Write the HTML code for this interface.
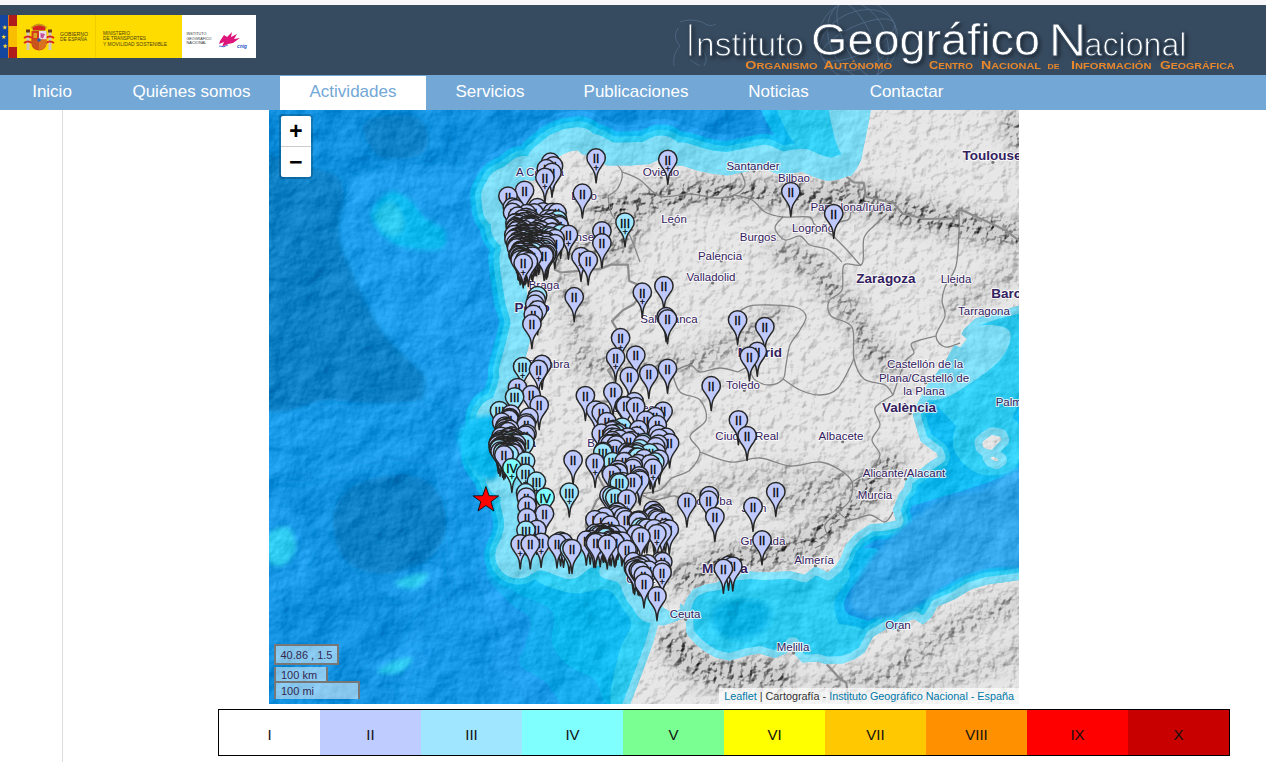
<!DOCTYPE html>
<html lang="es"><head><meta charset="utf-8"><title>Instituto Geográfico Nacional</title>
<style>
html,body{margin:0;padding:0}
body{width:1266px;height:762px;overflow:hidden;background:#fff;position:relative;font-family:"Liberation Sans",sans-serif}
#top{position:absolute;left:0;top:0;width:1266px;height:5px;background:#f8f8fa}
#hdr{position:absolute;left:0;top:5px;width:1266px;height:70px;background:#374b60;overflow:hidden}
#nav{position:absolute;left:0;top:75px;width:1266px;height:35px;background:#72a7d6}
.ni{position:absolute;top:0;height:35px;line-height:33px;text-align:center;color:#fff;font-size:17px;white-space:nowrap}
.ni.act{background:#fff;color:#72a7d6;top:1px;height:34px;line-height:31px}
#vline{position:absolute;left:62px;top:110px;width:1px;height:652px;background:#ddd}
#map{position:absolute;left:269px;top:110px;width:750px;height:594px;overflow:hidden;background:#1e90e0}
#zoom{position:absolute;left:10px;top:4px;width:30px;height:61px;border:2px solid rgba(0,0,0,0.2);border-radius:4px;background-clip:padding-box}
#zoom div{width:30px;height:30px;background:#fff;color:#000;text-align:center;font:bold 23px/34px "Liberation Mono",monospace;overflow:hidden}
#zoom div:first-child{border-bottom:1px solid #ccc;border-radius:2px 2px 0 0}
#zoom div:last-child{border-radius:0 0 2px 2px}
#mpos{position:absolute;left:5px;top:534px;width:61px;height:17px;border:2px solid #777;background:rgba(255,255,255,0.5);font-size:11px;line-height:19px;color:#35294f;text-align:center;white-space:nowrap}
.sc{position:absolute;left:5px;border:2px solid #777;background:rgba(255,255,255,0.5);font-size:11px;color:#35294f;padding-left:5px;white-space:nowrap;box-sizing:border-box}
#sckm{top:557px;width:54px;height:16px;border-top:none;line-height:16px}
#scmi{top:571px;width:86px;height:18px;border-bottom:none;line-height:17px}
#attr{position:absolute;right:0;bottom:0;height:16px;line-height:16px;padding:0 5px;background:rgba(255,255,255,0.7);font-size:10.8px;color:#333;white-space:nowrap}
#attr a{color:#0078a8;text-decoration:none}
#legend{position:absolute;left:218px;top:709px;width:1010px;height:45px;border:1px solid #000}
.lc{position:absolute;top:0;width:101px;height:45px;line-height:49px;text-align:center;font-size:15px;color:#111}
</style></head><body>
<div id="top"></div>
<div id="hdr">
<svg width="1266" height="70" viewBox="0 5 1266 70" style="position:absolute;left:0;top:0">
<!-- faint globe + map watermark -->
<g fill="none" stroke="#5b7897" stroke-width="0.8" opacity="0.7">
<circle cx="858" cy="40" r="40"/>
<ellipse cx="858" cy="40" rx="40" ry="14" transform="rotate(-25 858 40)"/>
<ellipse cx="858" cy="40" rx="40" ry="28" transform="rotate(-25 858 40)"/>
<ellipse cx="858" cy="40" rx="14" ry="40" transform="rotate(-25 858 40)"/>
<ellipse cx="858" cy="40" rx="28" ry="40" transform="rotate(-25 858 40)"/>
<path d="M680 22q10-4 22 0q8 6 14 2M678 28q-6 10 2 18q-8 8-6 20M700 48q10 8 4 18M690 60l10 6"/>
</g>
<!-- logos -->
<rect x="0" y="15" width="256" height="43" fill="#ffdc00"/>
<rect x="0" y="15" width="8" height="43" fill="#1446a0"/>
<rect x="8.5" y="15" width="8.5" height="43" fill="#b01c1c"/>
<rect x="8.5" y="26" width="8.5" height="21" fill="#f9be00"/>
<g fill="#ffd83a"><polygon points="4.8,24.9 5.4,26.6 7.3,26.7 5.8,27.8 6.3,29.6 4.8,28.6 3.3,29.6 3.8,27.8 2.3,26.7 4.2,26.6"/><polygon points="3.8,34.4 4.4,36.1 6.3,36.2 4.8,37.3 5.3,39.1 3.8,38.1 2.3,39.1 2.8,37.3 1.3,36.2 3.2,36.1"/><polygon points="5.2,43.6 5.8,45.3 7.7,45.4 6.2,46.5 6.7,48.3 5.2,47.3 3.7,48.3 4.2,46.5 2.7,45.4 4.6,45.3"/></g>
<rect x="182" y="15" width="74" height="43" fill="#fff"/>
<rect x="95" y="15" width="0.6" height="43" fill="#e8c400"/>
<!-- coat of arms -->
<g>
<path d="M31 27q8-7 16 0l-2 4h-12z" fill="#c9931a"/>
<path d="M33 27q6-3 12 0v3h-12z" fill="#d8241f"/>
<rect x="26.5" y="31" width="3" height="19" fill="#cfc7c0"/><rect x="48.5" y="31" width="3" height="19" fill="#cfc7c0"/>
<rect x="26" y="29.5" width="4" height="3" fill="#6e3a14"/><rect x="48" y="29.5" width="4" height="3" fill="#6e3a14"/>
<path d="M24 38q4-3 8 0M46 38q4-3 8 0M24 43q4-3 8 0M46 43q4-3 8 0" stroke="#d8241f" stroke-width="1.8" fill="none"/>
<path d="M31.500 31h15v12q0 7-7.500 7.500q-7.500-.5-7.500-7.500z" fill="#d63a1e"/>
<rect x="39" y="31" width="7.500" height="8.500" fill="#e9dfe6"/>
<path d="M40.500 33l4.500 1l-2 4.500l-2.500-1z" fill="#c5509a"/>
<rect x="33.500" y="33" width="3.500" height="5" fill="#d9a520"/>
<path d="M39 39.500h7.500v3.500q0 6-7.500 7z" fill="#d9721e"/>
<path d="M31.500 39.500h7.500v10.500q-7.500-1-7.500-7z" fill="#c8541b"/>
<circle cx="39" cy="40" r="1.800" fill="#2a56a8"/>
</g>
<g font-family="Liberation Sans, sans-serif" fill="#4a3c10">
<text x="60" y="35.500" font-size="4.700" textLength="28" lengthAdjust="spacingAndGlyphs">GOBIERNO</text>
<text x="60" y="41" font-size="4.700" textLength="27" lengthAdjust="spacingAndGlyphs">DE ESPAÑA</text>
<text x="103" y="35" font-size="4.500" textLength="27" lengthAdjust="spacingAndGlyphs">MINISTERIO</text>
<text x="103" y="40.300" font-size="4.500" textLength="43" lengthAdjust="spacingAndGlyphs">DE TRANSPORTES</text>
<text x="103" y="45.600" font-size="4.500" textLength="64" lengthAdjust="spacingAndGlyphs">Y MOVILIDAD SOSTENIBLE</text>
</g>
<g font-family="Liberation Sans, sans-serif" fill="#333">
<text x="186.500" y="35.300" font-size="3.500" textLength="20" lengthAdjust="spacingAndGlyphs">INSTITUTO</text>
<text x="186.500" y="39.800" font-size="3.500" textLength="25" lengthAdjust="spacingAndGlyphs">GEOGRÁFICO</text>
<text x="186.500" y="44.300" font-size="3.500" textLength="20" lengthAdjust="spacingAndGlyphs">NACIONAL</text>
</g>
<path d="M220 41l4-6l3 2l5-5l-1 5l6-3l-3 5l6-1l-7 5l-5 1l-6 3l2-5l-5 2z" fill="#e0157c"/>
<path d="M219 46q5 2 9-1" stroke="#2a56c8" stroke-width="0.800" fill="none"/>
<text x="237" y="47.500" font-size="4.500" font-style="italic" font-weight="bold" fill="#2a56c8" font-family="Liberation Sans, sans-serif" textLength="10" lengthAdjust="spacingAndGlyphs">cnig</text>
<!-- title -->
<g fill="#fff" font-family="Liberation Sans, sans-serif">
<g style="filter:drop-shadow(2px 2px 2px rgba(0,0,0,0.45))">
<text y="55.800" class="thin"><tspan x="687.300" font-size="46.500" textLength="6" lengthAdjust="spacingAndGlyphs">I</tspan><tspan x="696" font-size="33.500" textLength="108" lengthAdjust="spacingAndGlyphs">nstituto</tspan></text>
<text x="811" y="55.300" font-size="45" class="semi" textLength="229" lengthAdjust="spacingAndGlyphs">Geográfico</text>
<text y="55.800" class="thin"><tspan x="1048.500" font-size="46.500" textLength="38" lengthAdjust="spacingAndGlyphs">N</tspan><tspan x="1084.500" font-size="33.500" textLength="102" lengthAdjust="spacingAndGlyphs">acional</tspan></text>
</g>
</g>
<g fill="#e8872b" font-family="Liberation Sans, sans-serif" font-weight="bold" font-size="8.500" lengthAdjust="spacingAndGlyphs">
<text x="745.300" y="68.500" textLength="72.300" lengthAdjust="spacingAndGlyphs"><tspan font-size="11">O</tspan>RGANISMO</text>
<text x="823.500" y="68.500" textLength="68.700" lengthAdjust="spacingAndGlyphs"><tspan font-size="11">A</tspan>UTÓNOMO</text>
<text x="929" y="68.500" textLength="44" lengthAdjust="spacingAndGlyphs"><tspan font-size="11">C</tspan>ENTRO</text>
<text x="981" y="68.500" textLength="60" lengthAdjust="spacingAndGlyphs"><tspan font-size="11">N</tspan>ACIONAL</text>
<text x="1047.600" y="68.500" font-size="6.500" textLength="12" lengthAdjust="spacingAndGlyphs">DE</text>
<text x="1071" y="68.500" textLength="80.500" lengthAdjust="spacingAndGlyphs"><tspan font-size="11">I</tspan>NFORMACIÓN</text>
<text x="1160" y="68.500" textLength="74.500" lengthAdjust="spacingAndGlyphs"><tspan font-size="11">G</tspan>EOGRÁFICA</text>
</g>
</svg>
<style>.thin{stroke:#374b60;stroke-width:1.1px}.semi{stroke:#374b60;stroke-width:.7px}</style>
</div>
<div id="nav"><a class="ni" style="left:1px;width:102px">Inicio</a><a class="ni" style="left:103px;width:177px">Quiénes somos</a><a class="ni act" style="left:280px;width:146px">Actividades</a><a class="ni" style="left:426px;width:128px">Servicios</a><a class="ni" style="left:554px;width:164px">Publicaciones</a><a class="ni" style="left:718px;width:121px">Noticias</a><a class="ni" style="left:839px;width:135px">Contactar</a></div>
<div id="vline"></div>
<div id="map">
<svg width="750" height="594" viewBox="0 0 750 594" style="position:absolute;left:0;top:0;font-family:'Liberation Sans',sans-serif"><defs>
<filter id="reliefL" x="0" y="0" width="100%" height="100%" color-interpolation-filters="sRGB">
<feTurbulence type="fractalNoise" baseFrequency="0.11" numOctaves="4" seed="7" result="n"/>
<feDiffuseLighting in="n" surfaceScale="0.8" diffuseConstant="1.42" lighting-color="#fff" result="l"><feDistantLight azimuth="225" elevation="45"/></feDiffuseLighting>
<feComposite in="l" in2="SourceGraphic" operator="arithmetic" k1="1" k2="0" k3="0" k4="0" result="m"/>
<feComposite in="m" in2="SourceGraphic" operator="in"/>
</filter>
<filter id="reliefM" x="0" y="0" width="100%" height="100%" color-interpolation-filters="sRGB">
<feTurbulence type="fractalNoise" baseFrequency="0.13" numOctaves="4" seed="3" result="n"/>
<feDiffuseLighting in="n" surfaceScale="4" diffuseConstant="1.42" lighting-color="#fff" result="l"><feDistantLight azimuth="225" elevation="45"/></feDiffuseLighting>
<feComposite in="l" in2="SourceGraphic" operator="arithmetic" k1="1" k2="0" k3="0" k4="0" result="m"/>
<feComposite in="m" in2="SourceGraphic" operator="in"/>
</filter>
<filter id="reliefO" x="0" y="0" width="100%" height="100%" color-interpolation-filters="sRGB">
<feTurbulence type="fractalNoise" baseFrequency="0.028" numOctaves="5" seed="11" result="n"/>
<feDiffuseLighting in="n" surfaceScale="3" diffuseConstant="1" lighting-color="#fff" result="l"><feDistantLight azimuth="225" elevation="45"/></feDiffuseLighting>
<feComposite in="l" in2="SourceGraphic" operator="arithmetic" k1="0" k2="0.45" k3="1" k4="-0.318"/>
</filter>
<filter id="b2"><feGaussianBlur stdDeviation="2"/></filter>
<filter id="b4"><feGaussianBlur stdDeviation="4"/></filter>
<filter id="b8"><feGaussianBlur stdDeviation="8"/></filter>
<clipPath id="landclip"><path d="M608.3 -30.3L603.8 -11.1L599.2 14.4L594.7 36.5L592.4 49.1L588.8 56.7L586.9 59.8L582.4 65.4L577.4 66.7L568.3 69.8L558.3 71.1L544.6 66.7L533.2 61.7L524.1 62.9L521.0 68.6L511.9 65.4L501.4 61.1L495.0 57.9L486.4 59.8L474.1 62.3L458.2 65.4L442.2 63.6L428.1 60.4L412.6 55.4L400.8 55.4L392.2 48.5L380.8 54.1L361.2 55.4L338.0 55.4L323.4 47.2L312.5 44.1L308.9 40.3L300.2 41.6L292.0 45.3L280.2 54.8L282.9 60.4L285.2 64.8L276.1 66.1L262.5 71.1L256.1 69.2L246.5 77.3L239.2 79.8L235.1 86.7L236.5 97.2L242.9 102.2L246.5 104.1L251.1 103.5L246.5 111.5L244.7 116.5L251.1 119.5L257.9 114.6L254.7 123.9L260.2 126.9L254.7 131.3L254.7 136.2L262.5 136.2L255.6 144.2L253.4 148.5L254.3 159.5L256.1 170.5L258.8 188.1L263.4 203.2L264.7 215.3L260.2 233.9L255.6 251.3L252.9 261.4L254.7 265.0L249.7 284.0L245.6 295.8L238.8 306.5L230.1 310.0L232.9 319.4L229.7 331.1L226.0 344.0L229.7 349.2L238.3 349.2L244.2 347.5L251.1 339.9L249.7 348.7L242.0 351.0L237.0 353.3L238.8 365.5L246.5 363.8L253.8 360.3L258.8 366.1L257.9 380.6L254.3 392.2L257.9 406.6L257.9 420.9L254.3 435.2L249.3 445.5L251.5 446.6L263.8 441.5L270.2 439.8L282.9 442.1L294.3 446.6L300.2 448.9L310.2 440.9L321.2 436.9L335.3 434.7L342.1 436.9L347.6 440.9L360.3 447.2L369.0 458.0L366.2 462.0L371.7 469.4L376.2 473.3L371.7 473.3L375.3 480.7L380.8 487.5L384.0 493.1L389.0 493.1L395.8 498.8L403.1 502.7L411.3 499.3L411.3 493.1L414.9 496.5L417.2 489.2L424.0 479.6L436.3 474.5L447.7 472.8L453.6 468.2L457.2 462.6L471.8 462.6L482.3 461.4L498.2 462.6L521.0 460.9L535.5 464.8L546.4 456.3L558.7 462.6L567.4 455.2L572.4 446.6L576.5 435.2L586.5 423.8L601.5 414.0L613.8 413.5L627.0 410.6L623.8 399.7L627.5 390.4L630.2 383.5L635.2 377.7L636.6 369.6L642.5 364.4L652.5 358.6L660.7 352.1L668.9 346.9L667.5 342.8L663.4 339.9L651.6 331.1L648.4 320.6L643.8 304.7L648.8 292.9L655.2 281.0L659.3 273.3L665.2 266.2L677.1 250.7L680.2 244.1L685.7 235.1L691.2 237.5L698.0 229.1L692.5 224.3L694.8 219.5L706.2 208.7L715.3 205.6L728.0 201.4L740.3 198.4L751.7 195.4L757.6 189.3L776.7 175.9L776.7 -30.3Z"/><path d="M344.4 619.9L358.9 600.1L372.1 565.8L378.5 548.6L384.0 533.0L389.0 515.1L394.4 515.6L405.8 511.7L414.9 507.8L416.7 509.4L417.2 520.1L418.1 524.6L426.7 534.1L435.4 541.3L446.3 547.5L460.4 550.8L479.5 545.3L490.9 543.6L505.9 548.0L517.3 543.6L523.7 534.7L524.6 543.0L533.2 552.5L548.3 551.4L556.9 554.2L573.7 553.6L585.6 549.2L595.6 542.5L604.2 526.8L617.4 519.0L629.3 520.1L637.9 511.7L645.2 508.9L653.8 514.5L662.5 507.2L668.4 496.5L685.7 489.2L701.6 479.6L718.0 474.5L740.3 471.6L758.1 468.8L781.3 466.5L781.3 619.9Z"/><path d="M713.0 332.3L717.6 328.2L723.0 324.7L731.2 326.4L732.6 329.9L726.7 335.8L723.0 339.9L717.6 339.3L713.9 337.0Z"/><path d="M721.2 347.5L724.4 346.3L730.3 349.8L727.6 351.6L723.0 349.8Z"/></clipPath>
</defs><g filter="url(#reliefO)"><rect width="750" height="594" fill="#1090de"/><g filter="url(#b4)" fill="#1698e6"><path d="M-19.0 290.0C-5.7 278.7 31.8 292.0 61.0 292.0C90.2 292.0 127.7 291.2 156.0 290.0C184.3 288.8 216.8 273.3 231.0 285.0C245.2 296.7 246.0 345.8 241.0 360.0C236.0 374.2 211.8 370.0 201.0 370.0C190.2 370.0 187.7 362.5 176.0 360.0C164.3 357.5 148.5 355.0 131.0 355.0C113.5 355.0 87.7 357.5 71.0 360.0C54.3 362.5 46.0 370.0 31.0 370.0C16.0 370.0 -10.7 373.3 -19.0 360.0C-27.3 346.7 -32.3 301.3 -19.0 290.0Z"/><path d="M171.0 360.0C175.0 353.3 191.0 365.0 201.0 370.0C211.0 375.0 226.0 373.3 231.0 390.0C236.0 406.7 236.0 453.3 231.0 470.0C226.0 486.7 209.3 490.8 201.0 490.0C192.7 489.2 185.0 478.3 181.0 465.0C177.0 451.7 178.7 427.5 177.0 410.0C175.3 392.5 167.0 366.7 171.0 360.0Z"/><path d="M161.0 495.0C173.5 484.2 199.3 474.2 211.0 480.0C222.7 485.8 222.7 508.3 231.0 530.0C239.3 551.7 275.2 596.7 261.0 610.0C246.8 623.3 166.8 620.8 146.0 610.0C125.2 599.2 133.5 564.2 136.0 545.0C138.5 525.8 148.5 505.8 161.0 495.0Z"/></g><g filter="url(#b2)" fill="#0e80c6"><path d="M-19.0 61.0C-10.7 23.3 16.8 57.3 31.0 58.0C45.2 58.7 58.5 59.7 66.0 65.0C73.5 70.3 75.2 80.3 76.0 90.0C76.8 99.7 69.8 111.3 71.0 123.0C72.2 134.7 76.7 145.0 83.0 160.0C89.3 175.0 101.0 199.7 109.0 213.0C117.0 226.3 123.2 231.3 131.0 240.0C138.8 248.7 151.8 257.0 156.0 265.0C160.2 273.0 163.5 283.3 156.0 288.0C148.5 292.7 126.8 292.7 111.0 293.0C95.2 293.3 82.7 291.5 61.0 290.0C39.3 288.5 -5.7 322.2 -19.0 284.0C-32.3 245.8 -27.3 98.7 -19.0 61.0Z"/><path d="M94.0 18.0C93.7 11.3 100.3 8.8 109.0 7.0C117.7 5.2 137.7 4.0 146.0 7.0C154.3 10.0 158.2 18.7 159.0 25.0C159.8 31.3 159.0 41.3 151.0 45.0C143.0 48.7 120.5 51.5 111.0 47.0C101.5 42.5 94.3 24.7 94.0 18.0Z"/><path d="M64.0 412.0C64.0 400.7 68.2 389.5 76.0 382.0C83.8 374.5 98.5 369.3 111.0 367.0C123.5 364.7 140.7 364.2 151.0 368.0C161.3 371.8 169.0 380.0 173.0 390.0C177.0 400.0 178.7 417.2 175.0 428.0C171.3 438.8 161.7 449.0 151.0 455.0C140.3 461.0 123.5 464.8 111.0 464.0C98.5 463.2 83.8 458.7 76.0 450.0C68.2 441.3 64.0 423.3 64.0 412.0Z"/></g><g filter="url(#b2)"><path d="M76.0 90.0C78.5 80.8 76.8 73.7 86.0 68.0C95.2 62.3 115.2 58.2 131.0 56.0C146.8 53.8 165.2 53.0 181.0 55.0C196.8 57.0 216.8 53.8 226.0 68.0C235.2 82.2 234.3 103.0 236.0 140.0C237.7 177.0 248.5 265.0 236.0 290.0C223.5 315.0 174.3 294.2 161.0 290.0C147.7 285.8 161.0 273.3 156.0 265.0C151.0 256.7 138.8 248.7 131.0 240.0C123.2 231.3 117.0 226.3 109.0 213.0C101.0 199.7 89.3 175.0 83.0 160.0C76.7 145.0 72.2 134.7 71.0 123.0C69.8 111.3 73.5 99.2 76.0 90.0Z" fill="#1c9cea"/><path d="M102.0 102.0C103.7 95.3 114.5 84.0 121.0 82.0C127.5 80.0 135.2 85.7 141.0 90.0C146.8 94.3 150.3 103.0 156.0 108.0C161.7 113.0 172.2 115.0 175.0 120.0C177.8 125.0 177.8 134.8 173.0 138.0C168.2 141.2 153.8 139.7 146.0 139.0C138.2 138.3 131.8 136.8 126.0 134.0C120.2 131.2 115.0 127.3 111.0 122.0C107.0 116.7 100.3 108.7 102.0 102.0Z" fill="#0eb8ee"/><path d="M107.0 104.0C108.7 99.3 118.3 90.7 123.0 92.0C127.7 93.3 134.3 106.3 135.0 112.0C135.7 117.7 130.7 124.7 127.0 126.0C123.3 127.3 116.3 123.7 113.0 120.0C109.7 116.3 105.3 108.7 107.0 104.0Z" fill="#2ecaf0"/><path d="M111.0 478.0C111.0 473.0 126.0 463.7 136.0 460.0C146.0 456.3 165.8 452.7 171.0 456.0C176.2 459.3 172.8 474.3 167.0 480.0C161.2 485.7 145.3 490.3 136.0 490.0C126.7 489.7 111.0 483.0 111.0 478.0Z" fill="#1c9cea"/><path d="M126.0 474.0C125.0 472.0 135.5 467.7 141.0 466.0C146.5 464.3 158.0 462.0 159.0 464.0C160.0 466.0 152.5 476.3 147.0 478.0C141.5 479.7 127.0 476.0 126.0 474.0Z" fill="#2ecaf0"/><path d="M93.0 566.0C91.3 561.3 106.3 550.3 116.0 546.0C125.7 541.7 144.3 538.5 151.0 540.0C157.7 541.5 160.2 549.3 156.0 555.0C151.8 560.7 136.5 572.2 126.0 574.0C115.5 575.8 94.7 570.7 93.0 566.0Z" fill="#1c9cea"/><path d="M109.0 562.0C108.2 560.2 120.3 553.3 126.0 551.0C131.7 548.7 142.2 546.2 143.0 548.0C143.8 549.8 136.7 559.7 131.0 562.0C125.3 564.3 109.8 563.8 109.0 562.0Z" fill="#2ecaf0"/><path d="M-9.0 405.0C-3.0 392.8 18.3 397.8 27.0 402.0C35.7 406.2 42.7 418.7 43.0 430.0C43.3 441.3 37.7 462.5 29.0 470.0C20.3 477.5 -2.7 485.8 -9.0 475.0C-15.3 464.2 -15.0 417.2 -9.0 405.0Z" fill="#1c9cea"/><path d="M-1.0 425.0C2.3 419.7 14.3 415.8 19.0 418.0C23.7 420.2 27.8 431.8 27.0 438.0C26.2 444.2 18.7 453.0 14.0 455.0C9.3 457.0 1.5 455.0 -1.0 450.0C-3.5 445.0 -4.3 430.3 -1.0 425.0Z" fill="#2ecaf0"/></g><path d="M608.3 -30.3L603.8 -11.1L599.2 14.4L594.7 36.5L592.4 49.1L588.8 56.7L586.9 59.8L582.4 65.4L577.4 66.7L568.3 69.8L558.3 71.1L544.6 66.7L533.2 61.7L524.1 62.9L521.0 68.6L511.9 65.4L501.4 61.1L495.0 57.9L486.4 59.8L474.1 62.3L458.2 65.4L442.2 63.6L428.1 60.4L412.6 55.4L400.8 55.4L392.2 48.5L380.8 54.1L361.2 55.4L338.0 55.4L323.4 47.2L312.5 44.1L308.9 40.3L300.2 41.6L292.0 45.3L280.2 54.8L282.9 60.4L285.2 64.8L276.1 66.1L262.5 71.1L256.1 69.2L246.5 77.3L239.2 79.8L235.1 86.7L236.5 97.2L242.9 102.2L246.5 104.1L251.1 103.5L246.5 111.5L244.7 116.5L251.1 119.5L257.9 114.6L254.7 123.9L260.2 126.9L254.7 131.3L254.7 136.2L262.5 136.2L255.6 144.2L253.4 148.5L254.3 159.5L256.1 170.5L258.8 188.1L263.4 203.2L264.7 215.3L260.2 233.9L255.6 251.3L252.9 261.4L254.7 265.0L249.7 284.0L245.6 295.8L238.8 306.5L230.1 310.0L232.9 319.4L229.7 331.1L226.0 344.0L229.7 349.2L238.3 349.2L244.2 347.5L251.1 339.9L249.7 348.7L242.0 351.0L237.0 353.3L238.8 365.5L246.5 363.8L253.8 360.3L258.8 366.1L257.9 380.6L254.3 392.2L257.9 406.6L257.9 420.9L254.3 435.2L249.3 445.5L251.5 446.6L263.8 441.5L270.2 439.8L282.9 442.1L294.3 446.6L300.2 448.9L310.2 440.9L321.2 436.9L335.3 434.7L342.1 436.9L347.6 440.9L360.3 447.2L369.0 458.0L366.2 462.0L371.7 469.4L376.2 473.3L371.7 473.3L375.3 480.7L380.8 487.5L384.0 493.1L389.0 493.1L395.8 498.8L403.1 502.7L411.3 499.3L411.3 493.1L414.9 496.5L417.2 489.2L424.0 479.6L436.3 474.5L447.7 472.8L453.6 468.2L457.2 462.6L471.8 462.6L482.3 461.4L498.2 462.6L521.0 460.9L535.5 464.8L546.4 456.3L558.7 462.6L567.4 455.2L572.4 446.6L576.5 435.2L586.5 423.8L601.5 414.0L613.8 413.5L627.0 410.6L623.8 399.7L627.5 390.4L630.2 383.5L635.2 377.7L636.6 369.6L642.5 364.4L652.5 358.6L660.7 352.1L668.9 346.9L667.5 342.8L663.4 339.9L651.6 331.1L648.4 320.6L643.8 304.7L648.8 292.9L655.2 281.0L659.3 273.3L665.2 266.2L677.1 250.7L680.2 244.1L685.7 235.1L691.2 237.5L698.0 229.1L692.5 224.3L694.8 219.5L706.2 208.7L715.3 205.6L728.0 201.4L740.3 198.4L751.7 195.4L757.6 189.3L776.7 175.9L776.7 -30.3ZM344.4 619.9L358.9 600.1L372.1 565.8L378.5 548.6L384.0 533.0L389.0 515.1L394.4 515.6L405.8 511.7L414.9 507.8L416.7 509.4L417.2 520.1L418.1 524.6L426.7 534.1L435.4 541.3L446.3 547.5L460.4 550.8L479.5 545.3L490.9 543.6L505.9 548.0L517.3 543.6L523.7 534.7L524.6 543.0L533.2 552.5L548.3 551.4L556.9 554.2L573.7 553.6L585.6 549.2L595.6 542.5L604.2 526.8L617.4 519.0L629.3 520.1L637.9 511.7L645.2 508.9L653.8 514.5L662.5 507.2L668.4 496.5L685.7 489.2L701.6 479.6L718.0 474.5L740.3 471.6L758.1 468.8L781.3 466.5L781.3 619.9ZM713.0 332.3L717.6 328.2L723.0 324.7L731.2 326.4L732.6 329.9L726.7 335.8L723.0 339.9L717.6 339.3L713.9 337.0ZM721.2 347.5L724.4 346.3L730.3 349.8L727.6 351.6L723.0 349.8Z" fill="none" stroke="#1c9cea" stroke-width="40" stroke-linejoin="round"/><path d="M577.4 66.7L568.3 69.8L558.3 71.1L544.6 66.7L533.2 61.7L524.1 62.9L521.0 68.6L511.9 65.4L501.4 61.1L495.0 57.9L486.4 59.8L474.1 62.3L458.2 65.4L442.2 63.6L428.1 60.4L412.6 55.4L400.8 55.4L392.2 48.5L380.8 54.1L361.2 55.4L338.0 55.4L323.4 47.2L312.5 44.1L308.9 40.3L300.2 41.6L292.0 45.3L280.2 54.8L282.9 60.4L285.2 64.8L276.1 66.1L262.5 71.1L256.1 69.2L246.5 77.3L239.2 79.8L235.1 86.7L236.5 97.2L242.9 102.2L246.5 104.1L251.1 103.5L246.5 111.5L244.7 116.5L251.1 119.5L257.9 114.6L254.7 123.9L260.2 126.9L254.7 131.3L254.7 136.2L262.5 136.2L255.6 144.2L253.4 148.5L254.3 159.5L256.1 170.5L258.8 188.1L263.4 203.2L264.7 215.3L260.2 233.9L255.6 251.3L252.9 261.4L254.7 265.0L249.7 284.0L245.6 295.8L238.8 306.5L230.1 310.0L232.9 319.4L229.7 331.1L226.0 344.0L229.7 349.2L238.3 349.2L244.2 347.5L251.1 339.9L249.7 348.7L242.0 351.0L237.0 353.3L238.8 365.5L246.5 363.8L253.8 360.3L258.8 366.1L257.9 380.6L254.3 392.2L257.9 406.6L257.9 420.9L254.3 435.2L249.3 445.5" fill="none" stroke="#1c9cea" stroke-width="80" stroke-linejoin="round" stroke-linecap="round"/><path d="M249.3 445.5L251.5 446.6L263.8 441.5L270.2 439.8L282.9 442.1L294.3 446.6L300.2 448.9L310.2 440.9L321.2 436.9L335.3 434.7L342.1 436.9L347.6 440.9L360.3 447.2L369.0 458.0L366.2 462.0L371.7 469.4L376.2 473.3L371.7 473.3L375.3 480.7L380.8 487.5L384.0 493.1" fill="none" stroke="#1c9cea" stroke-width="74" stroke-linejoin="round" stroke-linecap="round"/><path d="M206.0 460.0C201.0 468.3 216.8 488.3 221.0 500.0C225.2 511.7 231.0 520.8 231.0 530.0C231.0 539.2 217.7 547.5 221.0 555.0C224.3 562.5 241.8 566.7 251.0 575.0C260.2 583.3 256.0 600.0 276.0 605.0C296.0 610.0 353.5 620.8 371.0 605.0C388.5 589.2 387.7 534.2 381.0 510.0C374.3 485.8 352.7 470.0 331.0 460.0C309.3 450.0 271.8 450.0 251.0 450.0C230.2 450.0 211.0 451.7 206.0 460.0Z" fill="#1c9cea"/><path d="M217.0 462.0C215.3 469.2 233.7 485.2 241.0 493.0C248.3 500.8 258.3 502.3 261.0 509.0C263.7 515.7 258.7 525.3 257.0 533.0C255.3 540.7 247.8 548.5 251.0 555.0C254.2 561.5 266.8 563.7 276.0 572.0C285.2 580.3 290.2 599.5 306.0 605.0C321.8 610.5 358.5 620.8 371.0 605.0C383.5 589.2 387.7 534.2 381.0 510.0C374.3 485.8 352.7 470.0 331.0 460.0C309.3 450.0 270.0 449.7 251.0 450.0C232.0 450.3 218.7 454.8 217.0 462.0Z" fill="#13a8ea"/><path d="M631.0 285.0L761.0 285.0L761.0 387.0L691.0 405.0L631.0 418.0Z" fill="#1c9cea"/><path d="M211.0 70.0C202.7 81.7 201.0 115.0 201.0 140.0C201.0 165.0 206.0 195.0 211.0 220.0C216.0 245.0 224.3 278.3 231.0 290.0C237.7 301.7 247.7 326.7 251.0 290.0C254.3 253.3 257.7 106.7 251.0 70.0C244.3 33.3 219.3 58.3 211.0 70.0Z" fill="#1c9cea"/><path d="M608.3 -30.3L603.8 -11.1L599.2 14.4L594.7 36.5L592.4 49.1L588.8 56.7L586.9 59.8L582.4 65.4L577.4 66.7L568.3 69.8L558.3 71.1L544.6 66.7L533.2 61.7L524.1 62.9L521.0 68.6L511.9 65.4L501.4 61.1L495.0 57.9L486.4 59.8L474.1 62.3L458.2 65.4L442.2 63.6L428.1 60.4L412.6 55.4L400.8 55.4L392.2 48.5L380.8 54.1L361.2 55.4L338.0 55.4L323.4 47.2L312.5 44.1L308.9 40.3L300.2 41.6L292.0 45.3L280.2 54.8L282.9 60.4L285.2 64.8L276.1 66.1L262.5 71.1L256.1 69.2L246.5 77.3L239.2 79.8L235.1 86.7L236.5 97.2L242.9 102.2L246.5 104.1L251.1 103.5L246.5 111.5L244.7 116.5L251.1 119.5L257.9 114.6L254.7 123.9L260.2 126.9L254.7 131.3L254.7 136.2L262.5 136.2L255.6 144.2L253.4 148.5L254.3 159.5L256.1 170.5L258.8 188.1L263.4 203.2L264.7 215.3L260.2 233.9L255.6 251.3L252.9 261.4L254.7 265.0L249.7 284.0L245.6 295.8L238.8 306.5L230.1 310.0L232.9 319.4L229.7 331.1L226.0 344.0L229.7 349.2L238.3 349.2L244.2 347.5L251.1 339.9L249.7 348.7L242.0 351.0L237.0 353.3L238.8 365.5L246.5 363.8L253.8 360.3L258.8 366.1L257.9 380.6L254.3 392.2L257.9 406.6L257.9 420.9L254.3 435.2L249.3 445.5L251.5 446.6L263.8 441.5L270.2 439.8L282.9 442.1L294.3 446.6L300.2 448.9L310.2 440.9L321.2 436.9L335.3 434.7L342.1 436.9L347.6 440.9L360.3 447.2L369.0 458.0L366.2 462.0L371.7 469.4L376.2 473.3L371.7 473.3L375.3 480.7L380.8 487.5L384.0 493.1L389.0 493.1L395.8 498.8L403.1 502.7L411.3 499.3L411.3 493.1L414.9 496.5L417.2 489.2L424.0 479.6L436.3 474.5L447.7 472.8L453.6 468.2L457.2 462.6L471.8 462.6L482.3 461.4L498.2 462.6L521.0 460.9L535.5 464.8L546.4 456.3L558.7 462.6L567.4 455.2L572.4 446.6L576.5 435.2L586.5 423.8L601.5 414.0L613.8 413.5L627.0 410.6L623.8 399.7L627.5 390.4L630.2 383.5L635.2 377.7L636.6 369.6L642.5 364.4L652.5 358.6L660.7 352.1L668.9 346.9L667.5 342.8L663.4 339.9L651.6 331.1L648.4 320.6L643.8 304.7L648.8 292.9L655.2 281.0L659.3 273.3L665.2 266.2L677.1 250.7L680.2 244.1L685.7 235.1L691.2 237.5L698.0 229.1L692.5 224.3L694.8 219.5L706.2 208.7L715.3 205.6L728.0 201.4L740.3 198.4L751.7 195.4L757.6 189.3L776.7 175.9L776.7 -30.3ZM344.4 619.9L358.9 600.1L372.1 565.8L378.5 548.6L384.0 533.0L389.0 515.1L394.4 515.6L405.8 511.7L414.9 507.8L416.7 509.4L417.2 520.1L418.1 524.6L426.7 534.1L435.4 541.3L446.3 547.5L460.4 550.8L479.5 545.3L490.9 543.6L505.9 548.0L517.3 543.6L523.7 534.7L524.6 543.0L533.2 552.5L548.3 551.4L556.9 554.2L573.7 553.6L585.6 549.2L595.6 542.5L604.2 526.8L617.4 519.0L629.3 520.1L637.9 511.7L645.2 508.9L653.8 514.5L662.5 507.2L668.4 496.5L685.7 489.2L701.6 479.6L718.0 474.5L740.3 471.6L758.1 468.8L781.3 466.5L781.3 619.9ZM713.0 332.3L717.6 328.2L723.0 324.7L731.2 326.4L732.6 329.9L726.7 335.8L723.0 339.9L717.6 339.3L713.9 337.0ZM721.2 347.5L724.4 346.3L730.3 349.8L727.6 351.6L723.0 349.8Z" fill="none" stroke="#0eb8ee" stroke-width="32" stroke-linejoin="round"/><path d="M577.4 66.7L568.3 69.8L558.3 71.1L544.6 66.7L533.2 61.7L524.1 62.9L521.0 68.6L511.9 65.4L501.4 61.1L495.0 57.9L486.4 59.8L474.1 62.3L458.2 65.4L442.2 63.6L428.1 60.4L412.6 55.4L400.8 55.4L392.2 48.5L380.8 54.1L361.2 55.4L338.0 55.4L323.4 47.2L312.5 44.1L308.9 40.3L300.2 41.6L292.0 45.3L280.2 54.8L282.9 60.4L285.2 64.8L276.1 66.1L262.5 71.1L256.1 69.2L246.5 77.3L239.2 79.8L235.1 86.7L236.5 97.2L242.9 102.2L246.5 104.1L251.1 103.5L246.5 111.5L244.7 116.5L251.1 119.5L257.9 114.6L254.7 123.9L260.2 126.9L254.7 131.3L254.7 136.2L262.5 136.2L255.6 144.2L253.4 148.5L254.3 159.5L256.1 170.5L258.8 188.1L263.4 203.2L264.7 215.3L260.2 233.9L255.6 251.3L252.9 261.4L254.7 265.0L249.7 284.0L245.6 295.8L238.8 306.5L230.1 310.0L232.9 319.4L229.7 331.1L226.0 344.0L229.7 349.2L238.3 349.2L244.2 347.5L251.1 339.9L249.7 348.7L242.0 351.0L237.0 353.3L238.8 365.5L246.5 363.8L253.8 360.3L258.8 366.1L257.9 380.6L254.3 392.2L257.9 406.6L257.9 420.9L254.3 435.2L249.3 445.5" fill="none" stroke="#0eb8ee" stroke-width="68" stroke-linejoin="round" stroke-linecap="round"/><path d="M249.3 445.5L251.5 446.6L263.8 441.5L270.2 439.8L282.9 442.1L294.3 446.6L300.2 448.9L310.2 440.9L321.2 436.9L335.3 434.7L342.1 436.9L347.6 440.9L360.3 447.2L369.0 458.0L366.2 462.0L371.7 469.4L376.2 473.3L371.7 473.3L375.3 480.7L380.8 487.5L384.0 493.1" fill="none" stroke="#0eb8ee" stroke-width="62" stroke-linejoin="round" stroke-linecap="round"/><path d="M226.0 456.0C225.0 462.0 235.5 473.5 245.0 481.0C254.5 488.5 276.7 492.3 283.0 501.0C289.3 509.7 280.3 524.0 283.0 533.0C285.7 542.0 291.8 548.8 299.0 555.0C306.2 561.2 319.5 563.5 326.0 570.0C332.5 576.5 330.5 590.0 338.0 594.0C345.5 598.0 363.8 608.0 371.0 594.0C378.2 580.0 387.7 532.3 381.0 510.0C374.3 487.7 352.7 470.8 331.0 460.0C309.3 449.2 268.5 445.7 251.0 445.0C233.5 444.3 227.0 450.0 226.0 456.0Z" fill="#0eb8ee"/><path d="M415.0 490.0C420.0 481.7 433.3 474.7 451.0 470.0C468.7 465.3 501.0 466.0 521.0 462.0C541.0 458.0 557.3 450.0 571.0 446.0C584.7 442.0 596.3 437.3 603.0 438.0C609.7 438.7 614.7 443.0 611.0 450.0C607.3 457.0 586.7 471.3 581.0 480.0C575.3 488.7 573.2 496.0 577.0 502.0C580.8 508.0 603.3 508.8 604.0 516.0C604.7 523.2 593.2 539.0 581.0 545.0C568.8 551.0 551.0 552.0 531.0 552.0C511.0 552.0 479.3 550.3 461.0 545.0C442.7 539.7 428.7 529.2 421.0 520.0C413.3 510.8 410.0 498.3 415.0 490.0Z" fill="#0eb8ee"/><path d="M666.0 230.0C676.8 215.0 697.0 206.7 711.0 200.0C725.0 193.3 743.5 171.7 750.0 190.0C756.5 208.3 754.8 281.7 750.0 310.0C745.2 338.3 732.5 356.7 721.0 360.0C709.5 363.3 693.5 341.7 681.0 330.0C668.5 318.3 648.5 306.7 646.0 290.0C643.5 273.3 655.2 245.0 666.0 230.0Z" fill="#0eb8ee"/><path d="M631.0 285.0L761.0 285.0L761.0 358.0L696.0 380.0L636.0 398.0Z" fill="#0eb8ee"/><path d="M499.0 -15.0C482.0 -8.3 499.7 14.5 505.0 25.0C510.3 35.5 518.3 41.2 531.0 48.0C543.7 54.8 568.3 69.0 581.0 66.0C593.7 63.0 602.7 43.5 607.0 30.0C611.3 16.5 625.0 -7.5 607.0 -15.0C589.0 -22.5 516.0 -21.7 499.0 -15.0Z" fill="#0eb8ee"/><path d="M608.3 -30.3L603.8 -11.1L599.2 14.4L594.7 36.5L592.4 49.1L588.8 56.7L586.9 59.8L582.4 65.4L577.4 66.7L568.3 69.8L558.3 71.1L544.6 66.7L533.2 61.7L524.1 62.9L521.0 68.6L511.9 65.4L501.4 61.1L495.0 57.9L486.4 59.8L474.1 62.3L458.2 65.4L442.2 63.6L428.1 60.4L412.6 55.4L400.8 55.4L392.2 48.5L380.8 54.1L361.2 55.4L338.0 55.4L323.4 47.2L312.5 44.1L308.9 40.3L300.2 41.6L292.0 45.3L280.2 54.8L282.9 60.4L285.2 64.8L276.1 66.1L262.5 71.1L256.1 69.2L246.5 77.3L239.2 79.8L235.1 86.7L236.5 97.2L242.9 102.2L246.5 104.1L251.1 103.5L246.5 111.5L244.7 116.5L251.1 119.5L257.9 114.6L254.7 123.9L260.2 126.9L254.7 131.3L254.7 136.2L262.5 136.2L255.6 144.2L253.4 148.5L254.3 159.5L256.1 170.5L258.8 188.1L263.4 203.2L264.7 215.3L260.2 233.9L255.6 251.3L252.9 261.4L254.7 265.0L249.7 284.0L245.6 295.8L238.8 306.5L230.1 310.0L232.9 319.4L229.7 331.1L226.0 344.0L229.7 349.2L238.3 349.2L244.2 347.5L251.1 339.9L249.7 348.7L242.0 351.0L237.0 353.3L238.8 365.5L246.5 363.8L253.8 360.3L258.8 366.1L257.9 380.6L254.3 392.2L257.9 406.6L257.9 420.9L254.3 435.2L249.3 445.5L251.5 446.6L263.8 441.5L270.2 439.8L282.9 442.1L294.3 446.6L300.2 448.9L310.2 440.9L321.2 436.9L335.3 434.7L342.1 436.9L347.6 440.9L360.3 447.2L369.0 458.0L366.2 462.0L371.7 469.4L376.2 473.3L371.7 473.3L375.3 480.7L380.8 487.5L384.0 493.1L389.0 493.1L395.8 498.8L403.1 502.7L411.3 499.3L411.3 493.1L414.9 496.5L417.2 489.2L424.0 479.6L436.3 474.5L447.7 472.8L453.6 468.2L457.2 462.6L471.8 462.6L482.3 461.4L498.2 462.6L521.0 460.9L535.5 464.8L546.4 456.3L558.7 462.6L567.4 455.2L572.4 446.6L576.5 435.2L586.5 423.8L601.5 414.0L613.8 413.5L627.0 410.6L623.8 399.7L627.5 390.4L630.2 383.5L635.2 377.7L636.6 369.6L642.5 364.4L652.5 358.6L660.7 352.1L668.9 346.9L667.5 342.8L663.4 339.9L651.6 331.1L648.4 320.6L643.8 304.7L648.8 292.9L655.2 281.0L659.3 273.3L665.2 266.2L677.1 250.7L680.2 244.1L685.7 235.1L691.2 237.5L698.0 229.1L692.5 224.3L694.8 219.5L706.2 208.7L715.3 205.6L728.0 201.4L740.3 198.4L751.7 195.4L757.6 189.3L776.7 175.9L776.7 -30.3ZM344.4 619.9L358.9 600.1L372.1 565.8L378.5 548.6L384.0 533.0L389.0 515.1L394.4 515.6L405.8 511.7L414.9 507.8L416.7 509.4L417.2 520.1L418.1 524.6L426.7 534.1L435.4 541.3L446.3 547.5L460.4 550.8L479.5 545.3L490.9 543.6L505.9 548.0L517.3 543.6L523.7 534.7L524.6 543.0L533.2 552.5L548.3 551.4L556.9 554.2L573.7 553.6L585.6 549.2L595.6 542.5L604.2 526.8L617.4 519.0L629.3 520.1L637.9 511.7L645.2 508.9L653.8 514.5L662.5 507.2L668.4 496.5L685.7 489.2L701.6 479.6L718.0 474.5L740.3 471.6L758.1 468.8L781.3 466.5L781.3 619.9ZM713.0 332.3L717.6 328.2L723.0 324.7L731.2 326.4L732.6 329.9L726.7 335.8L723.0 339.9L717.6 339.3L713.9 337.0ZM721.2 347.5L724.4 346.3L730.3 349.8L727.6 351.6L723.0 349.8Z" fill="none" stroke="#2ecaf0" stroke-width="24" stroke-linejoin="round"/><path d="M577.4 66.7L568.3 69.8L558.3 71.1L544.6 66.7L533.2 61.7L524.1 62.9L521.0 68.6L511.9 65.4L501.4 61.1L495.0 57.9L486.4 59.8L474.1 62.3L458.2 65.4L442.2 63.6L428.1 60.4L412.6 55.4L400.8 55.4L392.2 48.5L380.8 54.1L361.2 55.4L338.0 55.4L323.4 47.2L312.5 44.1L308.9 40.3L300.2 41.6L292.0 45.3L280.2 54.8L282.9 60.4L285.2 64.8L276.1 66.1L262.5 71.1L256.1 69.2L246.5 77.3L239.2 79.8L235.1 86.7L236.5 97.2L242.9 102.2L246.5 104.1L251.1 103.5L246.5 111.5L244.7 116.5L251.1 119.5L257.9 114.6L254.7 123.9L260.2 126.9L254.7 131.3L254.7 136.2L262.5 136.2L255.6 144.2L253.4 148.5L254.3 159.5L256.1 170.5L258.8 188.1L263.4 203.2L264.7 215.3L260.2 233.9L255.6 251.3L252.9 261.4L254.7 265.0L249.7 284.0L245.6 295.8L238.8 306.5L230.1 310.0L232.9 319.4L229.7 331.1L226.0 344.0L229.7 349.2L238.3 349.2L244.2 347.5L251.1 339.9L249.7 348.7L242.0 351.0L237.0 353.3L238.8 365.5L246.5 363.8L253.8 360.3L258.8 366.1L257.9 380.6L254.3 392.2L257.9 406.6L257.9 420.9L254.3 435.2L249.3 445.5" fill="none" stroke="#2ecaf0" stroke-width="58" stroke-linejoin="round" stroke-linecap="round"/><path d="M249.3 445.5L251.5 446.6L263.8 441.5L270.2 439.8L282.9 442.1L294.3 446.6L300.2 448.9L310.2 440.9L321.2 436.9L335.3 434.7L342.1 436.9L347.6 440.9L360.3 447.2L369.0 458.0L366.2 462.0L371.7 469.4L376.2 473.3L371.7 473.3L375.3 480.7L380.8 487.5L384.0 493.1" fill="none" stroke="#2ecaf0" stroke-width="52" stroke-linejoin="round" stroke-linecap="round"/><path d="M267.0 470.0C272.3 475.5 291.2 481.3 303.0 483.0C314.8 484.7 329.5 477.3 338.0 480.0C346.5 482.7 350.0 493.2 354.0 499.0C358.0 504.8 362.7 507.7 362.0 515.0C361.3 522.3 353.3 529.8 350.0 543.0C346.7 556.2 338.5 585.5 342.0 594.0C345.5 602.5 364.5 608.0 371.0 594.0C377.5 580.0 384.3 531.5 381.0 510.0C377.7 488.5 369.3 475.0 351.0 465.0C332.7 455.0 285.0 449.2 271.0 450.0C257.0 450.8 261.7 464.5 267.0 470.0Z" fill="#2ecaf0"/><path d="M656.0 240.0C664.0 227.5 678.5 216.7 691.0 210.0C703.5 203.3 721.2 200.8 731.0 200.0C740.8 199.2 746.8 190.0 750.0 205.0C753.2 220.0 755.7 266.7 750.0 290.0C744.3 313.3 725.8 340.0 716.0 345.0C706.2 350.0 700.2 329.2 691.0 320.0C681.8 310.8 669.0 295.8 661.0 290.0C653.0 284.2 643.8 293.3 643.0 285.0C642.2 276.7 648.0 252.5 656.0 240.0Z" fill="#2ecaf0"/><path d="M514.0 -15.0C499.5 -9.2 512.5 9.8 517.0 20.0C521.5 30.2 530.3 38.5 541.0 46.0C551.7 53.5 570.5 67.7 581.0 65.0C591.5 62.3 600.2 43.3 604.0 30.0C607.8 16.7 619.0 -7.5 604.0 -15.0C589.0 -22.5 528.5 -20.8 514.0 -15.0Z" fill="#2ecaf0"/><path d="M689.0 315.0C694.8 308.3 710.8 302.0 721.0 302.0C731.2 302.0 745.8 305.7 750.0 315.0C754.2 324.3 752.5 349.8 746.0 358.0C739.5 366.2 721.0 366.7 711.0 364.0C701.0 361.3 689.7 350.2 686.0 342.0C682.3 333.8 683.2 321.7 689.0 315.0Z" fill="#2ecaf0"/><path d="M415.0 494.0C419.7 486.3 433.3 478.7 451.0 474.0C468.7 469.3 501.8 469.7 521.0 466.0C540.2 462.3 556.0 452.2 566.0 452.0C576.0 451.8 581.0 458.7 581.0 465.0C581.0 471.3 568.0 482.2 566.0 490.0C564.0 497.8 566.5 503.7 569.0 512.0C571.5 520.3 587.3 533.7 581.0 540.0C574.7 546.3 551.0 549.7 531.0 550.0C511.0 550.3 479.0 547.0 461.0 542.0C443.0 537.0 430.7 528.0 423.0 520.0C415.3 512.0 410.3 501.7 415.0 494.0Z" fill="#2ecaf0"/><path d="M531.0 530.0C534.3 523.8 551.0 517.0 561.0 515.0C571.0 513.0 584.3 515.5 591.0 518.0C597.7 520.5 604.3 524.7 601.0 530.0C597.7 535.3 581.0 546.3 571.0 550.0C561.0 553.7 547.7 555.3 541.0 552.0C534.3 548.7 527.7 536.2 531.0 530.0Z" fill="#2ecaf0"/><path d="M608.3 -30.3L603.8 -11.1L599.2 14.4L594.7 36.5L592.4 49.1L588.8 56.7L586.9 59.8L582.4 65.4L577.4 66.7L568.3 69.8L558.3 71.1L544.6 66.7L533.2 61.7L524.1 62.9L521.0 68.6L511.9 65.4L501.4 61.1L495.0 57.9L486.4 59.8L474.1 62.3L458.2 65.4L442.2 63.6L428.1 60.4L412.6 55.4L400.8 55.4L392.2 48.5L380.8 54.1L361.2 55.4L338.0 55.4L323.4 47.2L312.5 44.1L308.9 40.3L300.2 41.6L292.0 45.3L280.2 54.8L282.9 60.4L285.2 64.8L276.1 66.1L262.5 71.1L256.1 69.2L246.5 77.3L239.2 79.8L235.1 86.7L236.5 97.2L242.9 102.2L246.5 104.1L251.1 103.5L246.5 111.5L244.7 116.5L251.1 119.5L257.9 114.6L254.7 123.9L260.2 126.9L254.7 131.3L254.7 136.2L262.5 136.2L255.6 144.2L253.4 148.5L254.3 159.5L256.1 170.5L258.8 188.1L263.4 203.2L264.7 215.3L260.2 233.9L255.6 251.3L252.9 261.4L254.7 265.0L249.7 284.0L245.6 295.8L238.8 306.5L230.1 310.0L232.9 319.4L229.7 331.1L226.0 344.0L229.7 349.2L238.3 349.2L244.2 347.5L251.1 339.9L249.7 348.7L242.0 351.0L237.0 353.3L238.8 365.5L246.5 363.8L253.8 360.3L258.8 366.1L257.9 380.6L254.3 392.2L257.9 406.6L257.9 420.9L254.3 435.2L249.3 445.5L251.5 446.6L263.8 441.5L270.2 439.8L282.9 442.1L294.3 446.6L300.2 448.9L310.2 440.9L321.2 436.9L335.3 434.7L342.1 436.9L347.6 440.9L360.3 447.2L369.0 458.0L366.2 462.0L371.7 469.4L376.2 473.3L371.7 473.3L375.3 480.7L380.8 487.5L384.0 493.1L389.0 493.1L395.8 498.8L403.1 502.7L411.3 499.3L411.3 493.1L414.9 496.5L417.2 489.2L424.0 479.6L436.3 474.5L447.7 472.8L453.6 468.2L457.2 462.6L471.8 462.6L482.3 461.4L498.2 462.6L521.0 460.9L535.5 464.8L546.4 456.3L558.7 462.6L567.4 455.2L572.4 446.6L576.5 435.2L586.5 423.8L601.5 414.0L613.8 413.5L627.0 410.6L623.8 399.7L627.5 390.4L630.2 383.5L635.2 377.7L636.6 369.6L642.5 364.4L652.5 358.6L660.7 352.1L668.9 346.9L667.5 342.8L663.4 339.9L651.6 331.1L648.4 320.6L643.8 304.7L648.8 292.9L655.2 281.0L659.3 273.3L665.2 266.2L677.1 250.7L680.2 244.1L685.7 235.1L691.2 237.5L698.0 229.1L692.5 224.3L694.8 219.5L706.2 208.7L715.3 205.6L728.0 201.4L740.3 198.4L751.7 195.4L757.6 189.3L776.7 175.9L776.7 -30.3ZM344.4 619.9L358.9 600.1L372.1 565.8L378.5 548.6L384.0 533.0L389.0 515.1L394.4 515.6L405.8 511.7L414.9 507.8L416.7 509.4L417.2 520.1L418.1 524.6L426.7 534.1L435.4 541.3L446.3 547.5L460.4 550.8L479.5 545.3L490.9 543.6L505.9 548.0L517.3 543.6L523.7 534.7L524.6 543.0L533.2 552.5L548.3 551.4L556.9 554.2L573.7 553.6L585.6 549.2L595.6 542.5L604.2 526.8L617.4 519.0L629.3 520.1L637.9 511.7L645.2 508.9L653.8 514.5L662.5 507.2L668.4 496.5L685.7 489.2L701.6 479.6L718.0 474.5L740.3 471.6L758.1 468.8L781.3 466.5L781.3 619.9ZM713.0 332.3L717.6 328.2L723.0 324.7L731.2 326.4L732.6 329.9L726.7 335.8L723.0 339.9L717.6 339.3L713.9 337.0ZM721.2 347.5L724.4 346.3L730.3 349.8L727.6 351.6L723.0 349.8Z" fill="none" stroke="#7cdaf2" stroke-width="15" stroke-linejoin="round"/><path d="M577.4 66.7L568.3 69.8L558.3 71.1L544.6 66.7L533.2 61.7L524.1 62.9L521.0 68.6L511.9 65.4L501.4 61.1L495.0 57.9L486.4 59.8L474.1 62.3L458.2 65.4L442.2 63.6L428.1 60.4L412.6 55.4L400.8 55.4L392.2 48.5L380.8 54.1L361.2 55.4L338.0 55.4L323.4 47.2L312.5 44.1L308.9 40.3L300.2 41.6L292.0 45.3L280.2 54.8L282.9 60.4L285.2 64.8L276.1 66.1L262.5 71.1L256.1 69.2L246.5 77.3L239.2 79.8L235.1 86.7L236.5 97.2L242.9 102.2L246.5 104.1L251.1 103.5L246.5 111.5L244.7 116.5L251.1 119.5L257.9 114.6L254.7 123.9L260.2 126.9L254.7 131.3L254.7 136.2L262.5 136.2L255.6 144.2L253.4 148.5L254.3 159.5L256.1 170.5L258.8 188.1L263.4 203.2L264.7 215.3L260.2 233.9L255.6 251.3L252.9 261.4L254.7 265.0L249.7 284.0L245.6 295.8L238.8 306.5L230.1 310.0L232.9 319.4L229.7 331.1L226.0 344.0L229.7 349.2L238.3 349.2L244.2 347.5L251.1 339.9L249.7 348.7L242.0 351.0L237.0 353.3L238.8 365.5L246.5 363.8L253.8 360.3L258.8 366.1L257.9 380.6L254.3 392.2L257.9 406.6L257.9 420.9L254.3 435.2L249.3 445.5" fill="none" stroke="#7cdaf2" stroke-width="46" stroke-linejoin="round" stroke-linecap="round"/><path d="M249.3 445.5L251.5 446.6L263.8 441.5L270.2 439.8L282.9 442.1L294.3 446.6L300.2 448.9L310.2 440.9L321.2 436.9L335.3 434.7L342.1 436.9L347.6 440.9L360.3 447.2L369.0 458.0L366.2 462.0L371.7 469.4L376.2 473.3L371.7 473.3L375.3 480.7L380.8 487.5L384.0 493.1" fill="none" stroke="#7cdaf2" stroke-width="40" stroke-linejoin="round" stroke-linecap="round"/><path d="M656.0 250.0C661.8 240.0 671.0 230.8 681.0 225.0C691.0 219.2 706.0 215.5 716.0 215.0C726.0 214.5 738.5 216.2 741.0 222.0C743.5 227.8 739.3 240.3 731.0 250.0C722.7 259.7 701.8 273.3 691.0 280.0C680.2 286.7 673.5 289.2 666.0 290.0C658.5 290.8 647.7 291.7 646.0 285.0C644.3 278.3 650.2 260.0 656.0 250.0Z" fill="#7cdaf2"/><path d="M562.0 -15.0C555.8 -8.3 562.7 14.2 565.0 25.0C567.3 35.8 572.0 43.8 576.0 50.0C580.0 56.2 584.7 65.3 589.0 62.0C593.3 58.7 599.8 42.8 602.0 30.0C604.2 17.2 608.7 -7.5 602.0 -15.0C595.3 -22.5 568.2 -21.7 562.0 -15.0Z" fill="#7cdaf2"/><path d="M331.0 465.0C333.5 470.0 349.3 470.8 356.0 475.0C362.7 479.2 366.8 485.0 371.0 490.0C375.2 495.0 378.5 505.0 381.0 505.0C383.5 505.0 387.7 497.5 386.0 490.0C384.3 482.5 378.5 467.5 371.0 460.0C363.5 452.5 347.7 444.2 341.0 445.0C334.3 445.8 328.5 460.0 331.0 465.0Z" fill="#7cdaf2"/><path d="M189.0 330.0C188.3 321.3 194.5 313.7 201.0 310.0C207.5 306.3 222.7 303.0 228.0 308.0C233.3 313.0 233.2 330.0 233.0 340.0C232.8 350.0 231.7 364.3 227.0 368.0C222.3 371.7 211.3 368.3 205.0 362.0C198.7 355.7 189.7 338.7 189.0 330.0Z" fill="#0eb8ee" filter="url(#b2)"/><path d="M443.0 502.0C444.7 497.3 448.0 493.8 456.0 492.0C464.0 490.2 483.3 488.8 491.0 491.0C498.7 493.2 501.7 499.8 502.0 505.0C502.3 510.2 499.0 517.8 493.0 522.0C487.0 526.2 473.8 530.3 466.0 530.0C458.2 529.7 449.8 524.7 446.0 520.0C442.2 515.3 441.3 506.7 443.0 502.0Z" fill="#0cb2e4" filter="url(#b2)"/><path d="M599.0 453.0C607.3 440.7 619.0 430.5 631.0 420.0C643.0 409.5 657.7 396.7 671.0 390.0C684.3 383.3 696.0 385.0 711.0 380.0C726.0 375.0 752.7 348.3 761.0 360.0C769.3 371.7 767.7 433.7 761.0 450.0C754.3 466.3 734.3 454.2 721.0 458.0C707.7 461.8 693.5 466.3 681.0 473.0C668.5 479.7 657.7 492.2 646.0 498.0C634.3 503.8 621.8 508.7 611.0 508.0C600.2 507.3 583.0 503.2 581.0 494.0C579.0 484.8 590.7 465.3 599.0 453.0Z" fill="#31a4e8" filter="url(#b2)"/></g><g filter="url(#reliefL)"><path d="M608.3 -30.3L603.8 -11.1L599.2 14.4L594.7 36.5L592.4 49.1L588.8 56.7L586.9 59.8L582.4 65.4L577.4 66.7L568.3 69.8L558.3 71.1L544.6 66.7L533.2 61.7L524.1 62.9L521.0 68.6L511.9 65.4L501.4 61.1L495.0 57.9L486.4 59.8L474.1 62.3L458.2 65.4L442.2 63.6L428.1 60.4L412.6 55.4L400.8 55.4L392.2 48.5L380.8 54.1L361.2 55.4L338.0 55.4L323.4 47.2L312.5 44.1L308.9 40.3L300.2 41.6L292.0 45.3L280.2 54.8L282.9 60.4L285.2 64.8L276.1 66.1L262.5 71.1L256.1 69.2L246.5 77.3L239.2 79.8L235.1 86.7L236.5 97.2L242.9 102.2L246.5 104.1L251.1 103.5L246.5 111.5L244.7 116.5L251.1 119.5L257.9 114.6L254.7 123.9L260.2 126.9L254.7 131.3L254.7 136.2L262.5 136.2L255.6 144.2L253.4 148.5L254.3 159.5L256.1 170.5L258.8 188.1L263.4 203.2L264.7 215.3L260.2 233.9L255.6 251.3L252.9 261.4L254.7 265.0L249.7 284.0L245.6 295.8L238.8 306.5L230.1 310.0L232.9 319.4L229.7 331.1L226.0 344.0L229.7 349.2L238.3 349.2L244.2 347.5L251.1 339.9L249.7 348.7L242.0 351.0L237.0 353.3L238.8 365.5L246.5 363.8L253.8 360.3L258.8 366.1L257.9 380.6L254.3 392.2L257.9 406.6L257.9 420.9L254.3 435.2L249.3 445.5L251.5 446.6L263.8 441.5L270.2 439.8L282.9 442.1L294.3 446.6L300.2 448.9L310.2 440.9L321.2 436.9L335.3 434.7L342.1 436.9L347.6 440.9L360.3 447.2L369.0 458.0L366.2 462.0L371.7 469.4L376.2 473.3L371.7 473.3L375.3 480.7L380.8 487.5L384.0 493.1L389.0 493.1L395.8 498.8L403.1 502.7L411.3 499.3L411.3 493.1L414.9 496.5L417.2 489.2L424.0 479.6L436.3 474.5L447.7 472.8L453.6 468.2L457.2 462.6L471.8 462.6L482.3 461.4L498.2 462.6L521.0 460.9L535.5 464.8L546.4 456.3L558.7 462.6L567.4 455.2L572.4 446.6L576.5 435.2L586.5 423.8L601.5 414.0L613.8 413.5L627.0 410.6L623.8 399.7L627.5 390.4L630.2 383.5L635.2 377.7L636.6 369.6L642.5 364.4L652.5 358.6L660.7 352.1L668.9 346.9L667.5 342.8L663.4 339.9L651.6 331.1L648.4 320.6L643.8 304.7L648.8 292.9L655.2 281.0L659.3 273.3L665.2 266.2L677.1 250.7L680.2 244.1L685.7 235.1L691.2 237.5L698.0 229.1L692.5 224.3L694.8 219.5L706.2 208.7L715.3 205.6L728.0 201.4L740.3 198.4L751.7 195.4L757.6 189.3L776.7 175.9L776.7 -30.3ZM344.4 619.9L358.9 600.1L372.1 565.8L378.5 548.6L384.0 533.0L389.0 515.1L394.4 515.6L405.8 511.7L414.9 507.8L416.7 509.4L417.2 520.1L418.1 524.6L426.7 534.1L435.4 541.3L446.3 547.5L460.4 550.8L479.5 545.3L490.9 543.6L505.9 548.0L517.3 543.6L523.7 534.7L524.6 543.0L533.2 552.5L548.3 551.4L556.9 554.2L573.7 553.6L585.6 549.2L595.6 542.5L604.2 526.8L617.4 519.0L629.3 520.1L637.9 511.7L645.2 508.9L653.8 514.5L662.5 507.2L668.4 496.5L685.7 489.2L701.6 479.6L718.0 474.5L740.3 471.6L758.1 468.8L781.3 466.5L781.3 619.9ZM713.0 332.3L717.6 328.2L723.0 324.7L731.2 326.4L732.6 329.9L726.7 335.8L723.0 339.9L717.6 339.3L713.9 337.0ZM721.2 347.5L724.4 346.3L730.3 349.8L727.6 351.6L723.0 349.8Z" fill="#e7e7e7"/></g><mask id="mm" maskUnits="userSpaceOnUse" x="0" y="0" width="750" height="594"><g filter="url(#b8)" fill="none" stroke="#fff" stroke-linecap="round" stroke-linejoin="round"><path d="M571.9 83.6L635.6 102.2L690.3 113.4L740.3 123.9L776.7 126.9" stroke-width="26" opacity="1"/><path d="M330.7 99.1L385.3 89.8L430.8 80.4L476.4 83.6L521.9 83.6L567.4 89.8" stroke-width="24" opacity="1"/><path d="M285.2 133.1L326.2 133.1L348.9 139.2L362.6 114.6" stroke-width="30" opacity="0.66"/><path d="M294.3 169.8L308.0 200.2L312.5 248.3" stroke-width="20" opacity="0.55"/><path d="M512.8 139.2L544.6 157.6L576.5 194.2L603.8 242.3L631.1 260.2" stroke-width="22" opacity="0.77"/><path d="M317.1 254.3L385.3 254.3L421.7 254.3L476.4 224.3L508.2 203.2" stroke-width="16" opacity="0.77"/><path d="M348.9 389.3L408.1 386.4L476.4 369.0L531.0 360.3" stroke-width="14" opacity="0.55"/><path d="M412.6 469.4L453.6 449.5L508.2 443.8L544.6 429.5L576.5 400.8L622.0 354.5" stroke-width="24" opacity="0.9900000000000001"/><path d="M512.8 395.0L540.1 383.5L567.4 366.1" stroke-width="18" opacity="0.77"/><path d="M403.5 531.3L421.7 553.6L449.0 564.7L485.5 561.9L512.8 567.5" stroke-width="28" opacity="0.924"/><path d="M553.7 575.8L612.9 567.5L658.4 536.9L703.9 508.9L763.1 486.4" stroke-width="20" opacity="0.66"/><path d="M635.6 581.3L703.9 559.2L763.1 536.9" stroke-width="20" opacity="0.44000000000000006"/><path d="M744.9 14.4L772.2 52.3" stroke-width="30" opacity="0.66"/><path d="M681.2 200.2L713.0 182.0L749.4 157.6" stroke-width="16" opacity="0.55"/></g></mask><g mask="url(#mm)"><g filter="url(#reliefM)"><path d="M608.3 -30.3L603.8 -11.1L599.2 14.4L594.7 36.5L592.4 49.1L588.8 56.7L586.9 59.8L582.4 65.4L577.4 66.7L568.3 69.8L558.3 71.1L544.6 66.7L533.2 61.7L524.1 62.9L521.0 68.6L511.9 65.4L501.4 61.1L495.0 57.9L486.4 59.8L474.1 62.3L458.2 65.4L442.2 63.6L428.1 60.4L412.6 55.4L400.8 55.4L392.2 48.5L380.8 54.1L361.2 55.4L338.0 55.4L323.4 47.2L312.5 44.1L308.9 40.3L300.2 41.6L292.0 45.3L280.2 54.8L282.9 60.4L285.2 64.8L276.1 66.1L262.5 71.1L256.1 69.2L246.5 77.3L239.2 79.8L235.1 86.7L236.5 97.2L242.9 102.2L246.5 104.1L251.1 103.5L246.5 111.5L244.7 116.5L251.1 119.5L257.9 114.6L254.7 123.9L260.2 126.9L254.7 131.3L254.7 136.2L262.5 136.2L255.6 144.2L253.4 148.5L254.3 159.5L256.1 170.5L258.8 188.1L263.4 203.2L264.7 215.3L260.2 233.9L255.6 251.3L252.9 261.4L254.7 265.0L249.7 284.0L245.6 295.8L238.8 306.5L230.1 310.0L232.9 319.4L229.7 331.1L226.0 344.0L229.7 349.2L238.3 349.2L244.2 347.5L251.1 339.9L249.7 348.7L242.0 351.0L237.0 353.3L238.8 365.5L246.5 363.8L253.8 360.3L258.8 366.1L257.9 380.6L254.3 392.2L257.9 406.6L257.9 420.9L254.3 435.2L249.3 445.5L251.5 446.6L263.8 441.5L270.2 439.8L282.9 442.1L294.3 446.6L300.2 448.9L310.2 440.9L321.2 436.9L335.3 434.7L342.1 436.9L347.6 440.9L360.3 447.2L369.0 458.0L366.2 462.0L371.7 469.4L376.2 473.3L371.7 473.3L375.3 480.7L380.8 487.5L384.0 493.1L389.0 493.1L395.8 498.8L403.1 502.7L411.3 499.3L411.3 493.1L414.9 496.5L417.2 489.2L424.0 479.6L436.3 474.5L447.7 472.8L453.6 468.2L457.2 462.6L471.8 462.6L482.3 461.4L498.2 462.6L521.0 460.9L535.5 464.8L546.4 456.3L558.7 462.6L567.4 455.2L572.4 446.6L576.5 435.2L586.5 423.8L601.5 414.0L613.8 413.5L627.0 410.6L623.8 399.7L627.5 390.4L630.2 383.5L635.2 377.7L636.6 369.6L642.5 364.4L652.5 358.6L660.7 352.1L668.9 346.9L667.5 342.8L663.4 339.9L651.6 331.1L648.4 320.6L643.8 304.7L648.8 292.9L655.2 281.0L659.3 273.3L665.2 266.2L677.1 250.7L680.2 244.1L685.7 235.1L691.2 237.5L698.0 229.1L692.5 224.3L694.8 219.5L706.2 208.7L715.3 205.6L728.0 201.4L740.3 198.4L751.7 195.4L757.6 189.3L776.7 175.9L776.7 -30.3ZM344.4 619.9L358.9 600.1L372.1 565.8L378.5 548.6L384.0 533.0L389.0 515.1L394.4 515.6L405.8 511.7L414.9 507.8L416.7 509.4L417.2 520.1L418.1 524.6L426.7 534.1L435.4 541.3L446.3 547.5L460.4 550.8L479.5 545.3L490.9 543.6L505.9 548.0L517.3 543.6L523.7 534.7L524.6 543.0L533.2 552.5L548.3 551.4L556.9 554.2L573.7 553.6L585.6 549.2L595.6 542.5L604.2 526.8L617.4 519.0L629.3 520.1L637.9 511.7L645.2 508.9L653.8 514.5L662.5 507.2L668.4 496.5L685.7 489.2L701.6 479.6L718.0 474.5L740.3 471.6L758.1 468.8L781.3 466.5L781.3 619.9ZM713.0 332.3L717.6 328.2L723.0 324.7L731.2 326.4L732.6 329.9L726.7 335.8L723.0 339.9L717.6 339.3L713.9 337.0ZM721.2 347.5L724.4 346.3L730.3 349.8L727.6 351.6L723.0 349.8Z" fill="#cdcdcd"/></g></g><g clip-path="url(#landclip)" fill="none" stroke="#8c8c8c" stroke-width="2.2" stroke-linejoin="round"><path d="M254.7 159.5L260.2 154.6L285.2 147.2L290.7 150.3L285.7 159.5L292.0 162.5L312.5 160.7L330.7 158.9L342.1 154.6L358.9 154.6L360.3 171.1L376.2 177.8L364.9 194.2L353.9 200.2L343.0 211.1L348.9 221.3L348.9 251.3L338.9 260.2L345.7 270.9L338.5 291.7L315.7 291.7L326.2 303.5L337.5 324.1L341.6 329.9L333.0 342.8L326.2 360.3L335.3 377.7L342.6 377.1L327.5 390.4L316.6 415.2L321.2 436.9"/><path d="M577.4 66.7L584.7 72.3L594.7 72.9L597.0 86.7L624.3 92.9L633.4 103.5L656.1 109.0L688.9 108.4L690.3 99.1L724.4 114.6L737.1 120.8L749.4 130.0L776.7 126.9"/><path d="M557.8 554.2L569.7 567.5L577.4 573.0L578.8 586.9L581.0 614.4"/></g><g clip-path="url(#landclip)" fill="none" stroke="#858585" stroke-width="1.3" stroke-linejoin="round"><path d="M618.0 104.0C616.2 105.7 610.8 110.0 607.0 114.0C603.2 118.0 597.3 121.3 595.0 128.0C592.7 134.7 596.3 149.5 593.0 154.0C589.7 158.5 578.3 150.7 575.0 155.0C571.7 159.3 575.5 174.0 573.0 180.0C570.5 186.0 561.8 186.7 560.0 191.0C558.2 195.3 558.2 201.7 562.0 206.0C565.8 210.3 579.2 209.8 583.0 217.0C586.8 224.2 583.0 240.3 585.0 249.0C587.0 257.7 589.8 264.7 595.0 269.0C600.2 273.3 611.2 272.3 616.0 275.0C620.8 277.7 622.7 283.3 624.0 285.0"/><path d="M690.0 105.0C690.0 107.8 690.5 113.5 690.0 122.0C689.5 130.5 689.3 146.8 687.0 156.0C684.7 165.2 678.3 171.2 676.0 177.0C673.7 182.8 673.0 186.2 673.0 191.0C673.0 195.8 677.0 200.2 676.0 206.0C675.0 211.8 667.0 220.8 667.0 226.0C667.0 231.2 672.0 235.8 676.0 237.0C680.0 238.2 688.5 233.7 691.0 233.0"/><path d="M667.0 226.0C663.0 227.2 646.7 230.2 643.0 233.0C639.3 235.8 646.2 239.8 645.0 243.0C643.8 246.2 639.5 245.0 636.0 252.0C632.5 259.0 626.0 279.5 624.0 285.0"/><path d="M560.0 122.0C562.8 124.8 571.7 133.3 577.0 139.0C582.3 144.7 589.5 153.2 592.0 156.0"/><path d="M465.0 85.0C468.0 85.8 477.8 87.2 483.0 90.0C488.2 92.8 490.8 99.2 496.0 102.0C501.2 104.8 506.7 106.2 514.0 107.0C521.3 107.8 534.7 105.7 540.0 107.0C545.3 108.3 542.2 112.0 546.0 115.0C549.8 118.0 560.7 123.8 563.0 125.0C565.3 126.2 558.7 124.2 560.0 122.0C561.3 119.8 567.7 114.2 571.0 112.0C574.3 109.8 578.0 111.8 580.0 109.0C582.0 106.2 582.5 97.3 583.0 95.0"/><path d="M514.0 107.0C512.7 108.8 505.7 114.2 506.0 118.0C506.3 121.8 511.8 128.7 516.0 130.0C520.2 131.3 526.8 125.2 531.0 126.0C535.2 126.8 536.2 132.7 541.0 135.0C545.8 137.3 554.7 137.2 560.0 140.0C565.3 142.8 570.8 150.0 573.0 152.0"/><path d="M469.0 202.0C471.0 201.0 475.7 197.2 481.0 196.0C486.3 194.8 493.5 194.8 501.0 195.0C508.5 195.2 520.0 195.2 526.0 197.0C532.0 198.8 536.2 202.2 537.0 206.0C537.8 209.8 533.7 215.2 531.0 220.0C528.3 224.8 523.3 229.2 521.0 235.0C518.7 240.8 518.2 249.3 517.0 255.0C515.8 260.7 516.7 265.7 514.0 269.0C511.3 272.3 505.7 274.8 501.0 275.0C496.3 275.2 489.7 272.8 486.0 270.0C482.3 267.2 481.8 259.3 479.0 258.0C476.2 256.7 470.7 261.3 469.0 262.0"/><path d="M469.0 262.0C466.0 261.3 457.3 258.0 451.0 258.0C444.7 258.0 436.0 262.5 431.0 262.0C426.0 261.5 425.7 255.0 421.0 255.0C416.3 255.0 406.0 260.8 403.0 262.0"/><path d="M514.0 269.0C516.8 270.8 524.8 277.3 531.0 280.0C537.2 282.7 544.7 285.3 551.0 285.0C557.3 284.7 563.3 284.0 569.0 278.0C574.7 272.0 582.3 253.8 585.0 249.0"/><path d="M403.0 262.0C404.3 265.3 406.3 277.3 411.0 282.0C415.7 286.7 426.7 285.3 431.0 290.0C435.3 294.7 438.7 304.0 437.0 310.0C435.3 316.0 422.0 320.7 421.0 326.0C420.0 331.3 431.0 336.3 431.0 342.0C431.0 347.7 425.7 355.7 421.0 360.0C416.3 364.3 408.0 364.7 403.0 368.0C398.0 371.3 396.3 377.3 391.0 380.0C385.7 382.7 374.3 383.3 371.0 384.0"/><path d="M431.0 342.0C436.0 343.7 451.0 351.0 461.0 352.0C471.0 353.0 481.0 347.3 491.0 348.0C501.0 348.7 511.0 355.3 521.0 356.0C531.0 356.7 542.7 351.3 551.0 352.0C559.3 352.7 565.7 356.7 571.0 360.0C576.3 363.3 581.3 367.0 583.0 372.0C584.7 377.0 583.3 385.0 581.0 390.0C578.7 395.0 571.0 400.0 569.0 402.0"/><path d="M583.0 372.0C586.0 370.0 596.3 364.5 601.0 360.0C605.7 355.5 610.7 350.0 611.0 345.0C611.3 340.0 603.0 335.0 603.0 330.0C603.0 325.0 610.5 320.3 611.0 315.0C611.5 309.7 603.8 303.0 606.0 298.0C608.2 293.0 621.0 287.2 624.0 285.0"/><path d="M569.0 402.0C571.0 403.3 575.7 409.5 581.0 410.0C586.3 410.5 595.2 404.7 601.0 405.0C606.8 405.3 612.2 412.5 616.0 412.0C619.8 411.5 622.7 403.7 624.0 402.0"/><path d="M569.0 402.0C566.8 404.2 557.7 410.3 556.0 415.0C554.3 419.7 560.7 426.2 559.0 430.0C557.3 433.8 548.2 436.7 546.0 438.0"/><path d="M371.0 384.0C373.5 385.0 380.2 389.7 386.0 390.0C391.8 390.3 400.2 385.2 406.0 386.0C411.8 386.8 418.5 393.5 421.0 395.0"/><path d="M339.0 86.0C340.7 84.7 346.7 82.0 349.0 78.0C351.3 74.0 354.0 66.7 353.0 62.0C352.0 57.3 346.7 53.7 343.0 50.0C339.3 46.3 333.0 41.7 331.0 40.0"/><path d="M353.0 62.0C356.0 63.3 364.7 66.0 371.0 70.0C377.3 74.0 382.7 83.7 391.0 86.0C399.3 88.3 411.8 83.7 421.0 84.0C430.2 84.3 438.7 87.8 446.0 88.0C453.3 88.2 460.0 87.2 465.0 85.0C470.0 82.8 475.0 79.2 476.0 75.0C477.0 70.8 471.8 62.5 471.0 60.0"/><path d="M339.0 86.0C339.7 89.2 339.7 99.0 343.0 105.0C346.3 111.0 354.3 114.2 359.0 122.0C363.7 129.8 369.0 147.0 371.0 152.0"/></g><g fill="#777"><circle cx="404.9" cy="114.6" r="1.6"/><circle cx="490.0" cy="130.6" r="1.6"/><circle cx="452.2" cy="150.9" r="1.6"/><circle cx="443.6" cy="172.9" r="1.6"/><circle cx="618.4" cy="172.9" r="1.6"/><circle cx="686.6" cy="174.7" r="1.6"/><circle cx="715.3" cy="205.0" r="1.6"/><circle cx="475.4" cy="280.4" r="1.6"/><circle cx="573.7" cy="331.7" r="1.6"/><circle cx="607.0" cy="389.9" r="1.6"/><circle cx="546.4" cy="455.7" r="1.6"/><circle cx="629.3" cy="520.1" r="1.6"/><circle cx="524.6" cy="543.0" r="1.6"/><circle cx="416.7" cy="509.4" r="1.6"/><circle cx="485.0" cy="61.1" r="1.6"/><circle cx="392.2" cy="67.3" r="1.6"/><circle cx="583.8" cy="101.0" r="1.6"/><circle cx="546.9" cy="122.6" r="1.6"/><circle cx="723.9" cy="52.3" r="1.6"/><circle cx="656.6" cy="272.7" r="1.6"/><circle cx="641.1" cy="303.5" r="1.6"/><circle cx="636.6" cy="369.0" r="1.6"/><circle cx="479.5" cy="331.7" r="1.6"/><circle cx="485.9" cy="402.5" r="1.6"/><circle cx="494.6" cy="436.4" r="1.6"/><circle cx="400.8" cy="214.1" r="1.6"/><circle cx="525.1" cy="73.6" r="1.6"/><circle cx="314.3" cy="89.2" r="1.6"/><circle cx="490.0" cy="247.1" r="1.6"/><circle cx="457.2" cy="462.6" r="1.6"/><circle cx="440.9" cy="396.2" r="1.6"/></g><g fill="#33205f" text-anchor="middle" stroke="#fff" stroke-opacity="0.8" stroke-width="2" paint-order="stroke" stroke-linejoin="round"><text x="271" y="66" font-size="11.5">A Coruña</text><text x="392" y="66" font-size="11.5">Oviedo</text><text x="484" y="60" font-size="11.5">Santander</text><text x="525" y="72" font-size="11.5">Bilbao</text><text x="723" y="50" font-size="13.5" font-weight="bold">Toulouse</text><text x="582" y="101" font-size="11.5">Pamplona/Iruña</text><text x="544" y="122" font-size="11.5">Logroño</text><text x="405" y="113" font-size="11.5">León</text><text x="489" y="131" font-size="11.5">Burgos</text><text x="451" y="150" font-size="11.5">Palencia</text><text x="442" y="171" font-size="11.5">Valladolid</text><text x="617" y="173" font-size="13.5" font-weight="bold">Zaragoza</text><text x="687" y="173" font-size="11.5">Lleida</text><text x="755" y="188" font-size="13.5" font-weight="bold">Barcelona</text><text x="715" y="205" font-size="11.5">Tarragona</text><text x="315" y="90" font-size="11.5">Lugo</text><text x="303" y="131" font-size="11.5">Ourense</text><text x="275" y="179" font-size="11.5">Braga</text><text x="263" y="202" font-size="13.5" font-weight="bold">Porto</text><text x="400" y="213" font-size="11.5">Salamanca</text><text x="491" y="247" font-size="13.5" font-weight="bold">Madrid</text><text x="279" y="258" font-size="11.5">Coimbra</text><text x="474" y="279" font-size="11.5">Toledo</text><text x="656" y="258" font-size="11.5">Castellón de la</text><text x="655" y="272" font-size="11.5">Plana/Castelló de</text><text x="655" y="285" font-size="11.5">la Plana</text><text x="640" y="302" font-size="13.5" font-weight="bold">València</text><text x="743" y="296" font-size="11.5">Palma</text><text x="478" y="330" font-size="11.5">Ciudad Real</text><text x="572" y="330" font-size="11.5">Albacete</text><text x="339" y="337" font-size="11.5">Badajoz</text><text x="635" y="367" font-size="11.5">Alicante/Alacant</text><text x="606" y="389" font-size="11.5">Murcia</text><text x="441" y="395" font-size="11.5">Córdoba</text><text x="485" y="402" font-size="11.5">Jaén</text><text x="494" y="435" font-size="11.5">Granada</text><text x="545" y="454" font-size="11.5">Almería</text><text x="456" y="463" font-size="13.5" font-weight="bold">Málaga</text><text x="416" y="508" font-size="11.5">Ceuta</text><text x="629" y="519" font-size="11.5">Oran</text><text x="524" y="541" font-size="11.5">Melilla</text><text x="364" y="302" font-size="11.5">Cáceres</text><text x="245" y="337" font-size="13.5" font-weight="bold">Lisboa</text><text x="371" y="420" font-size="13.5" font-weight="bold">Sevilla</text><text x="331" y="430" font-size="11.5">Huelva</text><text x="372" y="473" font-size="11.5">Cádiz</text></g><g stroke="#262626" stroke-width="1.5" stroke-linejoin="round" font-size="12" text-anchor="middle"><g transform="translate(327.1 72.8)"><path d="M0 0L-.9-7C-1.400-12-4.500-15-6.900-18.700A9.200 9.200 0 1 1 6.900-18.700C4.500-15 1.400-12 .9-7Z" fill="#bfc9fb"/><text y="-19.5" fill="#000" stroke="#000" stroke-width=".3">II</text><text y="-12" fill="#000" stroke="#000" stroke-width=".25" font-size="9">+</text></g><g transform="translate(398.8 74.3)"><path d="M0 0L-.9-7C-1.400-12-4.500-15-6.900-18.700A9.200 9.200 0 1 1 6.900-18.700C4.500-15 1.400-12 .9-7Z" fill="#bfc9fb"/><text y="-19.5" fill="#000" stroke="#000" stroke-width=".3">II</text><text y="-12" fill="#000" stroke="#000" stroke-width=".25" font-size="9">+</text></g><g transform="translate(281.6 77.1)"><path d="M0 0L-.9-7C-1.400-12-4.500-15-6.900-18.700A9.200 9.200 0 1 1 6.900-18.700C4.500-15 1.400-12 .9-7Z" fill="#bfc9fb"/><text y="-19.5" fill="#000" stroke="#000" stroke-width=".3">II</text></g><g transform="translate(284.5 80.7)"><path d="M0 0L-.9-7C-1.400-12-4.500-15-6.900-18.700A9.200 9.200 0 1 1 6.900-18.700C4.500-15 1.400-12 .9-7Z" fill="#bfc9fb"/><text y="-19.5" fill="#000" stroke="#000" stroke-width=".3">II</text></g><g transform="translate(277.3 83.6)"><path d="M0 0L-.9-7C-1.400-12-4.500-15-6.900-18.700A9.200 9.200 0 1 1 6.900-18.700C4.500-15 1.400-12 .9-7Z" fill="#bfc9fb"/><text y="-19.5" fill="#000" stroke="#000" stroke-width=".3">II</text></g><g transform="translate(283.0 87.2)"><path d="M0 0L-.9-7C-1.400-12-4.500-15-6.900-18.700A9.200 9.200 0 1 1 6.900-18.700C4.500-15 1.400-12 .9-7Z" fill="#bfc9fb"/><text y="-19.5" fill="#000" stroke="#000" stroke-width=".3">II</text></g><g transform="translate(275.9 92.3)"><path d="M0 0L-.9-7C-1.400-12-4.500-15-6.900-18.700A9.200 9.200 0 1 1 6.900-18.700C4.500-15 1.400-12 .9-7Z" fill="#bfc9fb"/><text y="-19.5" fill="#000" stroke="#000" stroke-width=".3">II</text><text y="-12" fill="#000" stroke="#000" stroke-width=".25" font-size="9">+</text></g><g transform="translate(255.6 105.2)"><path d="M0 0L-.9-7C-1.400-12-4.500-15-6.900-18.700A9.200 9.200 0 1 1 6.900-18.700C4.500-15 1.400-12 .9-7Z" fill="#bfc9fb"/><text y="-19.5" fill="#000" stroke="#000" stroke-width=".3">II</text></g><g transform="translate(521.8 106.4)"><path d="M0 0L-.9-7C-1.400-12-4.500-15-6.900-18.700A9.200 9.200 0 1 1 6.900-18.700C4.500-15 1.400-12 .9-7Z" fill="#bfc9fb"/><text y="-19.5" fill="#000" stroke="#000" stroke-width=".3">II</text></g><g transform="translate(313.4 108.1)"><path d="M0 0L-.9-7C-1.400-12-4.500-15-6.900-18.700A9.200 9.200 0 1 1 6.900-18.700C4.500-15 1.400-12 .9-7Z" fill="#bfc9fb"/><text y="-19.5" fill="#000" stroke="#000" stroke-width=".3">II</text></g><g transform="translate(239.0 111.0)"><path d="M0 0L-.9-7C-1.400-12-4.500-15-6.900-18.700A9.200 9.200 0 1 1 6.900-18.700C4.500-15 1.400-12 .9-7Z" fill="#bfc9fb"/><text y="-19.5" fill="#000" stroke="#000" stroke-width=".3">II</text></g><g transform="translate(243.4 121.9)"><path d="M0 0L-.9-7C-1.400-12-4.500-15-6.900-18.700A9.200 9.200 0 1 1 6.900-18.700C4.500-15 1.400-12 .9-7Z" fill="#bfc9fb"/><text y="-19.5" fill="#000" stroke="#000" stroke-width=".3">II</text></g><g transform="translate(268.4 122.5)"><path d="M0 0L-.9-7C-1.400-12-4.500-15-6.900-18.700A9.200 9.200 0 1 1 6.900-18.700C4.500-15 1.400-12 .9-7Z" fill="#bfc9fb"/><text y="-19.5" fill="#000" stroke="#000" stroke-width=".3">II</text></g><g transform="translate(246.1 123.5)"><path d="M0 0L-.9-7C-1.400-12-4.500-15-6.900-18.700A9.200 9.200 0 1 1 6.900-18.700C4.500-15 1.400-12 .9-7Z" fill="#bfc9fb"/><text y="-19.5" fill="#000" stroke="#000" stroke-width=".3">II</text><text y="-12" fill="#000" stroke="#000" stroke-width=".25" font-size="9">+</text></g><g transform="translate(274.1 126.8)"><path d="M0 0L-.9-7C-1.400-12-4.500-15-6.900-18.700A9.200 9.200 0 1 1 6.900-18.700C4.500-15 1.400-12 .9-7Z" fill="#bfc9fb"/><text y="-19.5" fill="#000" stroke="#000" stroke-width=".3">II</text><text y="-12" fill="#000" stroke="#000" stroke-width=".25" font-size="9">+</text></g><g transform="translate(283.4 127.2)"><path d="M0 0L-.9-7C-1.400-12-4.500-15-6.900-18.700A9.200 9.200 0 1 1 6.900-18.700C4.500-15 1.400-12 .9-7Z" fill="#bfc9fb"/><text y="-19.5" fill="#000" stroke="#000" stroke-width=".3">II</text></g><g transform="translate(243.6 127.3)"><path d="M0 0L-.9-7C-1.400-12-4.500-15-6.900-18.700A9.200 9.200 0 1 1 6.900-18.700C4.500-15 1.400-12 .9-7Z" fill="#bfc9fb"/><text y="-19.5" fill="#000" stroke="#000" stroke-width=".3">II</text></g><g transform="translate(288.0 127.6)"><path d="M0 0L-.9-7C-1.400-12-4.500-15-6.900-18.700A9.200 9.200 0 1 1 6.900-18.700C4.500-15 1.400-12 .9-7Z" fill="#bfc9fb"/><text y="-19.5" fill="#000" stroke="#000" stroke-width=".3">II</text></g><g transform="translate(265.2 127.8)"><path d="M0 0L-.9-7C-1.400-12-4.500-15-6.900-18.700A9.200 9.200 0 1 1 6.900-18.700C4.500-15 1.400-12 .9-7Z" fill="#bfc9fb"/><text y="-19.5" fill="#000" stroke="#000" stroke-width=".3">II</text></g><g transform="translate(257.8 128.4)"><path d="M0 0L-.9-7C-1.400-12-4.500-15-6.900-18.700A9.200 9.200 0 1 1 6.900-18.700C4.500-15 1.400-12 .9-7Z" fill="#bfc9fb"/><text y="-19.5" fill="#000" stroke="#000" stroke-width=".3">II</text></g><g transform="translate(564.7 128.4)"><path d="M0 0L-.9-7C-1.400-12-4.500-15-6.900-18.700A9.200 9.200 0 1 1 6.900-18.700C4.500-15 1.400-12 .9-7Z" fill="#bfc9fb"/><text y="-19.5" fill="#000" stroke="#000" stroke-width=".3">II</text></g><g transform="translate(248.7 131.1)"><path d="M0 0L-.9-7C-1.400-12-4.500-15-6.900-18.700A9.200 9.200 0 1 1 6.900-18.700C4.500-15 1.400-12 .9-7Z" fill="#bfc9fb"/><text y="-19.5" fill="#000" stroke="#000" stroke-width=".3">II</text></g><g transform="translate(257.3 132.3)"><path d="M0 0L-.9-7C-1.400-12-4.500-15-6.900-18.700A9.200 9.200 0 1 1 6.900-18.700C4.500-15 1.400-12 .9-7Z" fill="#bfc9fb"/><text y="-19.5" fill="#000" stroke="#000" stroke-width=".3">II</text></g><g transform="translate(278.8 133.7)"><path d="M0 0L-.9-7C-1.400-12-4.500-15-6.900-18.700A9.200 9.200 0 1 1 6.900-18.700C4.500-15 1.400-12 .9-7Z" fill="#bfc9fb"/><text y="-19.5" fill="#000" stroke="#000" stroke-width=".3">II</text></g><g transform="translate(261.0 133.8)"><path d="M0 0L-.9-7C-1.400-12-4.500-15-6.900-18.700A9.200 9.200 0 1 1 6.900-18.700C4.500-15 1.400-12 .9-7Z" fill="#bfc9fb"/><text y="-19.5" fill="#000" stroke="#000" stroke-width=".3">II</text></g><g transform="translate(253.4 133.9)"><path d="M0 0L-.9-7C-1.400-12-4.500-15-6.900-18.700A9.200 9.200 0 1 1 6.900-18.700C4.500-15 1.400-12 .9-7Z" fill="#bfc9fb"/><text y="-19.5" fill="#000" stroke="#000" stroke-width=".3">II</text></g><g transform="translate(283.2 134.1)"><path d="M0 0L-.9-7C-1.400-12-4.500-15-6.900-18.700A9.200 9.200 0 1 1 6.900-18.700C4.500-15 1.400-12 .9-7Z" fill="#bfc9fb"/><text y="-19.5" fill="#000" stroke="#000" stroke-width=".3">II</text></g><g transform="translate(288.8 134.8)"><path d="M0 0L-.9-7C-1.400-12-4.500-15-6.900-18.700A9.200 9.200 0 1 1 6.900-18.700C4.500-15 1.400-12 .9-7Z" fill="#a0e6ff"/><text y="-19.5" fill="#000" stroke="#000" stroke-width=".3">III</text></g><g transform="translate(260.7 135.7)"><path d="M0 0L-.9-7C-1.400-12-4.500-15-6.900-18.700A9.200 9.200 0 1 1 6.900-18.700C4.500-15 1.400-12 .9-7Z" fill="#bfc9fb"/><text y="-19.5" fill="#000" stroke="#000" stroke-width=".3">II</text></g><g transform="translate(257.7 136.2)"><path d="M0 0L-.9-7C-1.400-12-4.500-15-6.900-18.700A9.200 9.200 0 1 1 6.900-18.700C4.500-15 1.400-12 .9-7Z" fill="#bfc9fb"/><text y="-19.5" fill="#000" stroke="#000" stroke-width=".3">II</text></g><g transform="translate(254.9 136.6)"><path d="M0 0L-.9-7C-1.400-12-4.500-15-6.900-18.700A9.200 9.200 0 1 1 6.900-18.700C4.500-15 1.400-12 .9-7Z" fill="#bfc9fb"/><text y="-19.5" fill="#000" stroke="#000" stroke-width=".3">II</text><text y="-12" fill="#000" stroke="#000" stroke-width=".25" font-size="9">+</text></g><g transform="translate(356.0 137.0)"><path d="M0 0L-.9-7C-1.400-12-4.500-15-6.900-18.700A9.200 9.200 0 1 1 6.900-18.700C4.500-15 1.400-12 .9-7Z" fill="#a0e6ff"/><text y="-19.5" fill="#000" stroke="#000" stroke-width=".3">III</text><text y="-12" fill="#000" stroke="#000" stroke-width=".25" font-size="9">+</text></g><g transform="translate(248.4 137.4)"><path d="M0 0L-.9-7C-1.400-12-4.500-15-6.900-18.700A9.200 9.200 0 1 1 6.900-18.700C4.500-15 1.400-12 .9-7Z" fill="#bfc9fb"/><text y="-19.5" fill="#000" stroke="#000" stroke-width=".3">II</text></g><g transform="translate(251.6 137.4)"><path d="M0 0L-.9-7C-1.400-12-4.500-15-6.900-18.700A9.200 9.200 0 1 1 6.900-18.700C4.500-15 1.400-12 .9-7Z" fill="#bfc9fb"/><text y="-19.5" fill="#000" stroke="#000" stroke-width=".3">II</text></g><g transform="translate(246.6 137.5)"><path d="M0 0L-.9-7C-1.400-12-4.500-15-6.900-18.700A9.200 9.200 0 1 1 6.900-18.700C4.500-15 1.400-12 .9-7Z" fill="#bfc9fb"/><text y="-19.5" fill="#000" stroke="#000" stroke-width=".3">II</text></g><g transform="translate(281.5 137.5)"><path d="M0 0L-.9-7C-1.400-12-4.500-15-6.900-18.700A9.200 9.200 0 1 1 6.900-18.700C4.500-15 1.400-12 .9-7Z" fill="#bfc9fb"/><text y="-19.5" fill="#000" stroke="#000" stroke-width=".3">II</text><text y="-12" fill="#000" stroke="#000" stroke-width=".25" font-size="9">+</text></g><g transform="translate(246.0 138.0)"><path d="M0 0L-.9-7C-1.400-12-4.500-15-6.900-18.700A9.200 9.200 0 1 1 6.900-18.700C4.500-15 1.400-12 .9-7Z" fill="#bfc9fb"/><text y="-19.5" fill="#000" stroke="#000" stroke-width=".3">II</text></g><g transform="translate(277.0 138.0)"><path d="M0 0L-.9-7C-1.400-12-4.500-15-6.900-18.700A9.200 9.200 0 1 1 6.900-18.700C4.500-15 1.400-12 .9-7Z" fill="#bfc9fb"/><text y="-19.5" fill="#000" stroke="#000" stroke-width=".3">II</text></g><g transform="translate(268.0 138.7)"><path d="M0 0L-.9-7C-1.400-12-4.500-15-6.900-18.700A9.200 9.200 0 1 1 6.900-18.700C4.500-15 1.400-12 .9-7Z" fill="#bfc9fb"/><text y="-19.5" fill="#000" stroke="#000" stroke-width=".3">II</text></g><g transform="translate(260.8 138.8)"><path d="M0 0L-.9-7C-1.400-12-4.500-15-6.900-18.700A9.200 9.200 0 1 1 6.900-18.700C4.500-15 1.400-12 .9-7Z" fill="#bfc9fb"/><text y="-19.5" fill="#000" stroke="#000" stroke-width=".3">II</text></g><g transform="translate(289.7 138.9)"><path d="M0 0L-.9-7C-1.400-12-4.500-15-6.900-18.700A9.200 9.200 0 1 1 6.900-18.700C4.500-15 1.400-12 .9-7Z" fill="#a0e6ff"/><text y="-19.5" fill="#000" stroke="#000" stroke-width=".3">III</text></g><g transform="translate(249.9 139.2)"><path d="M0 0L-.9-7C-1.400-12-4.500-15-6.900-18.700A9.200 9.200 0 1 1 6.900-18.700C4.500-15 1.400-12 .9-7Z" fill="#bfc9fb"/><text y="-19.5" fill="#000" stroke="#000" stroke-width=".3">II</text><text y="-12" fill="#000" stroke="#000" stroke-width=".25" font-size="9">+</text></g><g transform="translate(261.5 139.8)"><path d="M0 0L-.9-7C-1.400-12-4.500-15-6.900-18.700A9.200 9.200 0 1 1 6.900-18.700C4.500-15 1.400-12 .9-7Z" fill="#bfc9fb"/><text y="-19.5" fill="#000" stroke="#000" stroke-width=".3">II</text></g><g transform="translate(263.3 139.8)"><path d="M0 0L-.9-7C-1.400-12-4.500-15-6.900-18.700A9.200 9.200 0 1 1 6.900-18.700C4.500-15 1.400-12 .9-7Z" fill="#bfc9fb"/><text y="-19.5" fill="#000" stroke="#000" stroke-width=".3">II</text></g><g transform="translate(257.9 139.9)"><path d="M0 0L-.9-7C-1.400-12-4.500-15-6.900-18.700A9.200 9.200 0 1 1 6.900-18.700C4.500-15 1.400-12 .9-7Z" fill="#bfc9fb"/><text y="-19.5" fill="#000" stroke="#000" stroke-width=".3">II</text></g><g transform="translate(265.3 140.0)"><path d="M0 0L-.9-7C-1.400-12-4.500-15-6.900-18.700A9.200 9.200 0 1 1 6.900-18.700C4.500-15 1.400-12 .9-7Z" fill="#bfc9fb"/><text y="-19.5" fill="#000" stroke="#000" stroke-width=".3">II</text></g><g transform="translate(265.0 140.2)"><path d="M0 0L-.9-7C-1.400-12-4.500-15-6.900-18.700A9.200 9.200 0 1 1 6.900-18.700C4.500-15 1.400-12 .9-7Z" fill="#bfc9fb"/><text y="-19.5" fill="#000" stroke="#000" stroke-width=".3">II</text></g><g transform="translate(274.7 140.3)"><path d="M0 0L-.9-7C-1.400-12-4.500-15-6.900-18.700A9.200 9.200 0 1 1 6.900-18.700C4.500-15 1.400-12 .9-7Z" fill="#bfc9fb"/><text y="-19.5" fill="#000" stroke="#000" stroke-width=".3">II</text></g><g transform="translate(257.0 140.6)"><path d="M0 0L-.9-7C-1.400-12-4.500-15-6.900-18.700A9.200 9.200 0 1 1 6.900-18.700C4.500-15 1.400-12 .9-7Z" fill="#bfc9fb"/><text y="-19.5" fill="#000" stroke="#000" stroke-width=".3">II</text></g><g transform="translate(278.0 140.6)"><path d="M0 0L-.9-7C-1.400-12-4.500-15-6.900-18.700A9.200 9.200 0 1 1 6.900-18.700C4.500-15 1.400-12 .9-7Z" fill="#bfc9fb"/><text y="-19.5" fill="#000" stroke="#000" stroke-width=".3">II</text></g><g transform="translate(290.3 140.6)"><path d="M0 0L-.9-7C-1.400-12-4.500-15-6.900-18.700A9.200 9.200 0 1 1 6.900-18.700C4.500-15 1.400-12 .9-7Z" fill="#bfc9fb"/><text y="-19.5" fill="#000" stroke="#000" stroke-width=".3">II</text></g><g transform="translate(259.7 141.2)"><path d="M0 0L-.9-7C-1.400-12-4.500-15-6.900-18.700A9.200 9.200 0 1 1 6.900-18.700C4.500-15 1.400-12 .9-7Z" fill="#bfc9fb"/><text y="-19.5" fill="#000" stroke="#000" stroke-width=".3">II</text></g><g transform="translate(264.3 141.4)"><path d="M0 0L-.9-7C-1.400-12-4.500-15-6.900-18.700A9.200 9.200 0 1 1 6.900-18.700C4.500-15 1.400-12 .9-7Z" fill="#bfc9fb"/><text y="-19.5" fill="#000" stroke="#000" stroke-width=".3">II</text></g><g transform="translate(264.7 141.5)"><path d="M0 0L-.9-7C-1.400-12-4.500-15-6.900-18.700A9.200 9.200 0 1 1 6.900-18.700C4.500-15 1.400-12 .9-7Z" fill="#bfc9fb"/><text y="-19.5" fill="#000" stroke="#000" stroke-width=".3">II</text><text y="-12" fill="#000" stroke="#000" stroke-width=".25" font-size="9">+</text></g><g transform="translate(246.5 141.6)"><path d="M0 0L-.9-7C-1.400-12-4.500-15-6.900-18.700A9.200 9.200 0 1 1 6.900-18.700C4.500-15 1.400-12 .9-7Z" fill="#bfc9fb"/><text y="-19.5" fill="#000" stroke="#000" stroke-width=".3">II</text></g><g transform="translate(282.2 141.7)"><path d="M0 0L-.9-7C-1.400-12-4.500-15-6.900-18.700A9.200 9.200 0 1 1 6.900-18.700C4.500-15 1.400-12 .9-7Z" fill="#bfc9fb"/><text y="-19.5" fill="#000" stroke="#000" stroke-width=".3">II</text></g><g transform="translate(256.4 142.0)"><path d="M0 0L-.9-7C-1.400-12-4.500-15-6.900-18.700A9.200 9.200 0 1 1 6.900-18.700C4.500-15 1.400-12 .9-7Z" fill="#bfc9fb"/><text y="-19.5" fill="#000" stroke="#000" stroke-width=".3">II</text></g><g transform="translate(261.9 142.0)"><path d="M0 0L-.9-7C-1.400-12-4.500-15-6.900-18.700A9.200 9.200 0 1 1 6.900-18.700C4.500-15 1.400-12 .9-7Z" fill="#bfc9fb"/><text y="-19.5" fill="#000" stroke="#000" stroke-width=".3">II</text></g><g transform="translate(281.0 142.1)"><path d="M0 0L-.9-7C-1.400-12-4.500-15-6.900-18.700A9.200 9.200 0 1 1 6.900-18.700C4.500-15 1.400-12 .9-7Z" fill="#bfc9fb"/><text y="-19.5" fill="#000" stroke="#000" stroke-width=".3">II</text></g><g transform="translate(248.6 142.4)"><path d="M0 0L-.9-7C-1.400-12-4.500-15-6.900-18.700A9.200 9.200 0 1 1 6.900-18.700C4.500-15 1.400-12 .9-7Z" fill="#bfc9fb"/><text y="-19.5" fill="#000" stroke="#000" stroke-width=".3">II</text></g><g transform="translate(247.7 142.6)"><path d="M0 0L-.9-7C-1.400-12-4.500-15-6.900-18.700A9.200 9.200 0 1 1 6.900-18.700C4.500-15 1.400-12 .9-7Z" fill="#bfc9fb"/><text y="-19.5" fill="#000" stroke="#000" stroke-width=".3">II</text></g><g transform="translate(246.5 143.0)"><path d="M0 0L-.9-7C-1.400-12-4.500-15-6.900-18.700A9.200 9.200 0 1 1 6.900-18.700C4.500-15 1.400-12 .9-7Z" fill="#bfc9fb"/><text y="-19.5" fill="#000" stroke="#000" stroke-width=".3">II</text></g><g transform="translate(269.8 143.9)"><path d="M0 0L-.9-7C-1.400-12-4.500-15-6.900-18.700A9.200 9.200 0 1 1 6.900-18.700C4.500-15 1.400-12 .9-7Z" fill="#bfc9fb"/><text y="-19.5" fill="#000" stroke="#000" stroke-width=".3">II</text></g><g transform="translate(248.9 144.0)"><path d="M0 0L-.9-7C-1.400-12-4.500-15-6.900-18.700A9.200 9.200 0 1 1 6.900-18.700C4.500-15 1.400-12 .9-7Z" fill="#bfc9fb"/><text y="-19.5" fill="#000" stroke="#000" stroke-width=".3">II</text></g><g transform="translate(255.5 144.6)"><path d="M0 0L-.9-7C-1.400-12-4.500-15-6.900-18.700A9.200 9.200 0 1 1 6.900-18.700C4.500-15 1.400-12 .9-7Z" fill="#bfc9fb"/><text y="-19.5" fill="#000" stroke="#000" stroke-width=".3">II</text></g><g transform="translate(251.1 144.9)"><path d="M0 0L-.9-7C-1.400-12-4.500-15-6.900-18.700A9.200 9.200 0 1 1 6.900-18.700C4.500-15 1.400-12 .9-7Z" fill="#bfc9fb"/><text y="-19.5" fill="#000" stroke="#000" stroke-width=".3">II</text></g><g transform="translate(272.8 145.6)"><path d="M0 0L-.9-7C-1.400-12-4.500-15-6.900-18.700A9.200 9.200 0 1 1 6.900-18.700C4.500-15 1.400-12 .9-7Z" fill="#bfc9fb"/><text y="-19.5" fill="#000" stroke="#000" stroke-width=".3">II</text><text y="-12" fill="#000" stroke="#000" stroke-width=".25" font-size="9">+</text></g><g transform="translate(332.9 145.7)"><path d="M0 0L-.9-7C-1.400-12-4.500-15-6.900-18.700A9.200 9.200 0 1 1 6.900-18.700C4.500-15 1.400-12 .9-7Z" fill="#bfc9fb"/><text y="-19.5" fill="#000" stroke="#000" stroke-width=".3">II</text></g><g transform="translate(247.1 145.8)"><path d="M0 0L-.9-7C-1.400-12-4.500-15-6.900-18.700A9.200 9.200 0 1 1 6.900-18.700C4.500-15 1.400-12 .9-7Z" fill="#bfc9fb"/><text y="-19.5" fill="#000" stroke="#000" stroke-width=".3">II</text></g><g transform="translate(265.8 146.3)"><path d="M0 0L-.9-7C-1.400-12-4.500-15-6.900-18.700A9.200 9.200 0 1 1 6.900-18.700C4.500-15 1.400-12 .9-7Z" fill="#bfc9fb"/><text y="-19.5" fill="#000" stroke="#000" stroke-width=".3">II</text></g><g transform="translate(253.1 146.8)"><path d="M0 0L-.9-7C-1.400-12-4.500-15-6.900-18.700A9.200 9.200 0 1 1 6.900-18.700C4.500-15 1.400-12 .9-7Z" fill="#bfc9fb"/><text y="-19.5" fill="#000" stroke="#000" stroke-width=".3">II</text><text y="-12" fill="#000" stroke="#000" stroke-width=".25" font-size="9">+</text></g><g transform="translate(283.5 147.0)"><path d="M0 0L-.9-7C-1.400-12-4.500-15-6.900-18.700A9.200 9.200 0 1 1 6.900-18.700C4.500-15 1.400-12 .9-7Z" fill="#a0e6ff"/><text y="-19.5" fill="#000" stroke="#000" stroke-width=".3">III</text></g><g transform="translate(283.0 147.3)"><path d="M0 0L-.9-7C-1.400-12-4.500-15-6.900-18.700A9.200 9.200 0 1 1 6.900-18.700C4.500-15 1.400-12 .9-7Z" fill="#bfc9fb"/><text y="-19.5" fill="#000" stroke="#000" stroke-width=".3">II</text></g><g transform="translate(269.3 147.6)"><path d="M0 0L-.9-7C-1.400-12-4.500-15-6.900-18.700A9.200 9.200 0 1 1 6.900-18.700C4.500-15 1.400-12 .9-7Z" fill="#bfc9fb"/><text y="-19.5" fill="#000" stroke="#000" stroke-width=".3">II</text><text y="-12" fill="#000" stroke="#000" stroke-width=".25" font-size="9">+</text></g><g transform="translate(269.3 147.6)"><path d="M0 0L-.9-7C-1.400-12-4.500-15-6.900-18.700A9.200 9.200 0 1 1 6.900-18.700C4.500-15 1.400-12 .9-7Z" fill="#bfc9fb"/><text y="-19.5" fill="#000" stroke="#000" stroke-width=".3">II</text></g><g transform="translate(256.0 148.0)"><path d="M0 0L-.9-7C-1.400-12-4.500-15-6.900-18.700A9.200 9.200 0 1 1 6.900-18.700C4.500-15 1.400-12 .9-7Z" fill="#bfc9fb"/><text y="-19.5" fill="#000" stroke="#000" stroke-width=".3">II</text></g><g transform="translate(264.5 148.1)"><path d="M0 0L-.9-7C-1.400-12-4.500-15-6.900-18.700A9.200 9.200 0 1 1 6.900-18.700C4.500-15 1.400-12 .9-7Z" fill="#bfc9fb"/><text y="-19.5" fill="#000" stroke="#000" stroke-width=".3">II</text></g><g transform="translate(291.6 148.4)"><path d="M0 0L-.9-7C-1.400-12-4.500-15-6.900-18.700A9.200 9.200 0 1 1 6.900-18.700C4.500-15 1.400-12 .9-7Z" fill="#a0e6ff"/><text y="-19.5" fill="#000" stroke="#000" stroke-width=".3">III</text></g><g transform="translate(254.5 148.6)"><path d="M0 0L-.9-7C-1.400-12-4.500-15-6.900-18.700A9.200 9.200 0 1 1 6.900-18.700C4.500-15 1.400-12 .9-7Z" fill="#bfc9fb"/><text y="-19.5" fill="#000" stroke="#000" stroke-width=".3">II</text></g><g transform="translate(251.7 148.7)"><path d="M0 0L-.9-7C-1.400-12-4.500-15-6.900-18.700A9.200 9.200 0 1 1 6.900-18.700C4.500-15 1.400-12 .9-7Z" fill="#bfc9fb"/><text y="-19.5" fill="#000" stroke="#000" stroke-width=".3">II</text></g><g transform="translate(267.2 149.1)"><path d="M0 0L-.9-7C-1.400-12-4.500-15-6.900-18.700A9.200 9.200 0 1 1 6.900-18.700C4.500-15 1.400-12 .9-7Z" fill="#bfc9fb"/><text y="-19.5" fill="#000" stroke="#000" stroke-width=".3">II</text></g><g transform="translate(299.4 149.2)"><path d="M0 0L-.9-7C-1.400-12-4.500-15-6.900-18.700A9.200 9.200 0 1 1 6.900-18.700C4.500-15 1.400-12 .9-7Z" fill="#bfc9fb"/><text y="-19.5" fill="#000" stroke="#000" stroke-width=".3">II</text><text y="-12" fill="#000" stroke="#000" stroke-width=".25" font-size="9">+</text></g><g transform="translate(254.4 149.3)"><path d="M0 0L-.9-7C-1.400-12-4.500-15-6.900-18.700A9.200 9.200 0 1 1 6.900-18.700C4.500-15 1.400-12 .9-7Z" fill="#bfc9fb"/><text y="-19.5" fill="#000" stroke="#000" stroke-width=".3">II</text></g><g transform="translate(257.4 149.3)"><path d="M0 0L-.9-7C-1.400-12-4.500-15-6.900-18.700A9.200 9.200 0 1 1 6.900-18.700C4.500-15 1.400-12 .9-7Z" fill="#bfc9fb"/><text y="-19.5" fill="#000" stroke="#000" stroke-width=".3">II</text></g><g transform="translate(262.0 149.4)"><path d="M0 0L-.9-7C-1.400-12-4.500-15-6.900-18.700A9.200 9.200 0 1 1 6.900-18.700C4.500-15 1.400-12 .9-7Z" fill="#bfc9fb"/><text y="-19.5" fill="#000" stroke="#000" stroke-width=".3">II</text></g><g transform="translate(244.8 149.6)"><path d="M0 0L-.9-7C-1.400-12-4.500-15-6.900-18.700A9.200 9.200 0 1 1 6.900-18.700C4.500-15 1.400-12 .9-7Z" fill="#bfc9fb"/><text y="-19.5" fill="#000" stroke="#000" stroke-width=".3">II</text></g><g transform="translate(262.9 149.6)"><path d="M0 0L-.9-7C-1.400-12-4.500-15-6.900-18.700A9.200 9.200 0 1 1 6.900-18.700C4.500-15 1.400-12 .9-7Z" fill="#bfc9fb"/><text y="-19.5" fill="#000" stroke="#000" stroke-width=".3">II</text><text y="-12" fill="#000" stroke="#000" stroke-width=".25" font-size="9">+</text></g><g transform="translate(254.3 149.7)"><path d="M0 0L-.9-7C-1.400-12-4.500-15-6.900-18.700A9.200 9.200 0 1 1 6.900-18.700C4.500-15 1.400-12 .9-7Z" fill="#bfc9fb"/><text y="-19.5" fill="#000" stroke="#000" stroke-width=".3">II</text><text y="-12" fill="#000" stroke="#000" stroke-width=".25" font-size="9">+</text></g><g transform="translate(275.5 150.7)"><path d="M0 0L-.9-7C-1.400-12-4.500-15-6.900-18.700A9.200 9.200 0 1 1 6.900-18.700C4.500-15 1.400-12 .9-7Z" fill="#bfc9fb"/><text y="-19.5" fill="#000" stroke="#000" stroke-width=".3">II</text></g><g transform="translate(279.8 150.8)"><path d="M0 0L-.9-7C-1.400-12-4.500-15-6.900-18.700A9.200 9.200 0 1 1 6.900-18.700C4.500-15 1.400-12 .9-7Z" fill="#a0e6ff"/><text y="-19.5" fill="#000" stroke="#000" stroke-width=".3">III</text></g><g transform="translate(254.4 151.2)"><path d="M0 0L-.9-7C-1.400-12-4.500-15-6.900-18.700A9.200 9.200 0 1 1 6.900-18.700C4.500-15 1.400-12 .9-7Z" fill="#bfc9fb"/><text y="-19.5" fill="#000" stroke="#000" stroke-width=".3">II</text></g><g transform="translate(250.5 151.3)"><path d="M0 0L-.9-7C-1.400-12-4.500-15-6.900-18.700A9.200 9.200 0 1 1 6.900-18.700C4.500-15 1.400-12 .9-7Z" fill="#bfc9fb"/><text y="-19.5" fill="#000" stroke="#000" stroke-width=".3">II</text></g><g transform="translate(265.7 151.4)"><path d="M0 0L-.9-7C-1.400-12-4.500-15-6.900-18.700A9.200 9.200 0 1 1 6.900-18.700C4.500-15 1.400-12 .9-7Z" fill="#bfc9fb"/><text y="-19.5" fill="#000" stroke="#000" stroke-width=".3">II</text></g><g transform="translate(250.4 151.5)"><path d="M0 0L-.9-7C-1.400-12-4.500-15-6.900-18.700A9.200 9.200 0 1 1 6.900-18.700C4.500-15 1.400-12 .9-7Z" fill="#bfc9fb"/><text y="-19.5" fill="#000" stroke="#000" stroke-width=".3">II</text></g><g transform="translate(282.5 151.8)"><path d="M0 0L-.9-7C-1.400-12-4.500-15-6.900-18.700A9.200 9.200 0 1 1 6.900-18.700C4.500-15 1.400-12 .9-7Z" fill="#bfc9fb"/><text y="-19.5" fill="#000" stroke="#000" stroke-width=".3">II</text></g><g transform="translate(260.5 152.0)"><path d="M0 0L-.9-7C-1.400-12-4.500-15-6.900-18.700A9.200 9.200 0 1 1 6.900-18.700C4.500-15 1.400-12 .9-7Z" fill="#bfc9fb"/><text y="-19.5" fill="#000" stroke="#000" stroke-width=".3">II</text></g><g transform="translate(248.8 152.1)"><path d="M0 0L-.9-7C-1.400-12-4.500-15-6.900-18.700A9.200 9.200 0 1 1 6.900-18.700C4.500-15 1.400-12 .9-7Z" fill="#bfc9fb"/><text y="-19.5" fill="#000" stroke="#000" stroke-width=".3">II</text><text y="-12" fill="#000" stroke="#000" stroke-width=".25" font-size="9">+</text></g><g transform="translate(247.1 152.2)"><path d="M0 0L-.9-7C-1.400-12-4.500-15-6.900-18.700A9.200 9.200 0 1 1 6.900-18.700C4.500-15 1.400-12 .9-7Z" fill="#bfc9fb"/><text y="-19.5" fill="#000" stroke="#000" stroke-width=".3">II</text><text y="-12" fill="#000" stroke="#000" stroke-width=".25" font-size="9">+</text></g><g transform="translate(263.4 152.3)"><path d="M0 0L-.9-7C-1.400-12-4.500-15-6.900-18.700A9.200 9.200 0 1 1 6.900-18.700C4.500-15 1.400-12 .9-7Z" fill="#bfc9fb"/><text y="-19.5" fill="#000" stroke="#000" stroke-width=".3">II</text></g><g transform="translate(249.1 152.5)"><path d="M0 0L-.9-7C-1.400-12-4.500-15-6.900-18.700A9.200 9.200 0 1 1 6.900-18.700C4.500-15 1.400-12 .9-7Z" fill="#bfc9fb"/><text y="-19.5" fill="#000" stroke="#000" stroke-width=".3">II</text></g><g transform="translate(262.7 152.7)"><path d="M0 0L-.9-7C-1.400-12-4.500-15-6.900-18.700A9.200 9.200 0 1 1 6.900-18.700C4.500-15 1.400-12 .9-7Z" fill="#a0e6ff"/><text y="-19.5" fill="#000" stroke="#000" stroke-width=".3">III</text></g><g transform="translate(248.3 153.1)"><path d="M0 0L-.9-7C-1.400-12-4.500-15-6.900-18.700A9.200 9.200 0 1 1 6.900-18.700C4.500-15 1.400-12 .9-7Z" fill="#bfc9fb"/><text y="-19.5" fill="#000" stroke="#000" stroke-width=".3">II</text></g><g transform="translate(256.0 153.1)"><path d="M0 0L-.9-7C-1.400-12-4.500-15-6.900-18.700A9.200 9.200 0 1 1 6.900-18.700C4.500-15 1.400-12 .9-7Z" fill="#bfc9fb"/><text y="-19.5" fill="#000" stroke="#000" stroke-width=".3">II</text></g><g transform="translate(286.1 153.4)"><path d="M0 0L-.9-7C-1.400-12-4.500-15-6.900-18.700A9.200 9.200 0 1 1 6.900-18.700C4.500-15 1.400-12 .9-7Z" fill="#bfc9fb"/><text y="-19.5" fill="#000" stroke="#000" stroke-width=".3">II</text></g><g transform="translate(254.3 154.0)"><path d="M0 0L-.9-7C-1.400-12-4.500-15-6.900-18.700A9.200 9.200 0 1 1 6.900-18.700C4.500-15 1.400-12 .9-7Z" fill="#bfc9fb"/><text y="-19.5" fill="#000" stroke="#000" stroke-width=".3">II</text><text y="-12" fill="#000" stroke="#000" stroke-width=".25" font-size="9">+</text></g><g transform="translate(245.0 154.1)"><path d="M0 0L-.9-7C-1.400-12-4.500-15-6.900-18.700A9.200 9.200 0 1 1 6.900-18.700C4.500-15 1.400-12 .9-7Z" fill="#bfc9fb"/><text y="-19.5" fill="#000" stroke="#000" stroke-width=".3">II</text></g><g transform="translate(270.1 154.3)"><path d="M0 0L-.9-7C-1.400-12-4.500-15-6.900-18.700A9.200 9.200 0 1 1 6.900-18.700C4.500-15 1.400-12 .9-7Z" fill="#bfc9fb"/><text y="-19.5" fill="#000" stroke="#000" stroke-width=".3">II</text></g><g transform="translate(271.0 154.5)"><path d="M0 0L-.9-7C-1.400-12-4.500-15-6.900-18.700A9.200 9.200 0 1 1 6.900-18.700C4.500-15 1.400-12 .9-7Z" fill="#bfc9fb"/><text y="-19.5" fill="#000" stroke="#000" stroke-width=".3">II</text></g><g transform="translate(263.1 154.6)"><path d="M0 0L-.9-7C-1.400-12-4.500-15-6.900-18.700A9.200 9.200 0 1 1 6.900-18.700C4.500-15 1.400-12 .9-7Z" fill="#bfc9fb"/><text y="-19.5" fill="#000" stroke="#000" stroke-width=".3">II</text></g><g transform="translate(260.2 155.2)"><path d="M0 0L-.9-7C-1.400-12-4.500-15-6.900-18.700A9.200 9.200 0 1 1 6.900-18.700C4.500-15 1.400-12 .9-7Z" fill="#a0e6ff"/><text y="-19.5" fill="#000" stroke="#000" stroke-width=".3">III</text></g><g transform="translate(276.8 155.2)"><path d="M0 0L-.9-7C-1.400-12-4.500-15-6.900-18.700A9.200 9.200 0 1 1 6.900-18.700C4.500-15 1.400-12 .9-7Z" fill="#bfc9fb"/><text y="-19.5" fill="#000" stroke="#000" stroke-width=".3">II</text></g><g transform="translate(272.4 155.3)"><path d="M0 0L-.9-7C-1.400-12-4.500-15-6.900-18.700A9.200 9.200 0 1 1 6.900-18.700C4.500-15 1.400-12 .9-7Z" fill="#bfc9fb"/><text y="-19.5" fill="#000" stroke="#000" stroke-width=".3">II</text></g><g transform="translate(249.3 155.5)"><path d="M0 0L-.9-7C-1.400-12-4.500-15-6.900-18.700A9.200 9.200 0 1 1 6.900-18.700C4.500-15 1.400-12 .9-7Z" fill="#bfc9fb"/><text y="-19.5" fill="#000" stroke="#000" stroke-width=".3">II</text></g><g transform="translate(250.4 156.0)"><path d="M0 0L-.9-7C-1.400-12-4.500-15-6.900-18.700A9.200 9.200 0 1 1 6.900-18.700C4.500-15 1.400-12 .9-7Z" fill="#bfc9fb"/><text y="-19.5" fill="#000" stroke="#000" stroke-width=".3">II</text></g><g transform="translate(271.0 156.1)"><path d="M0 0L-.9-7C-1.400-12-4.500-15-6.900-18.700A9.200 9.200 0 1 1 6.900-18.700C4.500-15 1.400-12 .9-7Z" fill="#bfc9fb"/><text y="-19.5" fill="#000" stroke="#000" stroke-width=".3">II</text></g><g transform="translate(263.8 156.2)"><path d="M0 0L-.9-7C-1.400-12-4.500-15-6.900-18.700A9.200 9.200 0 1 1 6.900-18.700C4.500-15 1.400-12 .9-7Z" fill="#bfc9fb"/><text y="-19.5" fill="#000" stroke="#000" stroke-width=".3">II</text></g><g transform="translate(266.7 156.4)"><path d="M0 0L-.9-7C-1.400-12-4.500-15-6.900-18.700A9.200 9.200 0 1 1 6.900-18.700C4.500-15 1.400-12 .9-7Z" fill="#bfc9fb"/><text y="-19.5" fill="#000" stroke="#000" stroke-width=".3">II</text></g><g transform="translate(267.1 156.7)"><path d="M0 0L-.9-7C-1.400-12-4.500-15-6.900-18.700A9.200 9.200 0 1 1 6.900-18.700C4.500-15 1.400-12 .9-7Z" fill="#bfc9fb"/><text y="-19.5" fill="#000" stroke="#000" stroke-width=".3">II</text></g><g transform="translate(270.9 156.7)"><path d="M0 0L-.9-7C-1.400-12-4.500-15-6.900-18.700A9.200 9.200 0 1 1 6.900-18.700C4.500-15 1.400-12 .9-7Z" fill="#bfc9fb"/><text y="-19.5" fill="#000" stroke="#000" stroke-width=".3">II</text></g><g transform="translate(276.7 156.8)"><path d="M0 0L-.9-7C-1.400-12-4.500-15-6.900-18.700A9.200 9.200 0 1 1 6.900-18.700C4.500-15 1.400-12 .9-7Z" fill="#bfc9fb"/><text y="-19.5" fill="#000" stroke="#000" stroke-width=".3">II</text></g><g transform="translate(259.8 157.1)"><path d="M0 0L-.9-7C-1.400-12-4.500-15-6.900-18.700A9.200 9.200 0 1 1 6.900-18.700C4.500-15 1.400-12 .9-7Z" fill="#bfc9fb"/><text y="-19.5" fill="#000" stroke="#000" stroke-width=".3">II</text></g><g transform="translate(276.6 157.2)"><path d="M0 0L-.9-7C-1.400-12-4.500-15-6.900-18.700A9.200 9.200 0 1 1 6.900-18.700C4.500-15 1.400-12 .9-7Z" fill="#bfc9fb"/><text y="-19.5" fill="#000" stroke="#000" stroke-width=".3">II</text></g><g transform="translate(259.9 157.4)"><path d="M0 0L-.9-7C-1.400-12-4.500-15-6.900-18.700A9.200 9.200 0 1 1 6.900-18.700C4.500-15 1.400-12 .9-7Z" fill="#bfc9fb"/><text y="-19.5" fill="#000" stroke="#000" stroke-width=".3">II</text></g><g transform="translate(252.0 157.6)"><path d="M0 0L-.9-7C-1.400-12-4.500-15-6.900-18.700A9.200 9.200 0 1 1 6.900-18.700C4.500-15 1.400-12 .9-7Z" fill="#bfc9fb"/><text y="-19.5" fill="#000" stroke="#000" stroke-width=".3">II</text></g><g transform="translate(263.8 157.7)"><path d="M0 0L-.9-7C-1.400-12-4.500-15-6.900-18.700A9.200 9.200 0 1 1 6.900-18.700C4.500-15 1.400-12 .9-7Z" fill="#bfc9fb"/><text y="-19.5" fill="#000" stroke="#000" stroke-width=".3">II</text></g><g transform="translate(255.2 157.8)"><path d="M0 0L-.9-7C-1.400-12-4.500-15-6.900-18.700A9.200 9.200 0 1 1 6.900-18.700C4.500-15 1.400-12 .9-7Z" fill="#bfc9fb"/><text y="-19.5" fill="#000" stroke="#000" stroke-width=".3">II</text></g><g transform="translate(332.9 157.8)"><path d="M0 0L-.9-7C-1.400-12-4.500-15-6.900-18.700A9.200 9.200 0 1 1 6.900-18.700C4.500-15 1.400-12 .9-7Z" fill="#bfc9fb"/><text y="-19.5" fill="#000" stroke="#000" stroke-width=".3">II</text></g><g transform="translate(248.7 158.1)"><path d="M0 0L-.9-7C-1.400-12-4.500-15-6.900-18.700A9.200 9.200 0 1 1 6.900-18.700C4.500-15 1.400-12 .9-7Z" fill="#bfc9fb"/><text y="-19.5" fill="#000" stroke="#000" stroke-width=".3">II</text></g><g transform="translate(259.2 158.1)"><path d="M0 0L-.9-7C-1.400-12-4.500-15-6.900-18.700A9.200 9.200 0 1 1 6.900-18.700C4.500-15 1.400-12 .9-7Z" fill="#bfc9fb"/><text y="-19.5" fill="#000" stroke="#000" stroke-width=".3">II</text><text y="-12" fill="#000" stroke="#000" stroke-width=".25" font-size="9">+</text></g><g transform="translate(246.7 158.2)"><path d="M0 0L-.9-7C-1.400-12-4.500-15-6.900-18.700A9.200 9.200 0 1 1 6.900-18.700C4.500-15 1.400-12 .9-7Z" fill="#bfc9fb"/><text y="-19.5" fill="#000" stroke="#000" stroke-width=".3">II</text></g><g transform="translate(259.1 158.2)"><path d="M0 0L-.9-7C-1.400-12-4.500-15-6.900-18.700A9.200 9.200 0 1 1 6.900-18.700C4.500-15 1.400-12 .9-7Z" fill="#bfc9fb"/><text y="-19.5" fill="#000" stroke="#000" stroke-width=".3">II</text></g><g transform="translate(285.8 158.4)"><path d="M0 0L-.9-7C-1.400-12-4.500-15-6.900-18.700A9.200 9.200 0 1 1 6.900-18.700C4.500-15 1.400-12 .9-7Z" fill="#bfc9fb"/><text y="-19.5" fill="#000" stroke="#000" stroke-width=".3">II</text></g><g transform="translate(258.6 158.7)"><path d="M0 0L-.9-7C-1.400-12-4.500-15-6.900-18.700A9.200 9.200 0 1 1 6.900-18.700C4.500-15 1.400-12 .9-7Z" fill="#bfc9fb"/><text y="-19.5" fill="#000" stroke="#000" stroke-width=".3">II</text></g><g transform="translate(251.9 158.8)"><path d="M0 0L-.9-7C-1.400-12-4.500-15-6.900-18.700A9.200 9.200 0 1 1 6.900-18.700C4.500-15 1.400-12 .9-7Z" fill="#a0e6ff"/><text y="-19.5" fill="#000" stroke="#000" stroke-width=".3">III</text></g><g transform="translate(268.8 158.8)"><path d="M0 0L-.9-7C-1.400-12-4.500-15-6.900-18.700A9.200 9.200 0 1 1 6.900-18.700C4.500-15 1.400-12 .9-7Z" fill="#bfc9fb"/><text y="-19.5" fill="#000" stroke="#000" stroke-width=".3">II</text></g><g transform="translate(266.6 158.9)"><path d="M0 0L-.9-7C-1.400-12-4.500-15-6.900-18.700A9.200 9.200 0 1 1 6.900-18.700C4.500-15 1.400-12 .9-7Z" fill="#bfc9fb"/><text y="-19.5" fill="#000" stroke="#000" stroke-width=".3">II</text></g><g transform="translate(268.7 158.9)"><path d="M0 0L-.9-7C-1.400-12-4.500-15-6.900-18.700A9.200 9.200 0 1 1 6.900-18.700C4.500-15 1.400-12 .9-7Z" fill="#bfc9fb"/><text y="-19.5" fill="#000" stroke="#000" stroke-width=".3">II</text></g><g transform="translate(252.1 159.0)"><path d="M0 0L-.9-7C-1.400-12-4.500-15-6.900-18.700A9.200 9.200 0 1 1 6.900-18.700C4.500-15 1.400-12 .9-7Z" fill="#bfc9fb"/><text y="-19.5" fill="#000" stroke="#000" stroke-width=".3">II</text></g><g transform="translate(270.2 159.1)"><path d="M0 0L-.9-7C-1.400-12-4.500-15-6.900-18.700A9.200 9.200 0 1 1 6.900-18.700C4.500-15 1.400-12 .9-7Z" fill="#bfc9fb"/><text y="-19.5" fill="#000" stroke="#000" stroke-width=".3">II</text></g><g transform="translate(262.2 159.2)"><path d="M0 0L-.9-7C-1.400-12-4.500-15-6.900-18.700A9.200 9.200 0 1 1 6.900-18.700C4.500-15 1.400-12 .9-7Z" fill="#bfc9fb"/><text y="-19.5" fill="#000" stroke="#000" stroke-width=".3">II</text></g><g transform="translate(263.7 159.4)"><path d="M0 0L-.9-7C-1.400-12-4.500-15-6.900-18.700A9.200 9.200 0 1 1 6.900-18.700C4.500-15 1.400-12 .9-7Z" fill="#bfc9fb"/><text y="-19.5" fill="#000" stroke="#000" stroke-width=".3">II</text></g><g transform="translate(248.9 159.6)"><path d="M0 0L-.9-7C-1.400-12-4.500-15-6.900-18.700A9.200 9.200 0 1 1 6.900-18.700C4.500-15 1.400-12 .9-7Z" fill="#bfc9fb"/><text y="-19.5" fill="#000" stroke="#000" stroke-width=".3">II</text></g><g transform="translate(277.5 160.2)"><path d="M0 0L-.9-7C-1.400-12-4.500-15-6.900-18.700A9.200 9.200 0 1 1 6.900-18.700C4.500-15 1.400-12 .9-7Z" fill="#bfc9fb"/><text y="-19.5" fill="#000" stroke="#000" stroke-width=".3">II</text></g><g transform="translate(261.1 160.3)"><path d="M0 0L-.9-7C-1.400-12-4.500-15-6.900-18.700A9.200 9.200 0 1 1 6.900-18.700C4.500-15 1.400-12 .9-7Z" fill="#bfc9fb"/><text y="-19.5" fill="#000" stroke="#000" stroke-width=".3">II</text></g><g transform="translate(247.8 160.8)"><path d="M0 0L-.9-7C-1.400-12-4.500-15-6.900-18.700A9.200 9.200 0 1 1 6.900-18.700C4.500-15 1.400-12 .9-7Z" fill="#bfc9fb"/><text y="-19.5" fill="#000" stroke="#000" stroke-width=".3">II</text><text y="-12" fill="#000" stroke="#000" stroke-width=".25" font-size="9">+</text></g><g transform="translate(249.1 160.8)"><path d="M0 0L-.9-7C-1.400-12-4.500-15-6.900-18.700A9.200 9.200 0 1 1 6.900-18.700C4.500-15 1.400-12 .9-7Z" fill="#bfc9fb"/><text y="-19.5" fill="#000" stroke="#000" stroke-width=".3">II</text></g><g transform="translate(260.9 161.1)"><path d="M0 0L-.9-7C-1.400-12-4.500-15-6.900-18.700A9.200 9.200 0 1 1 6.900-18.700C4.500-15 1.400-12 .9-7Z" fill="#bfc9fb"/><text y="-19.5" fill="#000" stroke="#000" stroke-width=".3">II</text></g><g transform="translate(256.7 161.2)"><path d="M0 0L-.9-7C-1.400-12-4.500-15-6.900-18.700A9.200 9.200 0 1 1 6.900-18.700C4.500-15 1.400-12 .9-7Z" fill="#bfc9fb"/><text y="-19.5" fill="#000" stroke="#000" stroke-width=".3">II</text></g><g transform="translate(257.3 162.0)"><path d="M0 0L-.9-7C-1.400-12-4.500-15-6.900-18.700A9.200 9.200 0 1 1 6.900-18.700C4.500-15 1.400-12 .9-7Z" fill="#bfc9fb"/><text y="-19.5" fill="#000" stroke="#000" stroke-width=".3">II</text><text y="-12" fill="#000" stroke="#000" stroke-width=".25" font-size="9">+</text></g><g transform="translate(270.5 162.0)"><path d="M0 0L-.9-7C-1.400-12-4.500-15-6.900-18.700A9.200 9.200 0 1 1 6.900-18.700C4.500-15 1.400-12 .9-7Z" fill="#bfc9fb"/><text y="-19.5" fill="#000" stroke="#000" stroke-width=".3">II</text></g><g transform="translate(264.2 162.1)"><path d="M0 0L-.9-7C-1.400-12-4.500-15-6.900-18.700A9.200 9.200 0 1 1 6.900-18.700C4.500-15 1.400-12 .9-7Z" fill="#bfc9fb"/><text y="-19.5" fill="#000" stroke="#000" stroke-width=".3">II</text><text y="-12" fill="#000" stroke="#000" stroke-width=".25" font-size="9">+</text></g><g transform="translate(251.6 162.3)"><path d="M0 0L-.9-7C-1.400-12-4.500-15-6.900-18.700A9.200 9.200 0 1 1 6.900-18.700C4.500-15 1.400-12 .9-7Z" fill="#bfc9fb"/><text y="-19.5" fill="#000" stroke="#000" stroke-width=".3">II</text></g><g transform="translate(276.5 162.4)"><path d="M0 0L-.9-7C-1.400-12-4.500-15-6.900-18.700A9.200 9.200 0 1 1 6.900-18.700C4.500-15 1.400-12 .9-7Z" fill="#bfc9fb"/><text y="-19.5" fill="#000" stroke="#000" stroke-width=".3">II</text></g><g transform="translate(252.4 162.5)"><path d="M0 0L-.9-7C-1.400-12-4.500-15-6.900-18.700A9.200 9.200 0 1 1 6.900-18.700C4.500-15 1.400-12 .9-7Z" fill="#bfc9fb"/><text y="-19.5" fill="#000" stroke="#000" stroke-width=".3">II</text></g><g transform="translate(247.6 162.8)"><path d="M0 0L-.9-7C-1.400-12-4.500-15-6.900-18.700A9.200 9.200 0 1 1 6.900-18.700C4.500-15 1.400-12 .9-7Z" fill="#bfc9fb"/><text y="-19.5" fill="#000" stroke="#000" stroke-width=".3">II</text></g><g transform="translate(262.4 163.3)"><path d="M0 0L-.9-7C-1.400-12-4.500-15-6.900-18.700A9.200 9.200 0 1 1 6.900-18.700C4.500-15 1.400-12 .9-7Z" fill="#bfc9fb"/><text y="-19.5" fill="#000" stroke="#000" stroke-width=".3">II</text></g><g transform="translate(256.9 163.6)"><path d="M0 0L-.9-7C-1.400-12-4.500-15-6.900-18.700A9.200 9.200 0 1 1 6.900-18.700C4.500-15 1.400-12 .9-7Z" fill="#bfc9fb"/><text y="-19.5" fill="#000" stroke="#000" stroke-width=".3">II</text></g><g transform="translate(261.7 163.8)"><path d="M0 0L-.9-7C-1.400-12-4.500-15-6.900-18.700A9.200 9.200 0 1 1 6.900-18.700C4.500-15 1.400-12 .9-7Z" fill="#bfc9fb"/><text y="-19.5" fill="#000" stroke="#000" stroke-width=".3">II</text></g><g transform="translate(260.5 164.1)"><path d="M0 0L-.9-7C-1.400-12-4.500-15-6.900-18.700A9.200 9.200 0 1 1 6.900-18.700C4.500-15 1.400-12 .9-7Z" fill="#bfc9fb"/><text y="-19.5" fill="#000" stroke="#000" stroke-width=".3">II</text></g><g transform="translate(259.1 164.2)"><path d="M0 0L-.9-7C-1.400-12-4.500-15-6.900-18.700A9.200 9.200 0 1 1 6.900-18.700C4.500-15 1.400-12 .9-7Z" fill="#bfc9fb"/><text y="-19.5" fill="#000" stroke="#000" stroke-width=".3">II</text></g><g transform="translate(275.1 164.2)"><path d="M0 0L-.9-7C-1.400-12-4.500-15-6.900-18.700A9.200 9.200 0 1 1 6.900-18.700C4.500-15 1.400-12 .9-7Z" fill="#a0e6ff"/><text y="-19.5" fill="#000" stroke="#000" stroke-width=".3">III</text></g><g transform="translate(269.7 164.3)"><path d="M0 0L-.9-7C-1.400-12-4.500-15-6.900-18.700A9.200 9.200 0 1 1 6.900-18.700C4.500-15 1.400-12 .9-7Z" fill="#bfc9fb"/><text y="-19.5" fill="#000" stroke="#000" stroke-width=".3">II</text><text y="-12" fill="#000" stroke="#000" stroke-width=".25" font-size="9">+</text></g><g transform="translate(266.5 164.4)"><path d="M0 0L-.9-7C-1.400-12-4.500-15-6.900-18.700A9.200 9.200 0 1 1 6.900-18.700C4.500-15 1.400-12 .9-7Z" fill="#bfc9fb"/><text y="-19.5" fill="#000" stroke="#000" stroke-width=".3">II</text></g><g transform="translate(251.6 165.0)"><path d="M0 0L-.9-7C-1.400-12-4.500-15-6.900-18.700A9.200 9.200 0 1 1 6.900-18.700C4.500-15 1.400-12 .9-7Z" fill="#bfc9fb"/><text y="-19.5" fill="#000" stroke="#000" stroke-width=".3">II</text></g><g transform="translate(253.6 165.0)"><path d="M0 0L-.9-7C-1.400-12-4.500-15-6.900-18.700A9.200 9.200 0 1 1 6.900-18.700C4.500-15 1.400-12 .9-7Z" fill="#bfc9fb"/><text y="-19.5" fill="#000" stroke="#000" stroke-width=".3">II</text></g><g transform="translate(266.8 165.1)"><path d="M0 0L-.9-7C-1.400-12-4.500-15-6.900-18.700A9.200 9.200 0 1 1 6.900-18.700C4.500-15 1.400-12 .9-7Z" fill="#bfc9fb"/><text y="-19.5" fill="#000" stroke="#000" stroke-width=".3">II</text></g><g transform="translate(259.3 165.3)"><path d="M0 0L-.9-7C-1.400-12-4.500-15-6.900-18.700A9.200 9.200 0 1 1 6.900-18.700C4.500-15 1.400-12 .9-7Z" fill="#bfc9fb"/><text y="-19.5" fill="#000" stroke="#000" stroke-width=".3">II</text></g><g transform="translate(256.7 165.6)"><path d="M0 0L-.9-7C-1.400-12-4.500-15-6.900-18.700A9.200 9.200 0 1 1 6.900-18.700C4.500-15 1.400-12 .9-7Z" fill="#bfc9fb"/><text y="-19.5" fill="#000" stroke="#000" stroke-width=".3">II</text></g><g transform="translate(266.0 165.8)"><path d="M0 0L-.9-7C-1.400-12-4.500-15-6.900-18.700A9.200 9.200 0 1 1 6.900-18.700C4.500-15 1.400-12 .9-7Z" fill="#bfc9fb"/><text y="-19.5" fill="#000" stroke="#000" stroke-width=".3">II</text></g><g transform="translate(267.6 165.8)"><path d="M0 0L-.9-7C-1.400-12-4.500-15-6.900-18.700A9.200 9.200 0 1 1 6.900-18.700C4.500-15 1.400-12 .9-7Z" fill="#bfc9fb"/><text y="-19.5" fill="#000" stroke="#000" stroke-width=".3">II</text></g><g transform="translate(251.6 165.9)"><path d="M0 0L-.9-7C-1.400-12-4.500-15-6.900-18.700A9.200 9.200 0 1 1 6.900-18.700C4.500-15 1.400-12 .9-7Z" fill="#bfc9fb"/><text y="-19.5" fill="#000" stroke="#000" stroke-width=".3">II</text></g><g transform="translate(264.6 166.7)"><path d="M0 0L-.9-7C-1.400-12-4.500-15-6.900-18.700A9.200 9.200 0 1 1 6.900-18.700C4.500-15 1.400-12 .9-7Z" fill="#a0e6ff"/><text y="-19.5" fill="#000" stroke="#000" stroke-width=".3">III</text></g><g transform="translate(278.6 166.9)"><path d="M0 0L-.9-7C-1.400-12-4.500-15-6.900-18.700A9.200 9.200 0 1 1 6.900-18.700C4.500-15 1.400-12 .9-7Z" fill="#bfc9fb"/><text y="-19.5" fill="#000" stroke="#000" stroke-width=".3">II</text></g><g transform="translate(251.4 167.0)"><path d="M0 0L-.9-7C-1.400-12-4.500-15-6.900-18.700A9.200 9.200 0 1 1 6.900-18.700C4.500-15 1.400-12 .9-7Z" fill="#bfc9fb"/><text y="-19.5" fill="#000" stroke="#000" stroke-width=".3">II</text><text y="-12" fill="#000" stroke="#000" stroke-width=".25" font-size="9">+</text></g><g transform="translate(259.2 167.4)"><path d="M0 0L-.9-7C-1.400-12-4.500-15-6.900-18.700A9.200 9.200 0 1 1 6.900-18.700C4.500-15 1.400-12 .9-7Z" fill="#bfc9fb"/><text y="-19.5" fill="#000" stroke="#000" stroke-width=".3">II</text></g><g transform="translate(260.4 168.7)"><path d="M0 0L-.9-7C-1.400-12-4.500-15-6.900-18.700A9.200 9.200 0 1 1 6.900-18.700C4.500-15 1.400-12 .9-7Z" fill="#bfc9fb"/><text y="-19.5" fill="#000" stroke="#000" stroke-width=".3">II</text></g><g transform="translate(277.6 169.1)"><path d="M0 0L-.9-7C-1.400-12-4.500-15-6.900-18.700A9.200 9.200 0 1 1 6.900-18.700C4.500-15 1.400-12 .9-7Z" fill="#bfc9fb"/><text y="-19.5" fill="#000" stroke="#000" stroke-width=".3">II</text><text y="-12" fill="#000" stroke="#000" stroke-width=".25" font-size="9">+</text></g><g transform="translate(257.6 169.4)"><path d="M0 0L-.9-7C-1.400-12-4.500-15-6.900-18.700A9.200 9.200 0 1 1 6.900-18.700C4.500-15 1.400-12 .9-7Z" fill="#bfc9fb"/><text y="-19.5" fill="#000" stroke="#000" stroke-width=".3">II</text></g><g transform="translate(262.5 169.4)"><path d="M0 0L-.9-7C-1.400-12-4.500-15-6.900-18.700A9.200 9.200 0 1 1 6.900-18.700C4.500-15 1.400-12 .9-7Z" fill="#bfc9fb"/><text y="-19.5" fill="#000" stroke="#000" stroke-width=".3">II</text></g><g transform="translate(249.1 169.5)"><path d="M0 0L-.9-7C-1.400-12-4.500-15-6.900-18.700A9.200 9.200 0 1 1 6.900-18.700C4.500-15 1.400-12 .9-7Z" fill="#bfc9fb"/><text y="-19.5" fill="#000" stroke="#000" stroke-width=".3">II</text></g><g transform="translate(275.8 169.7)"><path d="M0 0L-.9-7C-1.400-12-4.500-15-6.900-18.700A9.200 9.200 0 1 1 6.900-18.700C4.500-15 1.400-12 .9-7Z" fill="#bfc9fb"/><text y="-19.5" fill="#000" stroke="#000" stroke-width=".3">II</text></g><g transform="translate(253.6 169.8)"><path d="M0 0L-.9-7C-1.400-12-4.500-15-6.900-18.700A9.200 9.200 0 1 1 6.900-18.700C4.500-15 1.400-12 .9-7Z" fill="#a0e6ff"/><text y="-19.5" fill="#000" stroke="#000" stroke-width=".3">III</text></g><g transform="translate(249.6 170.2)"><path d="M0 0L-.9-7C-1.400-12-4.500-15-6.900-18.700A9.200 9.200 0 1 1 6.900-18.700C4.500-15 1.400-12 .9-7Z" fill="#bfc9fb"/><text y="-19.5" fill="#000" stroke="#000" stroke-width=".3">II</text></g><g transform="translate(275.1 170.5)"><path d="M0 0L-.9-7C-1.400-12-4.500-15-6.900-18.700A9.200 9.200 0 1 1 6.900-18.700C4.500-15 1.400-12 .9-7Z" fill="#bfc9fb"/><text y="-19.5" fill="#000" stroke="#000" stroke-width=".3">II</text></g><g transform="translate(263.7 171.1)"><path d="M0 0L-.9-7C-1.400-12-4.500-15-6.900-18.700A9.200 9.200 0 1 1 6.900-18.700C4.500-15 1.400-12 .9-7Z" fill="#bfc9fb"/><text y="-19.5" fill="#000" stroke="#000" stroke-width=".3">II</text></g><g transform="translate(251.1 171.4)"><path d="M0 0L-.9-7C-1.400-12-4.500-15-6.900-18.700A9.200 9.200 0 1 1 6.900-18.700C4.500-15 1.400-12 .9-7Z" fill="#a0e6ff"/><text y="-19.5" fill="#000" stroke="#000" stroke-width=".3">III</text></g><g transform="translate(312.0 171.4)"><path d="M0 0L-.9-7C-1.400-12-4.500-15-6.900-18.700A9.200 9.200 0 1 1 6.900-18.700C4.500-15 1.400-12 .9-7Z" fill="#bfc9fb"/><text y="-19.5" fill="#000" stroke="#000" stroke-width=".3">II</text><text y="-12" fill="#000" stroke="#000" stroke-width=".25" font-size="9">+</text></g><g transform="translate(253.2 172.1)"><path d="M0 0L-.9-7C-1.400-12-4.500-15-6.900-18.700A9.200 9.200 0 1 1 6.900-18.700C4.500-15 1.400-12 .9-7Z" fill="#bfc9fb"/><text y="-19.5" fill="#000" stroke="#000" stroke-width=".3">II</text></g><g transform="translate(254.0 172.1)"><path d="M0 0L-.9-7C-1.400-12-4.500-15-6.900-18.700A9.200 9.200 0 1 1 6.900-18.700C4.500-15 1.400-12 .9-7Z" fill="#bfc9fb"/><text y="-19.5" fill="#000" stroke="#000" stroke-width=".3">II</text></g><g transform="translate(251.4 172.5)"><path d="M0 0L-.9-7C-1.400-12-4.500-15-6.900-18.700A9.200 9.200 0 1 1 6.900-18.700C4.500-15 1.400-12 .9-7Z" fill="#bfc9fb"/><text y="-19.5" fill="#000" stroke="#000" stroke-width=".3">II</text></g><g transform="translate(256.7 173.2)"><path d="M0 0L-.9-7C-1.400-12-4.500-15-6.900-18.700A9.200 9.200 0 1 1 6.900-18.700C4.500-15 1.400-12 .9-7Z" fill="#bfc9fb"/><text y="-19.5" fill="#000" stroke="#000" stroke-width=".3">II</text><text y="-12" fill="#000" stroke="#000" stroke-width=".25" font-size="9">+</text></g><g transform="translate(256.7 173.6)"><path d="M0 0L-.9-7C-1.400-12-4.500-15-6.900-18.700A9.200 9.200 0 1 1 6.900-18.700C4.500-15 1.400-12 .9-7Z" fill="#bfc9fb"/><text y="-19.5" fill="#000" stroke="#000" stroke-width=".3">II</text></g><g transform="translate(256.1 173.8)"><path d="M0 0L-.9-7C-1.400-12-4.500-15-6.900-18.700A9.200 9.200 0 1 1 6.900-18.700C4.500-15 1.400-12 .9-7Z" fill="#bfc9fb"/><text y="-19.5" fill="#000" stroke="#000" stroke-width=".3">II</text></g><g transform="translate(253.2 174.1)"><path d="M0 0L-.9-7C-1.400-12-4.500-15-6.900-18.700A9.200 9.200 0 1 1 6.900-18.700C4.500-15 1.400-12 .9-7Z" fill="#bfc9fb"/><text y="-19.5" fill="#000" stroke="#000" stroke-width=".3">II</text></g><g transform="translate(251.2 174.7)"><path d="M0 0L-.9-7C-1.400-12-4.500-15-6.900-18.700A9.200 9.200 0 1 1 6.900-18.700C4.500-15 1.400-12 .9-7Z" fill="#bfc9fb"/><text y="-19.5" fill="#000" stroke="#000" stroke-width=".3">II</text></g><g transform="translate(255.8 174.8)"><path d="M0 0L-.9-7C-1.400-12-4.500-15-6.900-18.700A9.200 9.200 0 1 1 6.900-18.700C4.500-15 1.400-12 .9-7Z" fill="#bfc9fb"/><text y="-19.5" fill="#000" stroke="#000" stroke-width=".3">II</text></g><g transform="translate(319.2 175.0)"><path d="M0 0L-.9-7C-1.400-12-4.500-15-6.900-18.700A9.200 9.200 0 1 1 6.900-18.700C4.500-15 1.400-12 .9-7Z" fill="#bfc9fb"/><text y="-19.5" fill="#000" stroke="#000" stroke-width=".3">II</text></g><g transform="translate(259.4 176.5)"><path d="M0 0L-.9-7C-1.400-12-4.500-15-6.900-18.700A9.200 9.200 0 1 1 6.900-18.700C4.500-15 1.400-12 .9-7Z" fill="#bfc9fb"/><text y="-19.5" fill="#000" stroke="#000" stroke-width=".3">II</text></g><g transform="translate(254.2 177.9)"><path d="M0 0L-.9-7C-1.400-12-4.500-15-6.900-18.700A9.200 9.200 0 1 1 6.900-18.700C4.500-15 1.400-12 .9-7Z" fill="#bfc9fb"/><text y="-19.5" fill="#000" stroke="#000" stroke-width=".3">II</text><text y="-12" fill="#000" stroke="#000" stroke-width=".25" font-size="9">+</text></g><g transform="translate(394.9 200.6)"><path d="M0 0L-.9-7C-1.400-12-4.500-15-6.900-18.700A9.200 9.200 0 1 1 6.900-18.700C4.500-15 1.400-12 .9-7Z" fill="#bfc9fb"/><text y="-19.5" fill="#000" stroke="#000" stroke-width=".3">II</text></g><g transform="translate(373.3 207.1)"><path d="M0 0L-.9-7C-1.400-12-4.500-15-6.900-18.700A9.200 9.200 0 1 1 6.900-18.700C4.500-15 1.400-12 .9-7Z" fill="#bfc9fb"/><text y="-19.5" fill="#000" stroke="#000" stroke-width=".3">II</text><text y="-12" fill="#000" stroke="#000" stroke-width=".25" font-size="9">+</text></g><g transform="translate(268.6 210.4)"><path d="M0 0L-.9-7C-1.400-12-4.500-15-6.900-18.700A9.200 9.200 0 1 1 6.900-18.700C4.500-15 1.400-12 .9-7Z" fill="#a0e6ff"/><text y="-19.5" fill="#000" stroke="#000" stroke-width=".3">III</text></g><g transform="translate(305.2 211.6)"><path d="M0 0L-.9-7C-1.400-12-4.500-15-6.900-18.700A9.200 9.200 0 1 1 6.900-18.700C4.500-15 1.400-12 .9-7Z" fill="#bfc9fb"/><text y="-19.5" fill="#000" stroke="#000" stroke-width=".3">II</text></g><g transform="translate(267.2 214.7)"><path d="M0 0L-.9-7C-1.400-12-4.500-15-6.900-18.700A9.200 9.200 0 1 1 6.900-18.700C4.500-15 1.400-12 .9-7Z" fill="#bfc9fb"/><text y="-19.5" fill="#000" stroke="#000" stroke-width=".3">II</text></g><g transform="translate(265.8 219.1)"><path d="M0 0L-.9-7C-1.400-12-4.500-15-6.900-18.700A9.200 9.200 0 1 1 6.900-18.700C4.500-15 1.400-12 .9-7Z" fill="#bfc9fb"/><text y="-19.5" fill="#000" stroke="#000" stroke-width=".3">II</text></g><g transform="translate(268.6 224.8)"><path d="M0 0L-.9-7C-1.400-12-4.500-15-6.900-18.700A9.200 9.200 0 1 1 6.900-18.700C4.500-15 1.400-12 .9-7Z" fill="#bfc9fb"/><text y="-19.5" fill="#000" stroke="#000" stroke-width=".3">II</text></g><g transform="translate(264.3 229.2)"><path d="M0 0L-.9-7C-1.400-12-4.500-15-6.900-18.700A9.200 9.200 0 1 1 6.900-18.700C4.500-15 1.400-12 .9-7Z" fill="#bfc9fb"/><text y="-19.5" fill="#000" stroke="#000" stroke-width=".3">II</text></g><g transform="translate(397.1 231.6)"><path d="M0 0L-.9-7C-1.400-12-4.500-15-6.900-18.700A9.200 9.200 0 1 1 6.900-18.700C4.500-15 1.400-12 .9-7Z" fill="#bfc9fb"/><text y="-19.5" fill="#000" stroke="#000" stroke-width=".3">II</text></g><g transform="translate(398.5 233.8)"><path d="M0 0L-.9-7C-1.400-12-4.500-15-6.900-18.700A9.200 9.200 0 1 1 6.900-18.700C4.500-15 1.400-12 .9-7Z" fill="#bfc9fb"/><text y="-19.5" fill="#000" stroke="#000" stroke-width=".3">II</text></g><g transform="translate(468.6 234.7)"><path d="M0 0L-.9-7C-1.400-12-4.500-15-6.900-18.700A9.200 9.200 0 1 1 6.900-18.700C4.500-15 1.400-12 .9-7Z" fill="#bfc9fb"/><text y="-19.5" fill="#000" stroke="#000" stroke-width=".3">II</text></g><g transform="translate(262.9 238.6)"><path d="M0 0L-.9-7C-1.400-12-4.500-15-6.900-18.700A9.200 9.200 0 1 1 6.900-18.700C4.500-15 1.400-12 .9-7Z" fill="#bfc9fb"/><text y="-19.5" fill="#000" stroke="#000" stroke-width=".3">II</text></g><g transform="translate(495.8 241.4)"><path d="M0 0L-.9-7C-1.400-12-4.500-15-6.900-18.700A9.200 9.200 0 1 1 6.900-18.700C4.500-15 1.400-12 .9-7Z" fill="#bfc9fb"/><text y="-19.5" fill="#000" stroke="#000" stroke-width=".3">II</text></g><g transform="translate(351.6 252.6)"><path d="M0 0L-.9-7C-1.400-12-4.500-15-6.900-18.700A9.200 9.200 0 1 1 6.900-18.700C4.500-15 1.400-12 .9-7Z" fill="#bfc9fb"/><text y="-19.5" fill="#000" stroke="#000" stroke-width=".3">II</text><text y="-12" fill="#000" stroke="#000" stroke-width=".25" font-size="9">+</text></g><g transform="translate(488.3 266.2)"><path d="M0 0L-.9-7C-1.400-12-4.500-15-6.900-18.700A9.200 9.200 0 1 1 6.900-18.700C4.500-15 1.400-12 .9-7Z" fill="#bfc9fb"/><text y="-19.5" fill="#000" stroke="#000" stroke-width=".3">II</text></g><g transform="translate(366.8 269.9)"><path d="M0 0L-.9-7C-1.400-12-4.500-15-6.900-18.700A9.200 9.200 0 1 1 6.900-18.700C4.500-15 1.400-12 .9-7Z" fill="#bfc9fb"/><text y="-19.5" fill="#000" stroke="#000" stroke-width=".3">II</text></g><g transform="translate(480.4 271.0)"><path d="M0 0L-.9-7C-1.400-12-4.500-15-6.900-18.700A9.200 9.200 0 1 1 6.900-18.700C4.500-15 1.400-12 .9-7Z" fill="#bfc9fb"/><text y="-19.5" fill="#000" stroke="#000" stroke-width=".3">II</text></g><g transform="translate(346.6 272.1)"><path d="M0 0L-.9-7C-1.400-12-4.500-15-6.900-18.700A9.200 9.200 0 1 1 6.900-18.700C4.500-15 1.400-12 .9-7Z" fill="#bfc9fb"/><text y="-19.5" fill="#000" stroke="#000" stroke-width=".3">II</text><text y="-12" fill="#000" stroke="#000" stroke-width=".25" font-size="9">+</text></g><g transform="translate(273.0 279.3)"><path d="M0 0L-.9-7C-1.400-12-4.500-15-6.900-18.700A9.200 9.200 0 1 1 6.900-18.700C4.500-15 1.400-12 .9-7Z" fill="#bfc9fb"/><text y="-19.5" fill="#000" stroke="#000" stroke-width=".3">II</text></g><g transform="translate(253.6 281.4)"><path d="M0 0L-.9-7C-1.400-12-4.500-15-6.900-18.700A9.200 9.200 0 1 1 6.900-18.700C4.500-15 1.400-12 .9-7Z" fill="#a0e6ff"/><text y="-19.5" fill="#000" stroke="#000" stroke-width=".3">III</text><text y="-12" fill="#000" stroke="#000" stroke-width=".25" font-size="9">+</text></g><g transform="translate(398.5 283.2)"><path d="M0 0L-.9-7C-1.400-12-4.500-15-6.900-18.700A9.200 9.200 0 1 1 6.900-18.700C4.500-15 1.400-12 .9-7Z" fill="#bfc9fb"/><text y="-19.5" fill="#000" stroke="#000" stroke-width=".3">II</text></g><g transform="translate(269.5 284.3)"><path d="M0 0L-.9-7C-1.400-12-4.500-15-6.900-18.700A9.200 9.200 0 1 1 6.900-18.700C4.500-15 1.400-12 .9-7Z" fill="#bfc9fb"/><text y="-19.5" fill="#000" stroke="#000" stroke-width=".3">II</text><text y="-12" fill="#000" stroke="#000" stroke-width=".25" font-size="9">+</text></g><g transform="translate(379.8 288.5)"><path d="M0 0L-.9-7C-1.400-12-4.500-15-6.900-18.700A9.200 9.200 0 1 1 6.900-18.700C4.500-15 1.400-12 .9-7Z" fill="#bfc9fb"/><text y="-19.5" fill="#000" stroke="#000" stroke-width=".3">II</text></g><g transform="translate(360.3 291.2)"><path d="M0 0L-.9-7C-1.400-12-4.500-15-6.900-18.700A9.200 9.200 0 1 1 6.900-18.700C4.500-15 1.400-12 .9-7Z" fill="#bfc9fb"/><text y="-19.5" fill="#000" stroke="#000" stroke-width=".3">II</text></g><g transform="translate(442.2 300.6)"><path d="M0 0L-.9-7C-1.400-12-4.500-15-6.900-18.700A9.200 9.200 0 1 1 6.900-18.700C4.500-15 1.400-12 .9-7Z" fill="#bfc9fb"/><text y="-19.5" fill="#000" stroke="#000" stroke-width=".3">II</text></g><g transform="translate(248.5 302.4)"><path d="M0 0L-.9-7C-1.400-12-4.500-15-6.900-18.700A9.200 9.200 0 1 1 6.900-18.700C4.500-15 1.400-12 .9-7Z" fill="#bfc9fb"/><text y="-19.5" fill="#000" stroke="#000" stroke-width=".3">II</text></g><g transform="translate(343.9 306.6)"><path d="M0 0L-.9-7C-1.400-12-4.500-15-6.900-18.700A9.200 9.200 0 1 1 6.900-18.700C4.500-15 1.400-12 .9-7Z" fill="#bfc9fb"/><text y="-19.5" fill="#000" stroke="#000" stroke-width=".3">II</text></g><g transform="translate(262.2 309.6)"><path d="M0 0L-.9-7C-1.400-12-4.500-15-6.900-18.700A9.200 9.200 0 1 1 6.900-18.700C4.500-15 1.400-12 .9-7Z" fill="#bfc9fb"/><text y="-19.5" fill="#000" stroke="#000" stroke-width=".3">II</text></g><g transform="translate(316.4 310.5)"><path d="M0 0L-.9-7C-1.400-12-4.500-15-6.900-18.700A9.200 9.200 0 1 1 6.900-18.700C4.500-15 1.400-12 .9-7Z" fill="#bfc9fb"/><text y="-19.5" fill="#000" stroke="#000" stroke-width=".3">II</text></g><g transform="translate(245.6 311.7)"><path d="M0 0L-.9-7C-1.400-12-4.500-15-6.900-18.700A9.200 9.200 0 1 1 6.900-18.700C4.500-15 1.400-12 .9-7Z" fill="#a0e6ff"/><text y="-19.5" fill="#000" stroke="#000" stroke-width=".3">III</text></g><g transform="translate(365.2 316.5)"><path d="M0 0L-.9-7C-1.400-12-4.500-15-6.900-18.700A9.200 9.200 0 1 1 6.900-18.700C4.500-15 1.400-12 .9-7Z" fill="#bfc9fb"/><text y="-19.5" fill="#000" stroke="#000" stroke-width=".3">II</text></g><g transform="translate(270.2 319.7)"><path d="M0 0L-.9-7C-1.400-12-4.500-15-6.900-18.700A9.200 9.200 0 1 1 6.900-18.700C4.500-15 1.400-12 .9-7Z" fill="#bfc9fb"/><text y="-19.5" fill="#000" stroke="#000" stroke-width=".3">II</text></g><g transform="translate(355.4 320.4)"><path d="M0 0L-.9-7C-1.400-12-4.500-15-6.900-18.700A9.200 9.200 0 1 1 6.900-18.700C4.500-15 1.400-12 .9-7Z" fill="#bfc9fb"/><text y="-19.5" fill="#000" stroke="#000" stroke-width=".3">II</text></g><g transform="translate(356.6 320.8)"><path d="M0 0L-.9-7C-1.400-12-4.500-15-6.900-18.700A9.200 9.200 0 1 1 6.900-18.700C4.500-15 1.400-12 .9-7Z" fill="#bfc9fb"/><text y="-19.5" fill="#000" stroke="#000" stroke-width=".3">II</text></g><g transform="translate(366.7 321.5)"><path d="M0 0L-.9-7C-1.400-12-4.500-15-6.900-18.700A9.200 9.200 0 1 1 6.900-18.700C4.500-15 1.400-12 .9-7Z" fill="#bfc9fb"/><text y="-19.5" fill="#000" stroke="#000" stroke-width=".3">II</text></g><g transform="translate(326.7 324.9)"><path d="M0 0L-.9-7C-1.400-12-4.500-15-6.900-18.700A9.200 9.200 0 1 1 6.900-18.700C4.500-15 1.400-12 .9-7Z" fill="#bfc9fb"/><text y="-19.5" fill="#000" stroke="#000" stroke-width=".3">II</text></g><g transform="translate(230.5 325.5)"><path d="M0 0L-.9-7C-1.400-12-4.500-15-6.900-18.700A9.200 9.200 0 1 1 6.900-18.700C4.500-15 1.400-12 .9-7Z" fill="#a0e6ff"/><text y="-19.5" fill="#000" stroke="#000" stroke-width=".3">III</text></g><g transform="translate(394.1 325.9)"><path d="M0 0L-.9-7C-1.400-12-4.500-15-6.900-18.700A9.200 9.200 0 1 1 6.900-18.700C4.500-15 1.400-12 .9-7Z" fill="#bfc9fb"/><text y="-19.5" fill="#000" stroke="#000" stroke-width=".3">II</text></g><g transform="translate(332.2 327.1)"><path d="M0 0L-.9-7C-1.400-12-4.500-15-6.900-18.700A9.200 9.200 0 1 1 6.900-18.700C4.500-15 1.400-12 .9-7Z" fill="#bfc9fb"/><text y="-19.5" fill="#000" stroke="#000" stroke-width=".3">II</text></g><g transform="translate(242.0 329.0)"><path d="M0 0L-.9-7C-1.400-12-4.500-15-6.900-18.700A9.200 9.200 0 1 1 6.900-18.700C4.500-15 1.400-12 .9-7Z" fill="#bfc9fb"/><text y="-19.5" fill="#000" stroke="#000" stroke-width=".3">II</text></g><g transform="translate(386.0 331.6)"><path d="M0 0L-.9-7C-1.400-12-4.500-15-6.900-18.700A9.200 9.200 0 1 1 6.900-18.700C4.500-15 1.400-12 .9-7Z" fill="#bfc9fb"/><text y="-19.5" fill="#000" stroke="#000" stroke-width=".3">II</text></g><g transform="translate(260.0 332.0)"><path d="M0 0L-.9-7C-1.400-12-4.500-15-6.900-18.700A9.200 9.200 0 1 1 6.900-18.700C4.500-15 1.400-12 .9-7Z" fill="#bfc9fb"/><text y="-19.5" fill="#000" stroke="#000" stroke-width=".3">II</text></g><g transform="translate(240.7 332.5)"><path d="M0 0L-.9-7C-1.400-12-4.500-15-6.900-18.700A9.200 9.200 0 1 1 6.900-18.700C4.500-15 1.400-12 .9-7Z" fill="#bfc9fb"/><text y="-19.5" fill="#000" stroke="#000" stroke-width=".3">II</text></g><g transform="translate(240.2 333.0)"><path d="M0 0L-.9-7C-1.400-12-4.500-15-6.900-18.700A9.200 9.200 0 1 1 6.900-18.700C4.500-15 1.400-12 .9-7Z" fill="#bfc9fb"/><text y="-19.5" fill="#000" stroke="#000" stroke-width=".3">II</text></g><g transform="translate(240.2 334.3)"><path d="M0 0L-.9-7C-1.400-12-4.500-15-6.900-18.700A9.200 9.200 0 1 1 6.900-18.700C4.500-15 1.400-12 .9-7Z" fill="#bfc9fb"/><text y="-19.5" fill="#000" stroke="#000" stroke-width=".3">II</text><text y="-12" fill="#000" stroke="#000" stroke-width=".25" font-size="9">+</text></g><g transform="translate(469.4 334.7)"><path d="M0 0L-.9-7C-1.400-12-4.500-15-6.900-18.700A9.200 9.200 0 1 1 6.900-18.700C4.500-15 1.400-12 .9-7Z" fill="#bfc9fb"/><text y="-19.5" fill="#000" stroke="#000" stroke-width=".3">II</text></g><g transform="translate(376.8 335.2)"><path d="M0 0L-.9-7C-1.400-12-4.500-15-6.900-18.700A9.200 9.200 0 1 1 6.900-18.700C4.500-15 1.400-12 .9-7Z" fill="#bfc9fb"/><text y="-19.5" fill="#000" stroke="#000" stroke-width=".3">II</text></g><g transform="translate(337.9 336.5)"><path d="M0 0L-.9-7C-1.400-12-4.500-15-6.900-18.700A9.200 9.200 0 1 1 6.900-18.700C4.500-15 1.400-12 .9-7Z" fill="#bfc9fb"/><text y="-19.5" fill="#000" stroke="#000" stroke-width=".3">II</text></g><g transform="translate(232.7 337.0)"><path d="M0 0L-.9-7C-1.400-12-4.500-15-6.900-18.700A9.200 9.200 0 1 1 6.900-18.700C4.500-15 1.400-12 .9-7Z" fill="#bfc9fb"/><text y="-19.5" fill="#000" stroke="#000" stroke-width=".3">II</text></g><g transform="translate(257.2 337.7)"><path d="M0 0L-.9-7C-1.400-12-4.500-15-6.900-18.700A9.200 9.200 0 1 1 6.900-18.700C4.500-15 1.400-12 .9-7Z" fill="#bfc9fb"/><text y="-19.5" fill="#000" stroke="#000" stroke-width=".3">II</text></g><g transform="translate(388.3 339.6)"><path d="M0 0L-.9-7C-1.400-12-4.500-15-6.900-18.700A9.200 9.200 0 1 1 6.900-18.700C4.500-15 1.400-12 .9-7Z" fill="#bfc9fb"/><text y="-19.5" fill="#000" stroke="#000" stroke-width=".3">II</text></g><g transform="translate(257.3 339.8)"><path d="M0 0L-.9-7C-1.400-12-4.500-15-6.900-18.700A9.200 9.200 0 1 1 6.900-18.700C4.500-15 1.400-12 .9-7Z" fill="#bfc9fb"/><text y="-19.5" fill="#000" stroke="#000" stroke-width=".3">II</text></g><g transform="translate(236.0 341.0)"><path d="M0 0L-.9-7C-1.400-12-4.500-15-6.900-18.700A9.200 9.200 0 1 1 6.900-18.700C4.500-15 1.400-12 .9-7Z" fill="#bfc9fb"/><text y="-19.5" fill="#000" stroke="#000" stroke-width=".3">II</text><text y="-12" fill="#000" stroke="#000" stroke-width=".25" font-size="9">+</text></g><g transform="translate(353.2 342.0)"><path d="M0 0L-.9-7C-1.400-12-4.500-15-6.900-18.700A9.200 9.200 0 1 1 6.900-18.700C4.500-15 1.400-12 .9-7Z" fill="#a0e6ff"/><text y="-19.5" fill="#000" stroke="#000" stroke-width=".3">III</text></g><g transform="translate(237.7 342.3)"><path d="M0 0L-.9-7C-1.400-12-4.500-15-6.900-18.700A9.200 9.200 0 1 1 6.900-18.700C4.500-15 1.400-12 .9-7Z" fill="#bfc9fb"/><text y="-19.5" fill="#000" stroke="#000" stroke-width=".3">II</text></g><g transform="translate(235.5 343.4)"><path d="M0 0L-.9-7C-1.400-12-4.500-15-6.900-18.700A9.200 9.200 0 1 1 6.900-18.700C4.500-15 1.400-12 .9-7Z" fill="#bfc9fb"/><text y="-19.5" fill="#000" stroke="#000" stroke-width=".3">II</text></g><g transform="translate(240.7 344.2)"><path d="M0 0L-.9-7C-1.400-12-4.500-15-6.900-18.700A9.200 9.200 0 1 1 6.900-18.700C4.500-15 1.400-12 .9-7Z" fill="#bfc9fb"/><text y="-19.5" fill="#000" stroke="#000" stroke-width=".3">II</text></g><g transform="translate(344.3 344.2)"><path d="M0 0L-.9-7C-1.400-12-4.500-15-6.900-18.700A9.200 9.200 0 1 1 6.900-18.700C4.500-15 1.400-12 .9-7Z" fill="#a0e6ff"/><text y="-19.5" fill="#000" stroke="#000" stroke-width=".3">III</text></g><g transform="translate(369.6 344.6)"><path d="M0 0L-.9-7C-1.400-12-4.500-15-6.900-18.700A9.200 9.200 0 1 1 6.900-18.700C4.500-15 1.400-12 .9-7Z" fill="#bfc9fb"/><text y="-19.5" fill="#000" stroke="#000" stroke-width=".3">II</text></g><g transform="translate(343.2 345.4)"><path d="M0 0L-.9-7C-1.400-12-4.500-15-6.900-18.700A9.200 9.200 0 1 1 6.900-18.700C4.500-15 1.400-12 .9-7Z" fill="#bfc9fb"/><text y="-19.5" fill="#000" stroke="#000" stroke-width=".3">II</text></g><g transform="translate(235.8 345.8)"><path d="M0 0L-.9-7C-1.400-12-4.500-15-6.900-18.700A9.200 9.200 0 1 1 6.900-18.700C4.500-15 1.400-12 .9-7Z" fill="#bfc9fb"/><text y="-19.5" fill="#000" stroke="#000" stroke-width=".3">II</text></g><g transform="translate(237.2 346.6)"><path d="M0 0L-.9-7C-1.400-12-4.500-15-6.900-18.700A9.200 9.200 0 1 1 6.900-18.700C4.500-15 1.400-12 .9-7Z" fill="#bfc9fb"/><text y="-19.5" fill="#000" stroke="#000" stroke-width=".3">II</text></g><g transform="translate(238.9 346.6)"><path d="M0 0L-.9-7C-1.400-12-4.500-15-6.900-18.700A9.200 9.200 0 1 1 6.900-18.700C4.500-15 1.400-12 .9-7Z" fill="#bfc9fb"/><text y="-19.5" fill="#000" stroke="#000" stroke-width=".3">II</text></g><g transform="translate(349.4 347.5)"><path d="M0 0L-.9-7C-1.400-12-4.500-15-6.900-18.700A9.200 9.200 0 1 1 6.900-18.700C4.500-15 1.400-12 .9-7Z" fill="#bfc9fb"/><text y="-19.5" fill="#000" stroke="#000" stroke-width=".3">II</text></g><g transform="translate(332.2 348.1)"><path d="M0 0L-.9-7C-1.400-12-4.500-15-6.900-18.700A9.200 9.200 0 1 1 6.900-18.700C4.500-15 1.400-12 .9-7Z" fill="#bfc9fb"/><text y="-19.5" fill="#000" stroke="#000" stroke-width=".3">II</text></g><g transform="translate(258.0 348.4)"><path d="M0 0L-.9-7C-1.400-12-4.500-15-6.900-18.700A9.200 9.200 0 1 1 6.900-18.700C4.500-15 1.400-12 .9-7Z" fill="#bfc9fb"/><text y="-19.5" fill="#000" stroke="#000" stroke-width=".3">II</text></g><g transform="translate(347.4 348.6)"><path d="M0 0L-.9-7C-1.400-12-4.500-15-6.900-18.700A9.200 9.200 0 1 1 6.900-18.700C4.500-15 1.400-12 .9-7Z" fill="#a0e6ff"/><text y="-19.5" fill="#000" stroke="#000" stroke-width=".3">III</text></g><g transform="translate(343.3 348.8)"><path d="M0 0L-.9-7C-1.400-12-4.500-15-6.900-18.700A9.200 9.200 0 1 1 6.900-18.700C4.500-15 1.400-12 .9-7Z" fill="#bfc9fb"/><text y="-19.5" fill="#000" stroke="#000" stroke-width=".3">II</text><text y="-12" fill="#000" stroke="#000" stroke-width=".25" font-size="9">+</text></g><g transform="translate(389.0 349.0)"><path d="M0 0L-.9-7C-1.400-12-4.500-15-6.900-18.700A9.200 9.200 0 1 1 6.900-18.700C4.500-15 1.400-12 .9-7Z" fill="#bfc9fb"/><text y="-19.5" fill="#000" stroke="#000" stroke-width=".3">II</text></g><g transform="translate(256.5 350.0)"><path d="M0 0L-.9-7C-1.400-12-4.500-15-6.900-18.700A9.200 9.200 0 1 1 6.900-18.700C4.500-15 1.400-12 .9-7Z" fill="#bfc9fb"/><text y="-19.5" fill="#000" stroke="#000" stroke-width=".3">II</text></g><g transform="translate(478.1 350.5)"><path d="M0 0L-.9-7C-1.400-12-4.500-15-6.900-18.700A9.200 9.200 0 1 1 6.900-18.700C4.500-15 1.400-12 .9-7Z" fill="#bfc9fb"/><text y="-19.5" fill="#000" stroke="#000" stroke-width=".3">II</text></g><g transform="translate(242.3 351.1)"><path d="M0 0L-.9-7C-1.400-12-4.500-15-6.900-18.700A9.200 9.200 0 1 1 6.900-18.700C4.500-15 1.400-12 .9-7Z" fill="#bfc9fb"/><text y="-19.5" fill="#000" stroke="#000" stroke-width=".3">II</text></g><g transform="translate(242.8 351.1)"><path d="M0 0L-.9-7C-1.400-12-4.500-15-6.900-18.700A9.200 9.200 0 1 1 6.900-18.700C4.500-15 1.400-12 .9-7Z" fill="#bfc9fb"/><text y="-19.5" fill="#000" stroke="#000" stroke-width=".3">II</text></g><g transform="translate(367.4 351.1)"><path d="M0 0L-.9-7C-1.400-12-4.500-15-6.900-18.700A9.200 9.200 0 1 1 6.900-18.700C4.500-15 1.400-12 .9-7Z" fill="#bfc9fb"/><text y="-19.5" fill="#000" stroke="#000" stroke-width=".3">II</text></g><g transform="translate(232.1 351.2)"><path d="M0 0L-.9-7C-1.400-12-4.500-15-6.900-18.700A9.200 9.200 0 1 1 6.900-18.700C4.500-15 1.400-12 .9-7Z" fill="#bfc9fb"/><text y="-19.5" fill="#000" stroke="#000" stroke-width=".3">II</text></g><g transform="translate(343.2 351.9)"><path d="M0 0L-.9-7C-1.400-12-4.500-15-6.900-18.700A9.200 9.200 0 1 1 6.900-18.700C4.500-15 1.400-12 .9-7Z" fill="#bfc9fb"/><text y="-19.5" fill="#000" stroke="#000" stroke-width=".3">II</text><text y="-12" fill="#000" stroke="#000" stroke-width=".25" font-size="9">+</text></g><g transform="translate(358.7 351.9)"><path d="M0 0L-.9-7C-1.400-12-4.500-15-6.900-18.700A9.200 9.200 0 1 1 6.900-18.700C4.500-15 1.400-12 .9-7Z" fill="#bfc9fb"/><text y="-19.5" fill="#000" stroke="#000" stroke-width=".3">II</text></g><g transform="translate(397.0 351.9)"><path d="M0 0L-.9-7C-1.400-12-4.500-15-6.900-18.700A9.200 9.200 0 1 1 6.900-18.700C4.500-15 1.400-12 .9-7Z" fill="#bfc9fb"/><text y="-19.5" fill="#000" stroke="#000" stroke-width=".3">II</text></g><g transform="translate(239.5 352.0)"><path d="M0 0L-.9-7C-1.400-12-4.500-15-6.900-18.700A9.200 9.200 0 1 1 6.900-18.700C4.500-15 1.400-12 .9-7Z" fill="#a0e6ff"/><text y="-19.5" fill="#000" stroke="#000" stroke-width=".3">III</text></g><g transform="translate(239.9 352.4)"><path d="M0 0L-.9-7C-1.400-12-4.500-15-6.900-18.700A9.200 9.200 0 1 1 6.900-18.700C4.500-15 1.400-12 .9-7Z" fill="#bfc9fb"/><text y="-19.5" fill="#000" stroke="#000" stroke-width=".3">II</text></g><g transform="translate(346.6 352.6)"><path d="M0 0L-.9-7C-1.400-12-4.500-15-6.900-18.700A9.200 9.200 0 1 1 6.900-18.700C4.500-15 1.400-12 .9-7Z" fill="#bfc9fb"/><text y="-19.5" fill="#000" stroke="#000" stroke-width=".3">II</text></g><g transform="translate(245.9 353.2)"><path d="M0 0L-.9-7C-1.400-12-4.500-15-6.900-18.700A9.200 9.200 0 1 1 6.900-18.700C4.500-15 1.400-12 .9-7Z" fill="#bfc9fb"/><text y="-19.5" fill="#000" stroke="#000" stroke-width=".3">II</text></g><g transform="translate(390.3 353.2)"><path d="M0 0L-.9-7C-1.400-12-4.500-15-6.900-18.700A9.200 9.200 0 1 1 6.900-18.700C4.500-15 1.400-12 .9-7Z" fill="#bfc9fb"/><text y="-19.5" fill="#000" stroke="#000" stroke-width=".3">II</text></g><g transform="translate(350.8 354.0)"><path d="M0 0L-.9-7C-1.400-12-4.500-15-6.900-18.700A9.200 9.200 0 1 1 6.900-18.700C4.500-15 1.400-12 .9-7Z" fill="#bfc9fb"/><text y="-19.5" fill="#000" stroke="#000" stroke-width=".3">II</text></g><g transform="translate(245.1 354.4)"><path d="M0 0L-.9-7C-1.400-12-4.500-15-6.900-18.700A9.200 9.200 0 1 1 6.900-18.700C4.500-15 1.400-12 .9-7Z" fill="#bfc9fb"/><text y="-19.5" fill="#000" stroke="#000" stroke-width=".3">II</text></g><g transform="translate(232.1 354.6)"><path d="M0 0L-.9-7C-1.400-12-4.500-15-6.900-18.700A9.200 9.200 0 1 1 6.900-18.700C4.500-15 1.400-12 .9-7Z" fill="#bfc9fb"/><text y="-19.5" fill="#000" stroke="#000" stroke-width=".3">II</text></g><g transform="translate(243.5 354.8)"><path d="M0 0L-.9-7C-1.400-12-4.500-15-6.900-18.700A9.200 9.200 0 1 1 6.900-18.700C4.500-15 1.400-12 .9-7Z" fill="#bfc9fb"/><text y="-19.5" fill="#000" stroke="#000" stroke-width=".3">II</text><text y="-12" fill="#000" stroke="#000" stroke-width=".25" font-size="9">+</text></g><g transform="translate(235.7 354.9)"><path d="M0 0L-.9-7C-1.400-12-4.500-15-6.900-18.700A9.200 9.200 0 1 1 6.900-18.700C4.500-15 1.400-12 .9-7Z" fill="#bfc9fb"/><text y="-19.5" fill="#000" stroke="#000" stroke-width=".3">II</text></g><g transform="translate(236.1 355.3)"><path d="M0 0L-.9-7C-1.400-12-4.500-15-6.900-18.700A9.200 9.200 0 1 1 6.900-18.700C4.500-15 1.400-12 .9-7Z" fill="#bfc9fb"/><text y="-19.5" fill="#000" stroke="#000" stroke-width=".3">II</text></g><g transform="translate(343.4 355.4)"><path d="M0 0L-.9-7C-1.400-12-4.500-15-6.900-18.700A9.200 9.200 0 1 1 6.900-18.700C4.500-15 1.400-12 .9-7Z" fill="#bfc9fb"/><text y="-19.5" fill="#000" stroke="#000" stroke-width=".3">II</text></g><g transform="translate(237.6 355.5)"><path d="M0 0L-.9-7C-1.400-12-4.500-15-6.900-18.700A9.200 9.200 0 1 1 6.900-18.700C4.500-15 1.400-12 .9-7Z" fill="#bfc9fb"/><text y="-19.5" fill="#000" stroke="#000" stroke-width=".3">II</text></g><g transform="translate(362.2 355.5)"><path d="M0 0L-.9-7C-1.400-12-4.500-15-6.900-18.700A9.200 9.200 0 1 1 6.900-18.700C4.500-15 1.400-12 .9-7Z" fill="#bfc9fb"/><text y="-19.5" fill="#000" stroke="#000" stroke-width=".3">II</text></g><g transform="translate(241.3 355.7)"><path d="M0 0L-.9-7C-1.400-12-4.500-15-6.900-18.700A9.200 9.200 0 1 1 6.900-18.700C4.500-15 1.400-12 .9-7Z" fill="#a0e6ff"/><text y="-19.5" fill="#000" stroke="#000" stroke-width=".3">III</text></g><g transform="translate(359.7 356.6)"><path d="M0 0L-.9-7C-1.400-12-4.500-15-6.900-18.700A9.200 9.200 0 1 1 6.900-18.700C4.500-15 1.400-12 .9-7Z" fill="#bfc9fb"/><text y="-19.5" fill="#000" stroke="#000" stroke-width=".3">II</text></g><g transform="translate(229.8 357.1)"><path d="M0 0L-.9-7C-1.400-12-4.500-15-6.900-18.700A9.200 9.200 0 1 1 6.900-18.700C4.500-15 1.400-12 .9-7Z" fill="#bfc9fb"/><text y="-19.5" fill="#000" stroke="#000" stroke-width=".3">II</text><text y="-12" fill="#000" stroke="#000" stroke-width=".25" font-size="9">+</text></g><g transform="translate(229.8 357.1)"><path d="M0 0L-.9-7C-1.400-12-4.500-15-6.900-18.700A9.200 9.200 0 1 1 6.900-18.700C4.500-15 1.400-12 .9-7Z" fill="#bfc9fb"/><text y="-19.5" fill="#000" stroke="#000" stroke-width=".3">II</text></g><g transform="translate(255.1 357.1)"><path d="M0 0L-.9-7C-1.400-12-4.500-15-6.900-18.700A9.200 9.200 0 1 1 6.900-18.700C4.500-15 1.400-12 .9-7Z" fill="#a0e6ff"/><text y="-19.5" fill="#000" stroke="#000" stroke-width=".3">III</text></g><g transform="translate(374.6 357.6)"><path d="M0 0L-.9-7C-1.400-12-4.500-15-6.900-18.700A9.200 9.200 0 1 1 6.900-18.700C4.500-15 1.400-12 .9-7Z" fill="#a0e6ff"/><text y="-19.5" fill="#000" stroke="#000" stroke-width=".3">III</text></g><g transform="translate(243.5 357.7)"><path d="M0 0L-.9-7C-1.400-12-4.500-15-6.900-18.700A9.200 9.200 0 1 1 6.900-18.700C4.500-15 1.400-12 .9-7Z" fill="#bfc9fb"/><text y="-19.5" fill="#000" stroke="#000" stroke-width=".3">II</text></g><g transform="translate(400.6 357.8)"><path d="M0 0L-.9-7C-1.400-12-4.500-15-6.900-18.700A9.200 9.200 0 1 1 6.900-18.700C4.500-15 1.400-12 .9-7Z" fill="#bfc9fb"/><text y="-19.5" fill="#000" stroke="#000" stroke-width=".3">II</text></g><g transform="translate(247.3 358.0)"><path d="M0 0L-.9-7C-1.400-12-4.500-15-6.900-18.700A9.200 9.200 0 1 1 6.900-18.700C4.500-15 1.400-12 .9-7Z" fill="#a0e6ff"/><text y="-19.5" fill="#000" stroke="#000" stroke-width=".3">III</text></g><g transform="translate(255.8 358.0)"><path d="M0 0L-.9-7C-1.400-12-4.500-15-6.900-18.700A9.200 9.200 0 1 1 6.900-18.700C4.500-15 1.400-12 .9-7Z" fill="#a0e6ff"/><text y="-19.5" fill="#000" stroke="#000" stroke-width=".3">III</text></g><g transform="translate(344.8 358.0)"><path d="M0 0L-.9-7C-1.400-12-4.500-15-6.900-18.700A9.200 9.200 0 1 1 6.900-18.700C4.500-15 1.400-12 .9-7Z" fill="#bfc9fb"/><text y="-19.5" fill="#000" stroke="#000" stroke-width=".3">II</text></g><g transform="translate(240.2 358.1)"><path d="M0 0L-.9-7C-1.400-12-4.500-15-6.900-18.700A9.200 9.200 0 1 1 6.900-18.700C4.500-15 1.400-12 .9-7Z" fill="#bfc9fb"/><text y="-19.5" fill="#000" stroke="#000" stroke-width=".3">II</text></g><g transform="translate(236.5 358.2)"><path d="M0 0L-.9-7C-1.400-12-4.500-15-6.900-18.700A9.200 9.200 0 1 1 6.900-18.700C4.500-15 1.400-12 .9-7Z" fill="#a0e6ff"/><text y="-19.5" fill="#000" stroke="#000" stroke-width=".3">III</text></g><g transform="translate(241.9 358.4)"><path d="M0 0L-.9-7C-1.400-12-4.500-15-6.900-18.700A9.200 9.200 0 1 1 6.900-18.700C4.500-15 1.400-12 .9-7Z" fill="#bfc9fb"/><text y="-19.5" fill="#000" stroke="#000" stroke-width=".3">II</text></g><g transform="translate(247.5 358.4)"><path d="M0 0L-.9-7C-1.400-12-4.500-15-6.900-18.700A9.200 9.200 0 1 1 6.900-18.700C4.500-15 1.400-12 .9-7Z" fill="#bfc9fb"/><text y="-19.5" fill="#000" stroke="#000" stroke-width=".3">II</text></g><g transform="translate(229.4 358.5)"><path d="M0 0L-.9-7C-1.400-12-4.500-15-6.900-18.700A9.200 9.200 0 1 1 6.900-18.700C4.500-15 1.400-12 .9-7Z" fill="#bfc9fb"/><text y="-19.5" fill="#000" stroke="#000" stroke-width=".3">II</text></g><g transform="translate(238.2 358.5)"><path d="M0 0L-.9-7C-1.400-12-4.500-15-6.900-18.700A9.200 9.200 0 1 1 6.900-18.700C4.500-15 1.400-12 .9-7Z" fill="#bfc9fb"/><text y="-19.5" fill="#000" stroke="#000" stroke-width=".3">II</text></g><g transform="translate(229.7 358.6)"><path d="M0 0L-.9-7C-1.400-12-4.500-15-6.900-18.700A9.200 9.200 0 1 1 6.900-18.700C4.500-15 1.400-12 .9-7Z" fill="#bfc9fb"/><text y="-19.5" fill="#000" stroke="#000" stroke-width=".3">II</text></g><g transform="translate(338.5 358.7)"><path d="M0 0L-.9-7C-1.400-12-4.500-15-6.900-18.700A9.200 9.200 0 1 1 6.900-18.700C4.500-15 1.400-12 .9-7Z" fill="#bfc9fb"/><text y="-19.5" fill="#000" stroke="#000" stroke-width=".3">II</text><text y="-12" fill="#000" stroke="#000" stroke-width=".25" font-size="9">+</text></g><g transform="translate(342.0 358.8)"><path d="M0 0L-.9-7C-1.400-12-4.500-15-6.900-18.700A9.200 9.200 0 1 1 6.900-18.700C4.500-15 1.400-12 .9-7Z" fill="#bfc9fb"/><text y="-19.5" fill="#000" stroke="#000" stroke-width=".3">II</text></g><g transform="translate(389.4 358.9)"><path d="M0 0L-.9-7C-1.400-12-4.500-15-6.900-18.700A9.200 9.200 0 1 1 6.900-18.700C4.500-15 1.400-12 .9-7Z" fill="#bfc9fb"/><text y="-19.5" fill="#000" stroke="#000" stroke-width=".3">II</text></g><g transform="translate(340.9 359.1)"><path d="M0 0L-.9-7C-1.400-12-4.500-15-6.900-18.700A9.200 9.200 0 1 1 6.900-18.700C4.500-15 1.400-12 .9-7Z" fill="#bfc9fb"/><text y="-19.5" fill="#000" stroke="#000" stroke-width=".3">II</text></g><g transform="translate(373.5 359.2)"><path d="M0 0L-.9-7C-1.400-12-4.500-15-6.900-18.700A9.200 9.200 0 1 1 6.900-18.700C4.500-15 1.400-12 .9-7Z" fill="#bfc9fb"/><text y="-19.5" fill="#000" stroke="#000" stroke-width=".3">II</text></g><g transform="translate(347.3 359.7)"><path d="M0 0L-.9-7C-1.400-12-4.500-15-6.900-18.700A9.200 9.200 0 1 1 6.900-18.700C4.500-15 1.400-12 .9-7Z" fill="#bfc9fb"/><text y="-19.5" fill="#000" stroke="#000" stroke-width=".3">II</text></g><g transform="translate(229.0 359.8)"><path d="M0 0L-.9-7C-1.400-12-4.500-15-6.900-18.700A9.200 9.200 0 1 1 6.900-18.700C4.500-15 1.400-12 .9-7Z" fill="#bfc9fb"/><text y="-19.5" fill="#000" stroke="#000" stroke-width=".3">II</text></g><g transform="translate(241.1 360.0)"><path d="M0 0L-.9-7C-1.400-12-4.500-15-6.900-18.700A9.200 9.200 0 1 1 6.900-18.700C4.500-15 1.400-12 .9-7Z" fill="#bfc9fb"/><text y="-19.5" fill="#000" stroke="#000" stroke-width=".3">II</text></g><g transform="translate(232.2 360.7)"><path d="M0 0L-.9-7C-1.400-12-4.500-15-6.900-18.700A9.200 9.200 0 1 1 6.900-18.700C4.500-15 1.400-12 .9-7Z" fill="#bfc9fb"/><text y="-19.5" fill="#000" stroke="#000" stroke-width=".3">II</text></g><g transform="translate(232.2 360.7)"><path d="M0 0L-.9-7C-1.400-12-4.500-15-6.900-18.700A9.200 9.200 0 1 1 6.900-18.700C4.500-15 1.400-12 .9-7Z" fill="#bfc9fb"/><text y="-19.5" fill="#000" stroke="#000" stroke-width=".3">II</text></g><g transform="translate(236.8 361.0)"><path d="M0 0L-.9-7C-1.400-12-4.500-15-6.900-18.700A9.200 9.200 0 1 1 6.900-18.700C4.500-15 1.400-12 .9-7Z" fill="#bfc9fb"/><text y="-19.5" fill="#000" stroke="#000" stroke-width=".3">II</text></g><g transform="translate(386.8 361.4)"><path d="M0 0L-.9-7C-1.400-12-4.500-15-6.900-18.700A9.200 9.200 0 1 1 6.900-18.700C4.500-15 1.400-12 .9-7Z" fill="#bfc9fb"/><text y="-19.5" fill="#000" stroke="#000" stroke-width=".3">II</text></g><g transform="translate(244.1 361.6)"><path d="M0 0L-.9-7C-1.400-12-4.500-15-6.900-18.700A9.200 9.200 0 1 1 6.900-18.700C4.500-15 1.400-12 .9-7Z" fill="#bfc9fb"/><text y="-19.5" fill="#000" stroke="#000" stroke-width=".3">II</text></g><g transform="translate(246.6 361.6)"><path d="M0 0L-.9-7C-1.400-12-4.500-15-6.900-18.700A9.200 9.200 0 1 1 6.900-18.700C4.500-15 1.400-12 .9-7Z" fill="#bfc9fb"/><text y="-19.5" fill="#000" stroke="#000" stroke-width=".3">II</text></g><g transform="translate(238.5 361.9)"><path d="M0 0L-.9-7C-1.400-12-4.500-15-6.900-18.700A9.200 9.200 0 1 1 6.900-18.700C4.500-15 1.400-12 .9-7Z" fill="#bfc9fb"/><text y="-19.5" fill="#000" stroke="#000" stroke-width=".3">II</text><text y="-12" fill="#000" stroke="#000" stroke-width=".25" font-size="9">+</text></g><g transform="translate(231.2 362.0)"><path d="M0 0L-.9-7C-1.400-12-4.500-15-6.900-18.700A9.200 9.200 0 1 1 6.900-18.700C4.500-15 1.400-12 .9-7Z" fill="#a0e6ff"/><text y="-19.5" fill="#000" stroke="#000" stroke-width=".3">III</text></g><g transform="translate(240.6 362.1)"><path d="M0 0L-.9-7C-1.400-12-4.500-15-6.900-18.700A9.200 9.200 0 1 1 6.900-18.700C4.500-15 1.400-12 .9-7Z" fill="#bfc9fb"/><text y="-19.5" fill="#000" stroke="#000" stroke-width=".3">II</text></g><g transform="translate(237.4 362.2)"><path d="M0 0L-.9-7C-1.400-12-4.500-15-6.900-18.700A9.200 9.200 0 1 1 6.900-18.700C4.500-15 1.400-12 .9-7Z" fill="#bfc9fb"/><text y="-19.5" fill="#000" stroke="#000" stroke-width=".3">II</text></g><g transform="translate(244.6 362.2)"><path d="M0 0L-.9-7C-1.400-12-4.500-15-6.900-18.700A9.200 9.200 0 1 1 6.900-18.700C4.500-15 1.400-12 .9-7Z" fill="#bfc9fb"/><text y="-19.5" fill="#000" stroke="#000" stroke-width=".3">II</text><text y="-12" fill="#000" stroke="#000" stroke-width=".25" font-size="9">+</text></g><g transform="translate(236.7 362.4)"><path d="M0 0L-.9-7C-1.400-12-4.500-15-6.900-18.700A9.200 9.200 0 1 1 6.900-18.700C4.500-15 1.400-12 .9-7Z" fill="#a0e6ff"/><text y="-19.5" fill="#000" stroke="#000" stroke-width=".3">III</text></g><g transform="translate(230.0 362.6)"><path d="M0 0L-.9-7C-1.400-12-4.500-15-6.900-18.700A9.200 9.200 0 1 1 6.900-18.700C4.500-15 1.400-12 .9-7Z" fill="#bfc9fb"/><text y="-19.5" fill="#000" stroke="#000" stroke-width=".3">II</text></g><g transform="translate(238.8 362.6)"><path d="M0 0L-.9-7C-1.400-12-4.500-15-6.900-18.700A9.200 9.200 0 1 1 6.900-18.700C4.500-15 1.400-12 .9-7Z" fill="#bfc9fb"/><text y="-19.5" fill="#000" stroke="#000" stroke-width=".3">II</text></g><g transform="translate(242.5 362.6)"><path d="M0 0L-.9-7C-1.400-12-4.500-15-6.900-18.700A9.200 9.200 0 1 1 6.900-18.700C4.500-15 1.400-12 .9-7Z" fill="#bfc9fb"/><text y="-19.5" fill="#000" stroke="#000" stroke-width=".3">II</text></g><g transform="translate(229.4 363.1)"><path d="M0 0L-.9-7C-1.400-12-4.500-15-6.900-18.700A9.200 9.200 0 1 1 6.900-18.700C4.500-15 1.400-12 .9-7Z" fill="#bfc9fb"/><text y="-19.5" fill="#000" stroke="#000" stroke-width=".3">II</text></g><g transform="translate(244.6 363.3)"><path d="M0 0L-.9-7C-1.400-12-4.500-15-6.900-18.700A9.200 9.200 0 1 1 6.900-18.700C4.500-15 1.400-12 .9-7Z" fill="#a0e6ff"/><text y="-19.5" fill="#000" stroke="#000" stroke-width=".3">III</text></g><g transform="translate(239.8 363.4)"><path d="M0 0L-.9-7C-1.400-12-4.500-15-6.900-18.700A9.200 9.200 0 1 1 6.900-18.700C4.500-15 1.400-12 .9-7Z" fill="#a0e6ff"/><text y="-19.5" fill="#000" stroke="#000" stroke-width=".3">III</text></g><g transform="translate(370.9 363.4)"><path d="M0 0L-.9-7C-1.400-12-4.500-15-6.900-18.700A9.200 9.200 0 1 1 6.900-18.700C4.500-15 1.400-12 .9-7Z" fill="#a0e6ff"/><text y="-19.5" fill="#000" stroke="#000" stroke-width=".3">III</text></g><g transform="translate(230.2 363.5)"><path d="M0 0L-.9-7C-1.400-12-4.500-15-6.900-18.700A9.200 9.200 0 1 1 6.900-18.700C4.500-15 1.400-12 .9-7Z" fill="#a0e6ff"/><text y="-19.5" fill="#000" stroke="#000" stroke-width=".3">III</text></g><g transform="translate(241.7 363.8)"><path d="M0 0L-.9-7C-1.400-12-4.500-15-6.900-18.700A9.200 9.200 0 1 1 6.900-18.700C4.500-15 1.400-12 .9-7Z" fill="#bfc9fb"/><text y="-19.5" fill="#000" stroke="#000" stroke-width=".3">II</text></g><g transform="translate(247.6 364.0)"><path d="M0 0L-.9-7C-1.400-12-4.500-15-6.900-18.700A9.200 9.200 0 1 1 6.900-18.700C4.500-15 1.400-12 .9-7Z" fill="#a0e6ff"/><text y="-19.5" fill="#000" stroke="#000" stroke-width=".3">III</text></g><g transform="translate(345.8 364.1)"><path d="M0 0L-.9-7C-1.400-12-4.500-15-6.900-18.700A9.200 9.200 0 1 1 6.900-18.700C4.500-15 1.400-12 .9-7Z" fill="#bfc9fb"/><text y="-19.5" fill="#000" stroke="#000" stroke-width=".3">II</text></g><g transform="translate(247.0 364.3)"><path d="M0 0L-.9-7C-1.400-12-4.500-15-6.900-18.700A9.200 9.200 0 1 1 6.900-18.700C4.500-15 1.400-12 .9-7Z" fill="#bfc9fb"/><text y="-19.5" fill="#000" stroke="#000" stroke-width=".3">II</text></g><g transform="translate(240.3 364.8)"><path d="M0 0L-.9-7C-1.400-12-4.500-15-6.900-18.700A9.200 9.200 0 1 1 6.900-18.700C4.500-15 1.400-12 .9-7Z" fill="#bfc9fb"/><text y="-19.5" fill="#000" stroke="#000" stroke-width=".3">II</text></g><g transform="translate(244.2 365.1)"><path d="M0 0L-.9-7C-1.400-12-4.500-15-6.900-18.700A9.200 9.200 0 1 1 6.900-18.700C4.500-15 1.400-12 .9-7Z" fill="#bfc9fb"/><text y="-19.5" fill="#000" stroke="#000" stroke-width=".3">II</text></g><g transform="translate(240.2 365.4)"><path d="M0 0L-.9-7C-1.400-12-4.500-15-6.900-18.700A9.200 9.200 0 1 1 6.900-18.700C4.500-15 1.400-12 .9-7Z" fill="#bfc9fb"/><text y="-19.5" fill="#000" stroke="#000" stroke-width=".3">II</text></g><g transform="translate(237.3 365.8)"><path d="M0 0L-.9-7C-1.400-12-4.500-15-6.900-18.700A9.200 9.200 0 1 1 6.900-18.700C4.500-15 1.400-12 .9-7Z" fill="#bfc9fb"/><text y="-19.5" fill="#000" stroke="#000" stroke-width=".3">II</text></g><g transform="translate(231.1 366.1)"><path d="M0 0L-.9-7C-1.400-12-4.500-15-6.900-18.700A9.200 9.200 0 1 1 6.900-18.700C4.500-15 1.400-12 .9-7Z" fill="#bfc9fb"/><text y="-19.5" fill="#000" stroke="#000" stroke-width=".3">II</text></g><g transform="translate(234.0 366.2)"><path d="M0 0L-.9-7C-1.400-12-4.500-15-6.900-18.700A9.200 9.200 0 1 1 6.900-18.700C4.500-15 1.400-12 .9-7Z" fill="#bfc9fb"/><text y="-19.5" fill="#000" stroke="#000" stroke-width=".3">II</text></g><g transform="translate(334.2 366.3)"><path d="M0 0L-.9-7C-1.400-12-4.500-15-6.900-18.700A9.200 9.200 0 1 1 6.900-18.700C4.500-15 1.400-12 .9-7Z" fill="#a0e6ff"/><text y="-19.5" fill="#000" stroke="#000" stroke-width=".3">III</text></g><g transform="translate(367.9 366.7)"><path d="M0 0L-.9-7C-1.400-12-4.500-15-6.900-18.700A9.200 9.200 0 1 1 6.900-18.700C4.500-15 1.400-12 .9-7Z" fill="#bfc9fb"/><text y="-19.5" fill="#000" stroke="#000" stroke-width=".3">II</text></g><g transform="translate(358.3 366.9)"><path d="M0 0L-.9-7C-1.400-12-4.500-15-6.900-18.700A9.200 9.200 0 1 1 6.900-18.700C4.500-15 1.400-12 .9-7Z" fill="#bfc9fb"/><text y="-19.5" fill="#000" stroke="#000" stroke-width=".3">II</text></g><g transform="translate(233.7 367.2)"><path d="M0 0L-.9-7C-1.400-12-4.500-15-6.900-18.700A9.200 9.200 0 1 1 6.900-18.700C4.500-15 1.400-12 .9-7Z" fill="#a0e6ff"/><text y="-19.5" fill="#000" stroke="#000" stroke-width=".3">III</text></g><g transform="translate(333.8 367.2)"><path d="M0 0L-.9-7C-1.400-12-4.500-15-6.900-18.700A9.200 9.200 0 1 1 6.900-18.700C4.500-15 1.400-12 .9-7Z" fill="#a0e6ff"/><text y="-19.5" fill="#000" stroke="#000" stroke-width=".3">III</text></g><g transform="translate(361.3 367.4)"><path d="M0 0L-.9-7C-1.400-12-4.500-15-6.900-18.700A9.200 9.200 0 1 1 6.900-18.700C4.500-15 1.400-12 .9-7Z" fill="#bfc9fb"/><text y="-19.5" fill="#000" stroke="#000" stroke-width=".3">II</text></g><g transform="translate(387.5 367.5)"><path d="M0 0L-.9-7C-1.400-12-4.500-15-6.900-18.700A9.200 9.200 0 1 1 6.900-18.700C4.500-15 1.400-12 .9-7Z" fill="#bfc9fb"/><text y="-19.5" fill="#000" stroke="#000" stroke-width=".3">II</text></g><g transform="translate(239.5 367.6)"><path d="M0 0L-.9-7C-1.400-12-4.500-15-6.900-18.700A9.200 9.200 0 1 1 6.900-18.700C4.500-15 1.400-12 .9-7Z" fill="#a0e6ff"/><text y="-19.5" fill="#000" stroke="#000" stroke-width=".3">III</text></g><g transform="translate(380.4 367.7)"><path d="M0 0L-.9-7C-1.400-12-4.500-15-6.900-18.700A9.200 9.200 0 1 1 6.900-18.700C4.500-15 1.400-12 .9-7Z" fill="#a0e6ff"/><text y="-19.5" fill="#000" stroke="#000" stroke-width=".3">III</text></g><g transform="translate(245.6 367.9)"><path d="M0 0L-.9-7C-1.400-12-4.500-15-6.900-18.700A9.200 9.200 0 1 1 6.900-18.700C4.500-15 1.400-12 .9-7Z" fill="#bfc9fb"/><text y="-19.5" fill="#000" stroke="#000" stroke-width=".3">II</text></g><g transform="translate(244.5 368.0)"><path d="M0 0L-.9-7C-1.400-12-4.500-15-6.900-18.700A9.200 9.200 0 1 1 6.900-18.700C4.500-15 1.400-12 .9-7Z" fill="#bfc9fb"/><text y="-19.5" fill="#000" stroke="#000" stroke-width=".3">II</text></g><g transform="translate(362.9 368.0)"><path d="M0 0L-.9-7C-1.400-12-4.500-15-6.900-18.700A9.200 9.200 0 1 1 6.900-18.700C4.500-15 1.400-12 .9-7Z" fill="#bfc9fb"/><text y="-19.5" fill="#000" stroke="#000" stroke-width=".3">II</text></g><g transform="translate(236.1 368.1)"><path d="M0 0L-.9-7C-1.400-12-4.500-15-6.900-18.700A9.200 9.200 0 1 1 6.900-18.700C4.500-15 1.400-12 .9-7Z" fill="#bfc9fb"/><text y="-19.5" fill="#000" stroke="#000" stroke-width=".3">II</text></g><g transform="translate(367.4 368.7)"><path d="M0 0L-.9-7C-1.400-12-4.500-15-6.900-18.700A9.200 9.200 0 1 1 6.900-18.700C4.500-15 1.400-12 .9-7Z" fill="#a0e6ff"/><text y="-19.5" fill="#000" stroke="#000" stroke-width=".3">III</text></g><g transform="translate(240.3 369.1)"><path d="M0 0L-.9-7C-1.400-12-4.500-15-6.900-18.700A9.200 9.200 0 1 1 6.900-18.700C4.500-15 1.400-12 .9-7Z" fill="#a0e6ff"/><text y="-19.5" fill="#000" stroke="#000" stroke-width=".3">III</text></g><g transform="translate(234.9 369.7)"><path d="M0 0L-.9-7C-1.400-12-4.500-15-6.900-18.700A9.200 9.200 0 1 1 6.900-18.700C4.500-15 1.400-12 .9-7Z" fill="#bfc9fb"/><text y="-19.5" fill="#000" stroke="#000" stroke-width=".3">II</text></g><g transform="translate(359.7 369.7)"><path d="M0 0L-.9-7C-1.400-12-4.500-15-6.900-18.700A9.200 9.200 0 1 1 6.900-18.700C4.500-15 1.400-12 .9-7Z" fill="#bfc9fb"/><text y="-19.5" fill="#000" stroke="#000" stroke-width=".3">II</text></g><g transform="translate(359.0 370.6)"><path d="M0 0L-.9-7C-1.400-12-4.500-15-6.900-18.700A9.200 9.200 0 1 1 6.900-18.700C4.500-15 1.400-12 .9-7Z" fill="#bfc9fb"/><text y="-19.5" fill="#000" stroke="#000" stroke-width=".3">II</text></g><g transform="translate(367.6 371.9)"><path d="M0 0L-.9-7C-1.400-12-4.500-15-6.900-18.700A9.200 9.200 0 1 1 6.900-18.700C4.500-15 1.400-12 .9-7Z" fill="#a0e6ff"/><text y="-19.5" fill="#000" stroke="#000" stroke-width=".3">III</text></g><g transform="translate(368.9 372.1)"><path d="M0 0L-.9-7C-1.400-12-4.500-15-6.900-18.700A9.200 9.200 0 1 1 6.900-18.700C4.500-15 1.400-12 .9-7Z" fill="#a0e6ff"/><text y="-19.5" fill="#000" stroke="#000" stroke-width=".3">III</text></g><g transform="translate(375.1 373.5)"><path d="M0 0L-.9-7C-1.400-12-4.500-15-6.900-18.700A9.200 9.200 0 1 1 6.900-18.700C4.500-15 1.400-12 .9-7Z" fill="#bfc9fb"/><text y="-19.5" fill="#000" stroke="#000" stroke-width=".3">II</text></g><g transform="translate(390.2 374.0)"><path d="M0 0L-.9-7C-1.400-12-4.500-15-6.900-18.700A9.200 9.200 0 1 1 6.900-18.700C4.500-15 1.400-12 .9-7Z" fill="#bfc9fb"/><text y="-19.5" fill="#000" stroke="#000" stroke-width=".3">II</text></g><g transform="translate(304.1 374.6)"><path d="M0 0L-.9-7C-1.400-12-4.500-15-6.900-18.700A9.200 9.200 0 1 1 6.900-18.700C4.500-15 1.400-12 .9-7Z" fill="#bfc9fb"/><text y="-19.5" fill="#000" stroke="#000" stroke-width=".3">II</text></g><g transform="translate(256.6 375.9)"><path d="M0 0L-.9-7C-1.400-12-4.500-15-6.900-18.700A9.200 9.200 0 1 1 6.900-18.700C4.500-15 1.400-12 .9-7Z" fill="#a0e6ff"/><text y="-19.5" fill="#000" stroke="#000" stroke-width=".3">III</text></g><g transform="translate(343.6 376.4)"><path d="M0 0L-.9-7C-1.400-12-4.500-15-6.900-18.700A9.200 9.200 0 1 1 6.900-18.700C4.500-15 1.400-12 .9-7Z" fill="#a0e6ff"/><text y="-19.5" fill="#000" stroke="#000" stroke-width=".3">III</text></g><g transform="translate(355.1 376.4)"><path d="M0 0L-.9-7C-1.400-12-4.500-15-6.900-18.700A9.200 9.200 0 1 1 6.900-18.700C4.500-15 1.400-12 .9-7Z" fill="#bfc9fb"/><text y="-19.5" fill="#000" stroke="#000" stroke-width=".3">II</text></g><g transform="translate(385.8 376.8)"><path d="M0 0L-.9-7C-1.400-12-4.500-15-6.900-18.700A9.200 9.200 0 1 1 6.900-18.700C4.500-15 1.400-12 .9-7Z" fill="#a0e6ff"/><text y="-19.5" fill="#000" stroke="#000" stroke-width=".3">III</text></g><g transform="translate(326.1 377.5)"><path d="M0 0L-.9-7C-1.400-12-4.500-15-6.900-18.700A9.200 9.200 0 1 1 6.900-18.700C4.500-15 1.400-12 .9-7Z" fill="#bfc9fb"/><text y="-19.5" fill="#000" stroke="#000" stroke-width=".3">II</text><text y="-12" fill="#000" stroke="#000" stroke-width=".25" font-size="9">+</text></g><g transform="translate(369.1 378.5)"><path d="M0 0L-.9-7C-1.400-12-4.500-15-6.900-18.700A9.200 9.200 0 1 1 6.900-18.700C4.500-15 1.400-12 .9-7Z" fill="#bfc9fb"/><text y="-19.5" fill="#000" stroke="#000" stroke-width=".3">II</text></g><g transform="translate(381.3 378.7)"><path d="M0 0L-.9-7C-1.400-12-4.500-15-6.900-18.700A9.200 9.200 0 1 1 6.900-18.700C4.500-15 1.400-12 .9-7Z" fill="#bfc9fb"/><text y="-19.5" fill="#000" stroke="#000" stroke-width=".3">II</text></g><g transform="translate(364.5 380.7)"><path d="M0 0L-.9-7C-1.400-12-4.500-15-6.900-18.700A9.200 9.200 0 1 1 6.900-18.700C4.500-15 1.400-12 .9-7Z" fill="#bfc9fb"/><text y="-19.5" fill="#000" stroke="#000" stroke-width=".3">II</text></g><g transform="translate(242.9 382.4)"><path d="M0 0L-.9-7C-1.400-12-4.500-15-6.900-18.700A9.200 9.200 0 1 1 6.900-18.700C4.500-15 1.400-12 .9-7Z" fill="#80ffff"/><text y="-19.5" fill="#000" stroke="#000" stroke-width=".3">IV</text><text y="-12" fill="#000" stroke="#000" stroke-width=".25" font-size="9">+</text></g><g transform="translate(384.0 383.1)"><path d="M0 0L-.9-7C-1.400-12-4.500-15-6.900-18.700A9.200 9.200 0 1 1 6.900-18.700C4.500-15 1.400-12 .9-7Z" fill="#bfc9fb"/><text y="-19.5" fill="#000" stroke="#000" stroke-width=".3">II</text><text y="-12" fill="#000" stroke="#000" stroke-width=".25" font-size="9">+</text></g><g transform="translate(363.7 383.2)"><path d="M0 0L-.9-7C-1.400-12-4.500-15-6.900-18.700A9.200 9.200 0 1 1 6.900-18.700C4.500-15 1.400-12 .9-7Z" fill="#bfc9fb"/><text y="-19.5" fill="#000" stroke="#000" stroke-width=".3">II</text></g><g transform="translate(349.0 384.4)"><path d="M0 0L-.9-7C-1.400-12-4.500-15-6.900-18.700A9.200 9.200 0 1 1 6.900-18.700C4.500-15 1.400-12 .9-7Z" fill="#bfc9fb"/><text y="-19.5" fill="#000" stroke="#000" stroke-width=".3">II</text></g><g transform="translate(348.6 387.2)"><path d="M0 0L-.9-7C-1.400-12-4.500-15-6.900-18.700A9.200 9.200 0 1 1 6.900-18.700C4.500-15 1.400-12 .9-7Z" fill="#bfc9fb"/><text y="-19.5" fill="#000" stroke="#000" stroke-width=".3">II</text></g><g transform="translate(349.4 387.7)"><path d="M0 0L-.9-7C-1.400-12-4.500-15-6.900-18.700A9.200 9.200 0 1 1 6.900-18.700C4.500-15 1.400-12 .9-7Z" fill="#bfc9fb"/><text y="-19.5" fill="#000" stroke="#000" stroke-width=".3">II</text></g><g transform="translate(256.6 388.1)"><path d="M0 0L-.9-7C-1.400-12-4.500-15-6.900-18.700A9.200 9.200 0 1 1 6.900-18.700C4.500-15 1.400-12 .9-7Z" fill="#a0e6ff"/><text y="-19.5" fill="#000" stroke="#000" stroke-width=".3">III</text><text y="-12" fill="#000" stroke="#000" stroke-width=".25" font-size="9">+</text></g><g transform="translate(342.6 389.0)"><path d="M0 0L-.9-7C-1.400-12-4.500-15-6.900-18.700A9.200 9.200 0 1 1 6.900-18.700C4.500-15 1.400-12 .9-7Z" fill="#bfc9fb"/><text y="-19.5" fill="#000" stroke="#000" stroke-width=".3">II</text></g><g transform="translate(370.3 390.8)"><path d="M0 0L-.9-7C-1.400-12-4.500-15-6.900-18.700A9.200 9.200 0 1 1 6.900-18.700C4.500-15 1.400-12 .9-7Z" fill="#bfc9fb"/><text y="-19.5" fill="#000" stroke="#000" stroke-width=".3">II</text></g><g transform="translate(370.3 393.5)"><path d="M0 0L-.9-7C-1.400-12-4.500-15-6.900-18.700A9.200 9.200 0 1 1 6.900-18.700C4.500-15 1.400-12 .9-7Z" fill="#bfc9fb"/><text y="-19.5" fill="#000" stroke="#000" stroke-width=".3">II</text></g><g transform="translate(371.0 394.9)"><path d="M0 0L-.9-7C-1.400-12-4.500-15-6.900-18.700A9.200 9.200 0 1 1 6.900-18.700C4.500-15 1.400-12 .9-7Z" fill="#bfc9fb"/><text y="-19.5" fill="#000" stroke="#000" stroke-width=".3">II</text></g><g transform="translate(267.4 396.1)"><path d="M0 0L-.9-7C-1.400-12-4.500-15-6.900-18.700A9.200 9.200 0 1 1 6.900-18.700C4.500-15 1.400-12 .9-7Z" fill="#a0e6ff"/><text y="-19.5" fill="#000" stroke="#000" stroke-width=".3">III</text><text y="-12" fill="#000" stroke="#000" stroke-width=".25" font-size="9">+</text></g><g transform="translate(353.7 396.4)"><path d="M0 0L-.9-7C-1.400-12-4.500-15-6.900-18.700A9.200 9.200 0 1 1 6.900-18.700C4.500-15 1.400-12 .9-7Z" fill="#bfc9fb"/><text y="-19.5" fill="#000" stroke="#000" stroke-width=".3">II</text></g><g transform="translate(363.6 396.9)"><path d="M0 0L-.9-7C-1.400-12-4.500-15-6.900-18.700A9.200 9.200 0 1 1 6.900-18.700C4.500-15 1.400-12 .9-7Z" fill="#bfc9fb"/><text y="-19.5" fill="#000" stroke="#000" stroke-width=".3">II</text></g><g transform="translate(348.9 397.0)"><path d="M0 0L-.9-7C-1.400-12-4.500-15-6.900-18.700A9.200 9.200 0 1 1 6.900-18.700C4.500-15 1.400-12 .9-7Z" fill="#a0e6ff"/><text y="-19.5" fill="#000" stroke="#000" stroke-width=".3">III</text></g><g transform="translate(350.4 397.8)"><path d="M0 0L-.9-7C-1.400-12-4.500-15-6.900-18.700A9.200 9.200 0 1 1 6.900-18.700C4.500-15 1.400-12 .9-7Z" fill="#a0e6ff"/><text y="-19.5" fill="#000" stroke="#000" stroke-width=".3">III</text></g><g transform="translate(506.8 406.4)"><path d="M0 0L-.9-7C-1.400-12-4.500-15-6.900-18.700A9.200 9.200 0 1 1 6.900-18.700C4.500-15 1.400-12 .9-7Z" fill="#bfc9fb"/><text y="-19.5" fill="#000" stroke="#000" stroke-width=".3">II</text></g><g transform="translate(300.3 407.0)"><path d="M0 0L-.9-7C-1.400-12-4.500-15-6.900-18.700A9.200 9.200 0 1 1 6.900-18.700C4.500-15 1.400-12 .9-7Z" fill="#a0e6ff"/><text y="-19.5" fill="#000" stroke="#000" stroke-width=".3">III</text><text y="-12" fill="#000" stroke="#000" stroke-width=".25" font-size="9">+</text></g><g transform="translate(256.6 407.6)"><path d="M0 0L-.9-7C-1.400-12-4.500-15-6.900-18.700A9.200 9.200 0 1 1 6.900-18.700C4.500-15 1.400-12 .9-7Z" fill="#a0e6ff"/><text y="-19.5" fill="#000" stroke="#000" stroke-width=".3">III</text></g><g transform="translate(340.0 410.1)"><path d="M0 0L-.9-7C-1.400-12-4.500-15-6.900-18.700A9.200 9.200 0 1 1 6.900-18.700C4.500-15 1.400-12 .9-7Z" fill="#bfc9fb"/><text y="-19.5" fill="#000" stroke="#000" stroke-width=".3">II</text><text y="-12" fill="#000" stroke="#000" stroke-width=".25" font-size="9">+</text></g><g transform="translate(440.3 410.5)"><path d="M0 0L-.9-7C-1.400-12-4.500-15-6.900-18.700A9.200 9.200 0 1 1 6.900-18.700C4.500-15 1.400-12 .9-7Z" fill="#bfc9fb"/><text y="-19.5" fill="#000" stroke="#000" stroke-width=".3">II</text></g><g transform="translate(343.0 411.0)"><path d="M0 0L-.9-7C-1.400-12-4.500-15-6.900-18.700A9.200 9.200 0 1 1 6.900-18.700C4.500-15 1.400-12 .9-7Z" fill="#a0e6ff"/><text y="-19.5" fill="#000" stroke="#000" stroke-width=".3">III</text></g><g transform="translate(257.3 412.0)"><path d="M0 0L-.9-7C-1.400-12-4.500-15-6.900-18.700A9.200 9.200 0 1 1 6.900-18.700C4.500-15 1.400-12 .9-7Z" fill="#bfc9fb"/><text y="-19.5" fill="#000" stroke="#000" stroke-width=".3">II</text></g><g transform="translate(276.1 412.0)"><path d="M0 0L-.9-7C-1.400-12-4.500-15-6.900-18.700A9.200 9.200 0 1 1 6.900-18.700C4.500-15 1.400-12 .9-7Z" fill="#80ffff"/><text y="-19.5" fill="#000" stroke="#000" stroke-width=".3">IV</text></g><g transform="translate(345.8 412.3)"><path d="M0 0L-.9-7C-1.400-12-4.500-15-6.900-18.700A9.200 9.200 0 1 1 6.900-18.700C4.500-15 1.400-12 .9-7Z" fill="#a0e6ff"/><text y="-19.5" fill="#000" stroke="#000" stroke-width=".3">III</text></g><g transform="translate(358.0 413.7)"><path d="M0 0L-.9-7C-1.400-12-4.500-15-6.900-18.700A9.200 9.200 0 1 1 6.900-18.700C4.500-15 1.400-12 .9-7Z" fill="#bfc9fb"/><text y="-19.5" fill="#000" stroke="#000" stroke-width=".3">II</text><text y="-12" fill="#000" stroke="#000" stroke-width=".25" font-size="9">+</text></g><g transform="translate(439.6 415.1)"><path d="M0 0L-.9-7C-1.400-12-4.500-15-6.900-18.700A9.200 9.200 0 1 1 6.900-18.700C4.500-15 1.400-12 .9-7Z" fill="#bfc9fb"/><text y="-19.5" fill="#000" stroke="#000" stroke-width=".3">II</text></g><g transform="translate(417.9 416.9)"><path d="M0 0L-.9-7C-1.400-12-4.500-15-6.900-18.700A9.200 9.200 0 1 1 6.900-18.700C4.500-15 1.400-12 .9-7Z" fill="#bfc9fb"/><text y="-19.5" fill="#000" stroke="#000" stroke-width=".3">II</text></g><g transform="translate(258.0 420.6)"><path d="M0 0L-.9-7C-1.400-12-4.500-15-6.900-18.700A9.200 9.200 0 1 1 6.900-18.700C4.500-15 1.400-12 .9-7Z" fill="#bfc9fb"/><text y="-19.5" fill="#000" stroke="#000" stroke-width=".3">II</text></g><g transform="translate(484.0 421.4)"><path d="M0 0L-.9-7C-1.400-12-4.500-15-6.900-18.700A9.200 9.200 0 1 1 6.900-18.700C4.500-15 1.400-12 .9-7Z" fill="#bfc9fb"/><text y="-19.5" fill="#000" stroke="#000" stroke-width=".3">II</text></g><g transform="translate(384.0 425.2)"><path d="M0 0L-.9-7C-1.400-12-4.500-15-6.900-18.700A9.200 9.200 0 1 1 6.900-18.700C4.500-15 1.400-12 .9-7Z" fill="#bfc9fb"/><text y="-19.5" fill="#000" stroke="#000" stroke-width=".3">II</text></g><g transform="translate(348.3 426.8)"><path d="M0 0L-.9-7C-1.400-12-4.500-15-6.900-18.700A9.200 9.200 0 1 1 6.900-18.700C4.500-15 1.400-12 .9-7Z" fill="#bfc9fb"/><text y="-19.5" fill="#000" stroke="#000" stroke-width=".3">II</text><text y="-12" fill="#000" stroke="#000" stroke-width=".25" font-size="9">+</text></g><g transform="translate(348.2 427.0)"><path d="M0 0L-.9-7C-1.400-12-4.500-15-6.900-18.700A9.200 9.200 0 1 1 6.900-18.700C4.500-15 1.400-12 .9-7Z" fill="#bfc9fb"/><text y="-19.5" fill="#000" stroke="#000" stroke-width=".3">II</text></g><g transform="translate(386.8 428.2)"><path d="M0 0L-.9-7C-1.400-12-4.500-15-6.900-18.700A9.200 9.200 0 1 1 6.900-18.700C4.500-15 1.400-12 .9-7Z" fill="#bfc9fb"/><text y="-19.5" fill="#000" stroke="#000" stroke-width=".3">II</text></g><g transform="translate(275.5 428.5)"><path d="M0 0L-.9-7C-1.400-12-4.500-15-6.900-18.700A9.200 9.200 0 1 1 6.900-18.700C4.500-15 1.400-12 .9-7Z" fill="#bfc9fb"/><text y="-19.5" fill="#000" stroke="#000" stroke-width=".3">II</text></g><g transform="translate(346.8 429.6)"><path d="M0 0L-.9-7C-1.400-12-4.500-15-6.900-18.700A9.200 9.200 0 1 1 6.900-18.700C4.500-15 1.400-12 .9-7Z" fill="#bfc9fb"/><text y="-19.5" fill="#000" stroke="#000" stroke-width=".3">II</text></g><g transform="translate(385.5 429.6)"><path d="M0 0L-.9-7C-1.400-12-4.500-15-6.900-18.700A9.200 9.200 0 1 1 6.900-18.700C4.500-15 1.400-12 .9-7Z" fill="#bfc9fb"/><text y="-19.5" fill="#000" stroke="#000" stroke-width=".3">II</text></g><g transform="translate(349.4 430.4)"><path d="M0 0L-.9-7C-1.400-12-4.500-15-6.900-18.700A9.200 9.200 0 1 1 6.900-18.700C4.500-15 1.400-12 .9-7Z" fill="#bfc9fb"/><text y="-19.5" fill="#000" stroke="#000" stroke-width=".3">II</text></g><g transform="translate(382.5 431.5)"><path d="M0 0L-.9-7C-1.400-12-4.500-15-6.900-18.700A9.200 9.200 0 1 1 6.900-18.700C4.500-15 1.400-12 .9-7Z" fill="#bfc9fb"/><text y="-19.5" fill="#000" stroke="#000" stroke-width=".3">II</text></g><g transform="translate(445.9 431.5)"><path d="M0 0L-.9-7C-1.400-12-4.500-15-6.900-18.700A9.200 9.200 0 1 1 6.900-18.700C4.500-15 1.400-12 .9-7Z" fill="#bfc9fb"/><text y="-19.5" fill="#000" stroke="#000" stroke-width=".3">II</text></g><g transform="translate(335.7 431.6)"><path d="M0 0L-.9-7C-1.400-12-4.500-15-6.900-18.700A9.200 9.200 0 1 1 6.900-18.700C4.500-15 1.400-12 .9-7Z" fill="#bfc9fb"/><text y="-19.5" fill="#000" stroke="#000" stroke-width=".3">II</text></g><g transform="translate(354.4 431.7)"><path d="M0 0L-.9-7C-1.400-12-4.500-15-6.900-18.700A9.200 9.200 0 1 1 6.900-18.700C4.500-15 1.400-12 .9-7Z" fill="#bfc9fb"/><text y="-19.5" fill="#000" stroke="#000" stroke-width=".3">II</text></g><g transform="translate(383.8 431.7)"><path d="M0 0L-.9-7C-1.400-12-4.500-15-6.900-18.700A9.200 9.200 0 1 1 6.900-18.700C4.500-15 1.400-12 .9-7Z" fill="#bfc9fb"/><text y="-19.5" fill="#000" stroke="#000" stroke-width=".3">II</text><text y="-12" fill="#000" stroke="#000" stroke-width=".25" font-size="9">+</text></g><g transform="translate(258.0 432.5)"><path d="M0 0L-.9-7C-1.400-12-4.500-15-6.900-18.700A9.200 9.200 0 1 1 6.900-18.700C4.500-15 1.400-12 .9-7Z" fill="#bfc9fb"/><text y="-19.5" fill="#000" stroke="#000" stroke-width=".3">II</text></g><g transform="translate(387.6 433.2)"><path d="M0 0L-.9-7C-1.400-12-4.500-15-6.900-18.700A9.200 9.200 0 1 1 6.900-18.700C4.500-15 1.400-12 .9-7Z" fill="#bfc9fb"/><text y="-19.5" fill="#000" stroke="#000" stroke-width=".3">II</text></g><g transform="translate(325.9 434.5)"><path d="M0 0L-.9-7C-1.400-12-4.500-15-6.900-18.700A9.200 9.200 0 1 1 6.900-18.700C4.500-15 1.400-12 .9-7Z" fill="#bfc9fb"/><text y="-19.5" fill="#000" stroke="#000" stroke-width=".3">II</text></g><g transform="translate(357.0 434.5)"><path d="M0 0L-.9-7C-1.400-12-4.500-15-6.900-18.700A9.200 9.200 0 1 1 6.900-18.700C4.500-15 1.400-12 .9-7Z" fill="#bfc9fb"/><text y="-19.5" fill="#000" stroke="#000" stroke-width=".3">II</text></g><g transform="translate(388.8 434.8)"><path d="M0 0L-.9-7C-1.400-12-4.500-15-6.900-18.700A9.200 9.200 0 1 1 6.900-18.700C4.500-15 1.400-12 .9-7Z" fill="#bfc9fb"/><text y="-19.5" fill="#000" stroke="#000" stroke-width=".3">II</text></g><g transform="translate(370.6 434.9)"><path d="M0 0L-.9-7C-1.400-12-4.500-15-6.900-18.700A9.200 9.200 0 1 1 6.900-18.700C4.500-15 1.400-12 .9-7Z" fill="#bfc9fb"/><text y="-19.5" fill="#000" stroke="#000" stroke-width=".3">II</text></g><g transform="translate(368.4 435.3)"><path d="M0 0L-.9-7C-1.400-12-4.500-15-6.900-18.700A9.200 9.200 0 1 1 6.900-18.700C4.500-15 1.400-12 .9-7Z" fill="#bfc9fb"/><text y="-19.5" fill="#000" stroke="#000" stroke-width=".3">II</text></g><g transform="translate(369.1 436.0)"><path d="M0 0L-.9-7C-1.400-12-4.500-15-6.900-18.700A9.200 9.200 0 1 1 6.900-18.700C4.500-15 1.400-12 .9-7Z" fill="#bfc9fb"/><text y="-19.5" fill="#000" stroke="#000" stroke-width=".3">II</text></g><g transform="translate(394.8 436.4)"><path d="M0 0L-.9-7C-1.400-12-4.500-15-6.900-18.700A9.200 9.200 0 1 1 6.900-18.700C4.500-15 1.400-12 .9-7Z" fill="#bfc9fb"/><text y="-19.5" fill="#000" stroke="#000" stroke-width=".3">II</text></g><g transform="translate(333.3 436.6)"><path d="M0 0L-.9-7C-1.400-12-4.500-15-6.900-18.700A9.200 9.200 0 1 1 6.900-18.700C4.500-15 1.400-12 .9-7Z" fill="#bfc9fb"/><text y="-19.5" fill="#000" stroke="#000" stroke-width=".3">II</text></g><g transform="translate(341.1 440.1)"><path d="M0 0L-.9-7C-1.400-12-4.500-15-6.900-18.700A9.200 9.200 0 1 1 6.900-18.700C4.500-15 1.400-12 .9-7Z" fill="#bfc9fb"/><text y="-19.5" fill="#000" stroke="#000" stroke-width=".3">II</text></g><g transform="translate(371.5 441.9)"><path d="M0 0L-.9-7C-1.400-12-4.500-15-6.900-18.700A9.200 9.200 0 1 1 6.900-18.700C4.500-15 1.400-12 .9-7Z" fill="#a0e6ff"/><text y="-19.5" fill="#000" stroke="#000" stroke-width=".3">III</text><text y="-12" fill="#000" stroke="#000" stroke-width=".25" font-size="9">+</text></g><g transform="translate(375.4 442.7)"><path d="M0 0L-.9-7C-1.400-12-4.500-15-6.900-18.700A9.200 9.200 0 1 1 6.900-18.700C4.500-15 1.400-12 .9-7Z" fill="#a0e6ff"/><text y="-19.5" fill="#000" stroke="#000" stroke-width=".3">III</text><text y="-12" fill="#000" stroke="#000" stroke-width=".25" font-size="9">+</text></g><g transform="translate(377.8 443.1)"><path d="M0 0L-.9-7C-1.400-12-4.500-15-6.900-18.700A9.200 9.200 0 1 1 6.900-18.700C4.500-15 1.400-12 .9-7Z" fill="#bfc9fb"/><text y="-19.5" fill="#000" stroke="#000" stroke-width=".3">II</text></g><g transform="translate(396.3 443.3)"><path d="M0 0L-.9-7C-1.400-12-4.500-15-6.900-18.700A9.200 9.200 0 1 1 6.900-18.700C4.500-15 1.400-12 .9-7Z" fill="#bfc9fb"/><text y="-19.5" fill="#000" stroke="#000" stroke-width=".3">II</text></g><g transform="translate(385.1 443.4)"><path d="M0 0L-.9-7C-1.400-12-4.500-15-6.900-18.700A9.200 9.200 0 1 1 6.900-18.700C4.500-15 1.400-12 .9-7Z" fill="#bfc9fb"/><text y="-19.5" fill="#000" stroke="#000" stroke-width=".3">II</text></g><g transform="translate(400.3 444.1)"><path d="M0 0L-.9-7C-1.400-12-4.500-15-6.900-18.700A9.200 9.200 0 1 1 6.900-18.700C4.500-15 1.400-12 .9-7Z" fill="#bfc9fb"/><text y="-19.5" fill="#000" stroke="#000" stroke-width=".3">II</text></g><g transform="translate(267.8 444.3)"><path d="M0 0L-.9-7C-1.400-12-4.500-15-6.900-18.700A9.200 9.200 0 1 1 6.900-18.700C4.500-15 1.400-12 .9-7Z" fill="#bfc9fb"/><text y="-19.5" fill="#000" stroke="#000" stroke-width=".3">II</text></g><g transform="translate(257.0 445.0)"><path d="M0 0L-.9-7C-1.400-12-4.500-15-6.900-18.700A9.200 9.200 0 1 1 6.900-18.700C4.500-15 1.400-12 .9-7Z" fill="#a0e6ff"/><text y="-19.5" fill="#000" stroke="#000" stroke-width=".3">III</text></g><g transform="translate(393.3 446.7)"><path d="M0 0L-.9-7C-1.400-12-4.500-15-6.900-18.700A9.200 9.200 0 1 1 6.900-18.700C4.500-15 1.400-12 .9-7Z" fill="#bfc9fb"/><text y="-19.5" fill="#000" stroke="#000" stroke-width=".3">II</text></g><g transform="translate(336.6 447.6)"><path d="M0 0L-.9-7C-1.400-12-4.500-15-6.900-18.700A9.200 9.200 0 1 1 6.900-18.700C4.500-15 1.400-12 .9-7Z" fill="#bfc9fb"/><text y="-19.5" fill="#000" stroke="#000" stroke-width=".3">II</text></g><g transform="translate(330.8 447.8)"><path d="M0 0L-.9-7C-1.400-12-4.500-15-6.900-18.700A9.200 9.200 0 1 1 6.900-18.700C4.500-15 1.400-12 .9-7Z" fill="#bfc9fb"/><text y="-19.5" fill="#000" stroke="#000" stroke-width=".3">II</text></g><g transform="translate(325.8 448.3)"><path d="M0 0L-.9-7C-1.400-12-4.500-15-6.900-18.700A9.200 9.200 0 1 1 6.900-18.700C4.500-15 1.400-12 .9-7Z" fill="#bfc9fb"/><text y="-19.5" fill="#000" stroke="#000" stroke-width=".3">II</text></g><g transform="translate(387.8 448.4)"><path d="M0 0L-.9-7C-1.400-12-4.500-15-6.900-18.700A9.200 9.200 0 1 1 6.900-18.700C4.500-15 1.400-12 .9-7Z" fill="#bfc9fb"/><text y="-19.5" fill="#000" stroke="#000" stroke-width=".3">II</text><text y="-12" fill="#000" stroke="#000" stroke-width=".25" font-size="9">+</text></g><g transform="translate(367.3 448.8)"><path d="M0 0L-.9-7C-1.400-12-4.500-15-6.900-18.700A9.200 9.200 0 1 1 6.900-18.700C4.500-15 1.400-12 .9-7Z" fill="#bfc9fb"/><text y="-19.5" fill="#000" stroke="#000" stroke-width=".3">II</text></g><g transform="translate(343.6 449.1)"><path d="M0 0L-.9-7C-1.400-12-4.500-15-6.900-18.700A9.200 9.200 0 1 1 6.900-18.700C4.500-15 1.400-12 .9-7Z" fill="#bfc9fb"/><text y="-19.5" fill="#000" stroke="#000" stroke-width=".3">II</text></g><g transform="translate(348.9 449.4)"><path d="M0 0L-.9-7C-1.400-12-4.500-15-6.900-18.700A9.200 9.200 0 1 1 6.900-18.700C4.500-15 1.400-12 .9-7Z" fill="#bfc9fb"/><text y="-19.5" fill="#000" stroke="#000" stroke-width=".3">II</text><text y="-12" fill="#000" stroke="#000" stroke-width=".25" font-size="9">+</text></g><g transform="translate(333.7 449.6)"><path d="M0 0L-.9-7C-1.400-12-4.500-15-6.900-18.700A9.200 9.200 0 1 1 6.900-18.700C4.500-15 1.400-12 .9-7Z" fill="#bfc9fb"/><text y="-19.5" fill="#000" stroke="#000" stroke-width=".3">II</text></g><g transform="translate(328.0 449.8)"><path d="M0 0L-.9-7C-1.400-12-4.500-15-6.900-18.700A9.200 9.200 0 1 1 6.900-18.700C4.500-15 1.400-12 .9-7Z" fill="#a0e6ff"/><text y="-19.5" fill="#000" stroke="#000" stroke-width=".3">III</text></g><g transform="translate(342.2 449.9)"><path d="M0 0L-.9-7C-1.400-12-4.500-15-6.900-18.700A9.200 9.200 0 1 1 6.900-18.700C4.500-15 1.400-12 .9-7Z" fill="#bfc9fb"/><text y="-19.5" fill="#000" stroke="#000" stroke-width=".3">II</text></g><g transform="translate(330.7 450.2)"><path d="M0 0L-.9-7C-1.400-12-4.500-15-6.900-18.700A9.200 9.200 0 1 1 6.900-18.700C4.500-15 1.400-12 .9-7Z" fill="#bfc9fb"/><text y="-19.5" fill="#000" stroke="#000" stroke-width=".3">II</text></g><g transform="translate(334.6 450.3)"><path d="M0 0L-.9-7C-1.400-12-4.500-15-6.900-18.700A9.200 9.200 0 1 1 6.900-18.700C4.500-15 1.400-12 .9-7Z" fill="#a0e6ff"/><text y="-19.5" fill="#000" stroke="#000" stroke-width=".3">III</text></g><g transform="translate(337.5 451.0)"><path d="M0 0L-.9-7C-1.400-12-4.500-15-6.900-18.700A9.200 9.200 0 1 1 6.900-18.700C4.500-15 1.400-12 .9-7Z" fill="#bfc9fb"/><text y="-19.5" fill="#000" stroke="#000" stroke-width=".3">II</text></g><g transform="translate(335.7 451.1)"><path d="M0 0L-.9-7C-1.400-12-4.500-15-6.900-18.700A9.200 9.200 0 1 1 6.900-18.700C4.500-15 1.400-12 .9-7Z" fill="#bfc9fb"/><text y="-19.5" fill="#000" stroke="#000" stroke-width=".3">II</text></g><g transform="translate(371.9 451.5)"><path d="M0 0L-.9-7C-1.400-12-4.500-15-6.900-18.700A9.200 9.200 0 1 1 6.900-18.700C4.500-15 1.400-12 .9-7Z" fill="#bfc9fb"/><text y="-19.5" fill="#000" stroke="#000" stroke-width=".3">II</text></g><g transform="translate(334.4 451.9)"><path d="M0 0L-.9-7C-1.400-12-4.500-15-6.900-18.700A9.200 9.200 0 1 1 6.900-18.700C4.500-15 1.400-12 .9-7Z" fill="#a0e6ff"/><text y="-19.5" fill="#000" stroke="#000" stroke-width=".3">III</text></g><g transform="translate(337.1 452.0)"><path d="M0 0L-.9-7C-1.400-12-4.500-15-6.900-18.700A9.200 9.200 0 1 1 6.900-18.700C4.500-15 1.400-12 .9-7Z" fill="#bfc9fb"/><text y="-19.5" fill="#000" stroke="#000" stroke-width=".3">II</text></g><g transform="translate(334.4 452.3)"><path d="M0 0L-.9-7C-1.400-12-4.500-15-6.900-18.700A9.200 9.200 0 1 1 6.900-18.700C4.500-15 1.400-12 .9-7Z" fill="#bfc9fb"/><text y="-19.5" fill="#000" stroke="#000" stroke-width=".3">II</text></g><g transform="translate(336.5 452.3)"><path d="M0 0L-.9-7C-1.400-12-4.500-15-6.900-18.700A9.200 9.200 0 1 1 6.900-18.700C4.500-15 1.400-12 .9-7Z" fill="#a0e6ff"/><text y="-19.5" fill="#000" stroke="#000" stroke-width=".3">III</text><text y="-12" fill="#000" stroke="#000" stroke-width=".25" font-size="9">+</text></g><g transform="translate(321.2 454.2)"><path d="M0 0L-.9-7C-1.400-12-4.500-15-6.900-18.700A9.200 9.200 0 1 1 6.900-18.700C4.500-15 1.400-12 .9-7Z" fill="#bfc9fb"/><text y="-19.5" fill="#000" stroke="#000" stroke-width=".3">II</text></g><g transform="translate(493.0 454.8)"><path d="M0 0L-.9-7C-1.400-12-4.500-15-6.900-18.700A9.200 9.200 0 1 1 6.900-18.700C4.500-15 1.400-12 .9-7Z" fill="#bfc9fb"/><text y="-19.5" fill="#000" stroke="#000" stroke-width=".3">II</text></g><g transform="translate(340.7 454.9)"><path d="M0 0L-.9-7C-1.400-12-4.500-15-6.900-18.700A9.200 9.200 0 1 1 6.900-18.700C4.500-15 1.400-12 .9-7Z" fill="#bfc9fb"/><text y="-19.5" fill="#000" stroke="#000" stroke-width=".3">II</text></g><g transform="translate(317.3 455.1)"><path d="M0 0L-.9-7C-1.400-12-4.500-15-6.900-18.700A9.200 9.200 0 1 1 6.900-18.700C4.500-15 1.400-12 .9-7Z" fill="#bfc9fb"/><text y="-19.5" fill="#000" stroke="#000" stroke-width=".3">II</text></g><g transform="translate(346.9 455.3)"><path d="M0 0L-.9-7C-1.400-12-4.500-15-6.900-18.700A9.200 9.200 0 1 1 6.900-18.700C4.500-15 1.400-12 .9-7Z" fill="#a0e6ff"/><text y="-19.5" fill="#000" stroke="#000" stroke-width=".3">III</text></g><g transform="translate(342.1 455.8)"><path d="M0 0L-.9-7C-1.400-12-4.500-15-6.900-18.700A9.200 9.200 0 1 1 6.900-18.700C4.500-15 1.400-12 .9-7Z" fill="#bfc9fb"/><text y="-19.5" fill="#000" stroke="#000" stroke-width=".3">II</text></g><g transform="translate(291.6 455.9)"><path d="M0 0L-.9-7C-1.400-12-4.500-15-6.900-18.700A9.200 9.200 0 1 1 6.900-18.700C4.500-15 1.400-12 .9-7Z" fill="#a0e6ff"/><text y="-19.5" fill="#000" stroke="#000" stroke-width=".3">III</text></g><g transform="translate(353.0 456.0)"><path d="M0 0L-.9-7C-1.400-12-4.500-15-6.900-18.700A9.200 9.200 0 1 1 6.900-18.700C4.500-15 1.400-12 .9-7Z" fill="#bfc9fb"/><text y="-19.5" fill="#000" stroke="#000" stroke-width=".3">II</text></g><g transform="translate(325.7 456.3)"><path d="M0 0L-.9-7C-1.400-12-4.500-15-6.900-18.700A9.200 9.200 0 1 1 6.900-18.700C4.500-15 1.400-12 .9-7Z" fill="#bfc9fb"/><text y="-19.5" fill="#000" stroke="#000" stroke-width=".3">II</text></g><g transform="translate(345.4 456.3)"><path d="M0 0L-.9-7C-1.400-12-4.500-15-6.900-18.700A9.200 9.200 0 1 1 6.900-18.700C4.500-15 1.400-12 .9-7Z" fill="#a0e6ff"/><text y="-19.5" fill="#000" stroke="#000" stroke-width=".3">III</text></g><g transform="translate(331.2 456.7)"><path d="M0 0L-.9-7C-1.400-12-4.500-15-6.900-18.700A9.200 9.200 0 1 1 6.900-18.700C4.500-15 1.400-12 .9-7Z" fill="#bfc9fb"/><text y="-19.5" fill="#000" stroke="#000" stroke-width=".3">II</text><text y="-12" fill="#000" stroke="#000" stroke-width=".25" font-size="9">+</text></g><g transform="translate(345.9 457.1)"><path d="M0 0L-.9-7C-1.400-12-4.500-15-6.900-18.700A9.200 9.200 0 1 1 6.900-18.700C4.500-15 1.400-12 .9-7Z" fill="#bfc9fb"/><text y="-19.5" fill="#000" stroke="#000" stroke-width=".3">II</text></g><g transform="translate(272.1 457.3)"><path d="M0 0L-.9-7C-1.400-12-4.500-15-6.900-18.700A9.200 9.200 0 1 1 6.900-18.700C4.500-15 1.400-12 .9-7Z" fill="#bfc9fb"/><text y="-19.5" fill="#000" stroke="#000" stroke-width=".3">II</text><text y="-12" fill="#000" stroke="#000" stroke-width=".25" font-size="9">+</text></g><g transform="translate(294.5 457.3)"><path d="M0 0L-.9-7C-1.400-12-4.500-15-6.900-18.700A9.200 9.200 0 1 1 6.900-18.700C4.500-15 1.400-12 .9-7Z" fill="#bfc9fb"/><text y="-19.5" fill="#000" stroke="#000" stroke-width=".3">II</text></g><g transform="translate(324.9 457.6)"><path d="M0 0L-.9-7C-1.400-12-4.500-15-6.900-18.700A9.200 9.200 0 1 1 6.900-18.700C4.500-15 1.400-12 .9-7Z" fill="#bfc9fb"/><text y="-19.5" fill="#000" stroke="#000" stroke-width=".3">II</text></g><g transform="translate(326.5 457.6)"><path d="M0 0L-.9-7C-1.400-12-4.500-15-6.900-18.700A9.200 9.200 0 1 1 6.900-18.700C4.500-15 1.400-12 .9-7Z" fill="#bfc9fb"/><text y="-19.5" fill="#000" stroke="#000" stroke-width=".3">II</text></g><g transform="translate(288.0 458.0)"><path d="M0 0L-.9-7C-1.400-12-4.500-15-6.900-18.700A9.200 9.200 0 1 1 6.900-18.700C4.500-15 1.400-12 .9-7Z" fill="#bfc9fb"/><text y="-19.5" fill="#000" stroke="#000" stroke-width=".3">II</text></g><g transform="translate(251.2 458.8)"><path d="M0 0L-.9-7C-1.400-12-4.500-15-6.900-18.700A9.200 9.200 0 1 1 6.900-18.700C4.500-15 1.400-12 .9-7Z" fill="#bfc9fb"/><text y="-19.5" fill="#000" stroke="#000" stroke-width=".3">II</text><text y="-12" fill="#000" stroke="#000" stroke-width=".25" font-size="9">+</text></g><g transform="translate(261.3 458.8)"><path d="M0 0L-.9-7C-1.400-12-4.500-15-6.900-18.700A9.200 9.200 0 1 1 6.900-18.700C4.500-15 1.400-12 .9-7Z" fill="#bfc9fb"/><text y="-19.5" fill="#000" stroke="#000" stroke-width=".3">II</text></g><g transform="translate(338.2 458.9)"><path d="M0 0L-.9-7C-1.400-12-4.500-15-6.900-18.700A9.200 9.200 0 1 1 6.900-18.700C4.500-15 1.400-12 .9-7Z" fill="#bfc9fb"/><text y="-19.5" fill="#000" stroke="#000" stroke-width=".3">II</text></g><g transform="translate(300.3 463.3)"><path d="M0 0L-.9-7C-1.400-12-4.500-15-6.900-18.700A9.200 9.200 0 1 1 6.900-18.700C4.500-15 1.400-12 .9-7Z" fill="#a0e6ff"/><text y="-19.5" fill="#000" stroke="#000" stroke-width=".3">III</text></g><g transform="translate(303.0 463.5)"><path d="M0 0L-.9-7C-1.400-12-4.500-15-6.900-18.700A9.200 9.200 0 1 1 6.900-18.700C4.500-15 1.400-12 .9-7Z" fill="#bfc9fb"/><text y="-19.5" fill="#000" stroke="#000" stroke-width=".3">II</text></g><g transform="translate(358.0 464.3)"><path d="M0 0L-.9-7C-1.400-12-4.500-15-6.900-18.700A9.200 9.200 0 1 1 6.900-18.700C4.500-15 1.400-12 .9-7Z" fill="#bfc9fb"/><text y="-19.5" fill="#000" stroke="#000" stroke-width=".3">II</text></g><g transform="translate(391.2 476.1)"><path d="M0 0L-.9-7C-1.400-12-4.500-15-6.900-18.700A9.200 9.200 0 1 1 6.900-18.700C4.500-15 1.400-12 .9-7Z" fill="#bfc9fb"/><text y="-19.5" fill="#000" stroke="#000" stroke-width=".3">II</text><text y="-12" fill="#000" stroke="#000" stroke-width=".25" font-size="9">+</text></g><g transform="translate(364.2 476.6)"><path d="M0 0L-.9-7C-1.400-12-4.500-15-6.900-18.700A9.200 9.200 0 1 1 6.900-18.700C4.500-15 1.400-12 .9-7Z" fill="#bfc9fb"/><text y="-19.5" fill="#000" stroke="#000" stroke-width=".3">II</text></g><g transform="translate(393.8 476.6)"><path d="M0 0L-.9-7C-1.400-12-4.500-15-6.900-18.700A9.200 9.200 0 1 1 6.900-18.700C4.500-15 1.400-12 .9-7Z" fill="#bfc9fb"/><text y="-19.5" fill="#000" stroke="#000" stroke-width=".3">II</text></g><g transform="translate(378.6 478.8)"><path d="M0 0L-.9-7C-1.400-12-4.500-15-6.900-18.700A9.200 9.200 0 1 1 6.900-18.700C4.500-15 1.400-12 .9-7Z" fill="#bfc9fb"/><text y="-19.5" fill="#000" stroke="#000" stroke-width=".3">II</text></g><g transform="translate(372.3 479.8)"><path d="M0 0L-.9-7C-1.400-12-4.500-15-6.900-18.700A9.200 9.200 0 1 1 6.900-18.700C4.500-15 1.400-12 .9-7Z" fill="#bfc9fb"/><text y="-19.5" fill="#000" stroke="#000" stroke-width=".3">II</text><text y="-12" fill="#000" stroke="#000" stroke-width=".25" font-size="9">+</text></g><g transform="translate(459.5 480.2)"><path d="M0 0L-.9-7C-1.400-12-4.500-15-6.900-18.700A9.200 9.200 0 1 1 6.900-18.700C4.500-15 1.400-12 .9-7Z" fill="#bfc9fb"/><text y="-19.5" fill="#000" stroke="#000" stroke-width=".3">II</text><text y="-12" fill="#000" stroke="#000" stroke-width=".25" font-size="9">+</text></g><g transform="translate(463.8 480.9)"><path d="M0 0L-.9-7C-1.400-12-4.500-15-6.900-18.700A9.200 9.200 0 1 1 6.900-18.700C4.500-15 1.400-12 .9-7Z" fill="#bfc9fb"/><text y="-19.5" fill="#000" stroke="#000" stroke-width=".3">II</text></g><g transform="translate(368.0 481.0)"><path d="M0 0L-.9-7C-1.400-12-4.500-15-6.900-18.700A9.200 9.200 0 1 1 6.900-18.700C4.500-15 1.400-12 .9-7Z" fill="#bfc9fb"/><text y="-19.5" fill="#000" stroke="#000" stroke-width=".3">II</text></g><g transform="translate(371.5 482.7)"><path d="M0 0L-.9-7C-1.400-12-4.500-15-6.900-18.700A9.200 9.200 0 1 1 6.900-18.700C4.500-15 1.400-12 .9-7Z" fill="#bfc9fb"/><text y="-19.5" fill="#000" stroke="#000" stroke-width=".3">II</text><text y="-12" fill="#000" stroke="#000" stroke-width=".25" font-size="9">+</text></g><g transform="translate(364.4 482.8)"><path d="M0 0L-.9-7C-1.400-12-4.500-15-6.900-18.700A9.200 9.200 0 1 1 6.900-18.700C4.500-15 1.400-12 .9-7Z" fill="#bfc9fb"/><text y="-19.5" fill="#000" stroke="#000" stroke-width=".3">II</text></g><g transform="translate(454.4 483.3)"><path d="M0 0L-.9-7C-1.400-12-4.500-15-6.900-18.700A9.200 9.200 0 1 1 6.900-18.700C4.500-15 1.400-12 .9-7Z" fill="#bfc9fb"/><text y="-19.5" fill="#000" stroke="#000" stroke-width=".3">II</text></g><g transform="translate(392.7 484.3)"><path d="M0 0L-.9-7C-1.400-12-4.500-15-6.900-18.700A9.200 9.200 0 1 1 6.900-18.700C4.500-15 1.400-12 .9-7Z" fill="#bfc9fb"/><text y="-19.5" fill="#000" stroke="#000" stroke-width=".3">II</text></g><g transform="translate(365.6 484.5)"><path d="M0 0L-.9-7C-1.400-12-4.500-15-6.900-18.700A9.200 9.200 0 1 1 6.900-18.700C4.500-15 1.400-12 .9-7Z" fill="#bfc9fb"/><text y="-19.5" fill="#000" stroke="#000" stroke-width=".3">II</text></g><g transform="translate(369.2 485.0)"><path d="M0 0L-.9-7C-1.400-12-4.500-15-6.900-18.700A9.200 9.200 0 1 1 6.900-18.700C4.500-15 1.400-12 .9-7Z" fill="#bfc9fb"/><text y="-19.5" fill="#000" stroke="#000" stroke-width=".3">II</text><text y="-12" fill="#000" stroke="#000" stroke-width=".25" font-size="9">+</text></g><g transform="translate(369.6 485.0)"><path d="M0 0L-.9-7C-1.400-12-4.500-15-6.900-18.700A9.200 9.200 0 1 1 6.900-18.700C4.500-15 1.400-12 .9-7Z" fill="#bfc9fb"/><text y="-19.5" fill="#000" stroke="#000" stroke-width=".3">II</text></g><g transform="translate(379.8 485.1)"><path d="M0 0L-.9-7C-1.400-12-4.500-15-6.900-18.700A9.200 9.200 0 1 1 6.900-18.700C4.500-15 1.400-12 .9-7Z" fill="#bfc9fb"/><text y="-19.5" fill="#000" stroke="#000" stroke-width=".3">II</text></g><g transform="translate(371.0 486.0)"><path d="M0 0L-.9-7C-1.400-12-4.500-15-6.900-18.700A9.200 9.200 0 1 1 6.900-18.700C4.500-15 1.400-12 .9-7Z" fill="#bfc9fb"/><text y="-19.5" fill="#000" stroke="#000" stroke-width=".3">II</text></g><g transform="translate(393.1 487.2)"><path d="M0 0L-.9-7C-1.400-12-4.500-15-6.900-18.700A9.200 9.200 0 1 1 6.900-18.700C4.500-15 1.400-12 .9-7Z" fill="#bfc9fb"/><text y="-19.5" fill="#000" stroke="#000" stroke-width=".3">II</text><text y="-12" fill="#000" stroke="#000" stroke-width=".25" font-size="9">+</text></g><g transform="translate(374.3 490.3)"><path d="M0 0L-.9-7C-1.400-12-4.500-15-6.900-18.700A9.200 9.200 0 1 1 6.900-18.700C4.500-15 1.400-12 .9-7Z" fill="#bfc9fb"/><text y="-19.5" fill="#000" stroke="#000" stroke-width=".3">II</text></g><g transform="translate(375.0 498.0)"><path d="M0 0L-.9-7C-1.400-12-4.500-15-6.900-18.700A9.200 9.200 0 1 1 6.900-18.700C4.500-15 1.400-12 .9-7Z" fill="#bfc9fb"/><text y="-19.5" fill="#000" stroke="#000" stroke-width=".3">II</text></g><g transform="translate(388.0 510.7)"><path d="M0 0L-.9-7C-1.400-12-4.500-15-6.900-18.700A9.200 9.200 0 1 1 6.900-18.700C4.500-15 1.400-12 .9-7Z" fill="#bfc9fb"/><text y="-19.5" fill="#000" stroke="#000" stroke-width=".3">II</text></g></g><polygon points="216.9,376.6 220.1,385.7 229.7,385.9 222.0,391.8 224.8,401.0 216.9,395.5 209.0,401.0 211.8,391.8 204.1,385.9 213.7,385.7" fill="#ff0000" stroke="#000" stroke-width="0.8"/></svg>
<div id="zoom"><div>+</div><div>&#8722;</div></div>
<div id="mpos">40.86 , 1.5</div>
<div class="sc" id="sckm">100 km</div>
<div class="sc" id="scmi">100 mi</div>
<div id="attr"><a>Leaflet</a> | Cartografía - <a>Instituto Geográfico Nacional - España</a></div>
</div>
<div id="legend"><div class="lc" style="left:0px;background:#ffffff">I</div><div class="lc" style="left:101px;background:#bfccff">II</div><div class="lc" style="left:202px;background:#a0e6ff">III</div><div class="lc" style="left:303px;background:#80ffff">IV</div><div class="lc" style="left:404px;background:#7aff93">V</div><div class="lc" style="left:505px;background:#ffff00">VI</div><div class="lc" style="left:606px;background:#ffc800">VII</div><div class="lc" style="left:707px;background:#ff9100">VIII</div><div class="lc" style="left:808px;background:#ff0000">IX</div><div class="lc" style="left:909px;background:#c80000">X</div></div>
</body></html>
